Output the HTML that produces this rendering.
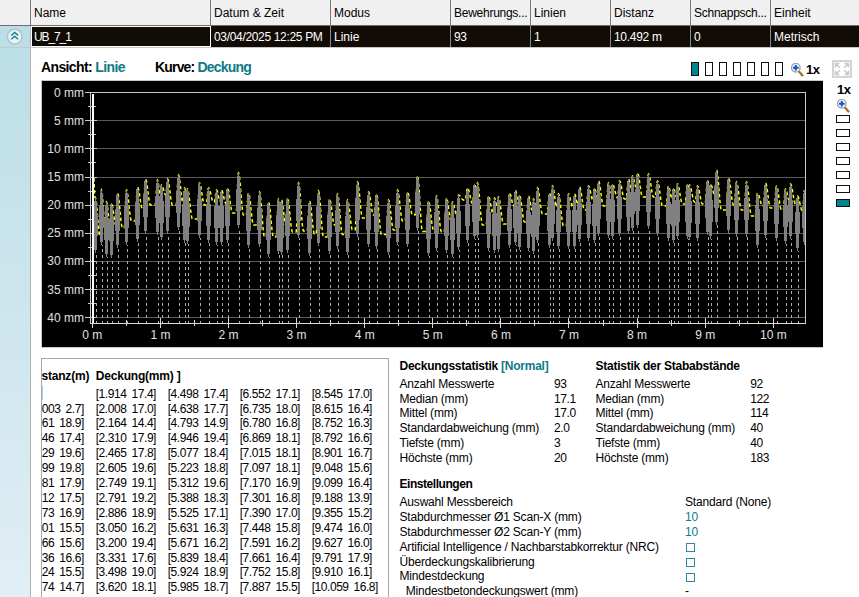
<!DOCTYPE html><html><head><meta charset="utf-8"><style>
*{margin:0;padding:0;box-sizing:border-box}
html,body{width:859px;height:597px;overflow:hidden;background:#fff;font-family:"Liberation Sans",sans-serif;font-size:12px;color:#000}
.a{position:absolute;white-space:nowrap;line-height:14px}
.vs{position:absolute;top:0;width:1px;height:25px;background:#7a7a7a}
.ht{position:absolute;top:6px;font-size:12px;color:#000;white-space:nowrap;line-height:14px}
.rs{position:absolute;top:26px;width:1px;height:21px;background:#8a8a8a}
.rt{position:absolute;top:30px;font-size:12px;color:#fff;white-space:nowrap;line-height:14px}
.lbl{position:absolute;top:59px;font-size:14px;font-weight:bold;white-space:nowrap;line-height:16px;letter-spacing:-0.62px}
.teal{color:#0f7a88}
.tb{position:absolute;font-size:12px;white-space:nowrap;line-height:14px}
.b{font-weight:bold}
</style></head><body>
<div class="a" style="left:0px;top:0px;width:859px;height:25px;background:#f0f0f0;"></div>
<div class="a" style="left:0px;top:25px;width:859px;height:1px;background:#6e6e6e;"></div>
<div class="vs" style="left:30px"></div>
<div class="vs" style="left:210px"></div>
<div class="vs" style="left:330px"></div>
<div class="vs" style="left:450px"></div>
<div class="vs" style="left:530px"></div>
<div class="vs" style="left:610px"></div>
<div class="vs" style="left:690px"></div>
<div class="vs" style="left:770px"></div>
<div class="ht" style="left:34px;letter-spacing:0px">Name</div>
<div class="ht" style="left:214px;letter-spacing:0px">Datum &amp; Zeit</div>
<div class="ht" style="left:334px;letter-spacing:0px">Modus</div>
<div class="ht" style="left:454px;letter-spacing:-0.26px">Bewehrungs...</div>
<div class="ht" style="left:534px;letter-spacing:0px">Linien</div>
<div class="ht" style="left:614px;letter-spacing:0px">Distanz</div>
<div class="ht" style="left:694px;letter-spacing:-0.26px">Schnappsch...</div>
<div class="ht" style="left:774px;letter-spacing:0px">Einheit</div>
<div class="a" style="left:0px;top:26px;width:30px;height:571px;background:linear-gradient(#bbdee6,#cee6ee 52%,#e1eef5);"></div>
<div class="a" style="left:30px;top:26px;width:1px;height:571px;background:#b4b4b4;"></div>
<div class="a" style="left:31px;top:26px;width:180px;height:21px;background:#ffffff;"></div>
<div class="a" style="left:32px;top:27px;width:178px;height:19px;background:#120c06;"></div>
<div class="a" style="left:211px;top:26px;width:648px;height:21px;background:#120c06;"></div>
<div class="rs" style="left:330px"></div>
<div class="rs" style="left:450px"></div>
<div class="rs" style="left:530px"></div>
<div class="rs" style="left:610px"></div>
<div class="rs" style="left:690px"></div>
<div class="rs" style="left:770px"></div>
<div class="rt" style="left:34px;letter-spacing:-1.1px">UB_7_1</div>
<div class="rt" style="left:214px;letter-spacing:-0.33px">03/04/2025 12:25 PM</div>
<div class="rt" style="left:334px;letter-spacing:0px">Linie</div>
<div class="rt" style="left:454px;letter-spacing:-0.3px">93</div>
<div class="rt" style="left:534px;letter-spacing:0px">1</div>
<div class="rt" style="left:614px;letter-spacing:-0.3px">10.492 m</div>
<div class="rt" style="left:694px;letter-spacing:0px">0</div>
<div class="rt" style="left:774px;letter-spacing:0px">Metrisch</div>
<div class="a" style="left:0px;top:47px;width:859px;height:1px;background:#c8c8c8;"></div>
<svg class="a" style="left:6px;top:28px" width="18" height="18" viewBox="0 0 18 18">
<circle cx="8.7" cy="8.6" r="7.4" fill="#eef0f0" stroke="#a6c9d2" stroke-width="1.6"/>
<path d="M5.3 7.4 L8.7 4.4 L12.1 7.4 M5.3 11.2 L8.7 8.2 L12.1 11.2" fill="none" stroke="#12899a" stroke-width="1.45"/>
</svg>
<div class="lbl" style="left:41px">Ansicht: <span class="teal">Linie</span></div>
<div class="lbl" style="left:155px;letter-spacing:-0.82px">Kurve: <span class="teal">Deckung</span></div>
<div class="a" style="left:691px;top:62px;width:8px;height:14px;background:#00858f;border:1px solid #111"></div>
<div class="a" style="left:705px;top:62px;width:8px;height:14px;background:#fff;border:1px solid #111"></div>
<div class="a" style="left:719px;top:62px;width:8px;height:14px;background:#fff;border:1px solid #111"></div>
<div class="a" style="left:733px;top:62px;width:8px;height:14px;background:#fff;border:1px solid #111"></div>
<div class="a" style="left:747px;top:62px;width:8px;height:14px;background:#fff;border:1px solid #111"></div>
<div class="a" style="left:761px;top:62px;width:8px;height:14px;background:#fff;border:1px solid #111"></div>
<div class="a" style="left:775px;top:62px;width:8px;height:14px;background:#fff;border:1px solid #111"></div>
<svg class="a" style="left:790px;top:63px" width="14" height="14" viewBox="0 0 14 14">
<line x1="9" y1="8.6" x2="12.4" y2="12.4" stroke="#b06a28" stroke-width="2.3" stroke-linecap="round"/>
<circle cx="5.8" cy="4.7" r="4.3" fill="#f6f9ff" stroke="#9ca3ab" stroke-width="1.3"/>
<path d="M5.8 1.9 V7.5 M3 4.7 H8.6" stroke="#0a56cc" stroke-width="2"/>
</svg>
<div class="a b" style="left:806px;top:62px;font-size:13px;line-height:15px;letter-spacing:-0.6px">1x</div>
<div class="a" style="left:832px;top:60px;width:20px;height:18px;background:#fff;border:2px solid #d4d4d4"></div>
<svg class="a" style="left:830px;top:58px" width="24" height="22" viewBox="0 0 24 22">
<g fill="#cacaca" stroke="#cacaca" stroke-width="1.6">
<path d="M5 5 H9.5 L5 9.5 Z M19 5 H14.5 L19 9.5 Z M5 17 H9.5 L5 12.5 Z M19 17 H14.5 L19 12.5 Z" stroke-width="0.6"/>
<path d="M5.5 5.5 L9.8 9.8 M18.5 5.5 L14.2 9.8 M5.5 16.5 L9.8 12.2 M18.5 16.5 L14.2 12.2" fill="none"/>
</g></svg>
<div class="a b" style="left:837px;top:82px;font-size:13px;line-height:15px;letter-spacing:-0.6px">1x</div>
<svg class="a" style="left:836px;top:99px" width="14" height="14" viewBox="0 0 14 14">
<line x1="9" y1="8.6" x2="12.4" y2="12.4" stroke="#b06a28" stroke-width="2.3" stroke-linecap="round"/>
<circle cx="5.8" cy="4.7" r="4.3" fill="#f6f9ff" stroke="#9ca3ab" stroke-width="1.3"/>
<path d="M5.8 1.9 V7.5 M3 4.7 H8.6" stroke="#0a56cc" stroke-width="2"/>
</svg>
<div class="a" style="left:836px;top:115px;width:14px;height:8px;background:#fff;border:1px solid #111"></div>
<div class="a" style="left:836px;top:129px;width:14px;height:8px;background:#fff;border:1px solid #111"></div>
<div class="a" style="left:836px;top:143px;width:14px;height:8px;background:#fff;border:1px solid #111"></div>
<div class="a" style="left:836px;top:157px;width:14px;height:8px;background:#fff;border:1px solid #111"></div>
<div class="a" style="left:836px;top:171px;width:14px;height:8px;background:#fff;border:1px solid #111"></div>
<div class="a" style="left:836px;top:185px;width:14px;height:8px;background:#fff;border:1px solid #111"></div>
<div class="a" style="left:836px;top:199px;width:14px;height:8px;background:#00858f;border:1px solid #111"></div>
<div class="a" style="left:41px;top:80px;width:782px;height:268px;background:#000;border-top:1px solid #c8c8c8;border-left:1px solid #c8c8c8;border-bottom:1px solid #c8c8c8"></div>
<svg class="a" style="left:0;top:0" width="859" height="597" shape-rendering="crispEdges">
<rect x="97" y="120" width="708" height="1" fill="#5a5a5a"/>
<rect x="97" y="148" width="708" height="1" fill="#5a5a5a"/>
<rect x="97" y="177" width="708" height="1" fill="#5a5a5a"/>
<rect x="97" y="205" width="708" height="1" fill="#5a5a5a"/>
<rect x="97" y="233" width="708" height="1" fill="#5a5a5a"/>
<rect x="97" y="261" width="708" height="1" fill="#5a5a5a"/>
<rect x="97" y="289" width="708" height="1" fill="#5a5a5a"/>
<rect x="97" y="317" width="708" height="1" fill="#5a5a5a"/>
<rect x="85" y="92" width="721" height="1" fill="#c8c8c8"/>
<rect x="85" y="92" width="12" height="1" fill="#c8c8c8"/>
<rect x="85" y="120" width="12" height="1" fill="#c8c8c8"/>
<rect x="85" y="148" width="12" height="1" fill="#c8c8c8"/>
<rect x="85" y="177" width="12" height="1" fill="#c8c8c8"/>
<rect x="85" y="205" width="12" height="1" fill="#c8c8c8"/>
<rect x="85" y="233" width="12" height="1" fill="#c8c8c8"/>
<rect x="85" y="261" width="12" height="1" fill="#c8c8c8"/>
<rect x="85" y="289" width="12" height="1" fill="#c8c8c8"/>
<rect x="85" y="317" width="12" height="1" fill="#c8c8c8"/>
<rect x="88" y="106" width="8" height="1" fill="#c8c8c8"/>
<rect x="88" y="134" width="8" height="1" fill="#c8c8c8"/>
<rect x="88" y="162" width="8" height="1" fill="#c8c8c8"/>
<rect x="88" y="191" width="8" height="1" fill="#c8c8c8"/>
<rect x="88" y="219" width="8" height="1" fill="#c8c8c8"/>
<rect x="88" y="247" width="8" height="1" fill="#c8c8c8"/>
<rect x="88" y="275" width="8" height="1" fill="#c8c8c8"/>
<rect x="88" y="303" width="8" height="1" fill="#c8c8c8"/>
<rect x="805" y="92" width="1" height="232" fill="#c8c8c8"/>
<rect x="96" y="255" width="1" height="3" fill="#acacac"/>
<rect x="96" y="261" width="1" height="3" fill="#acacac"/>
<rect x="96" y="267" width="1" height="3" fill="#acacac"/>
<rect x="96" y="273" width="1" height="3" fill="#acacac"/>
<rect x="96" y="279" width="1" height="3" fill="#acacac"/>
<rect x="96" y="285" width="1" height="3" fill="#acacac"/>
<rect x="96" y="291" width="1" height="3" fill="#acacac"/>
<rect x="96" y="297" width="1" height="3" fill="#acacac"/>
<rect x="96" y="303" width="1" height="3" fill="#acacac"/>
<rect x="96" y="309" width="1" height="3" fill="#acacac"/>
<rect x="96" y="315" width="1" height="3" fill="#acacac"/>
<rect x="96" y="321" width="1" height="3" fill="#acacac"/>
<rect x="102" y="245" width="1" height="1" fill="#acacac"/>
<rect x="102" y="249" width="1" height="3" fill="#acacac"/>
<rect x="102" y="255" width="1" height="3" fill="#acacac"/>
<rect x="102" y="261" width="1" height="3" fill="#acacac"/>
<rect x="102" y="267" width="1" height="3" fill="#acacac"/>
<rect x="102" y="273" width="1" height="3" fill="#acacac"/>
<rect x="102" y="279" width="1" height="3" fill="#acacac"/>
<rect x="102" y="285" width="1" height="3" fill="#acacac"/>
<rect x="102" y="291" width="1" height="3" fill="#acacac"/>
<rect x="102" y="297" width="1" height="3" fill="#acacac"/>
<rect x="102" y="303" width="1" height="3" fill="#acacac"/>
<rect x="102" y="309" width="1" height="3" fill="#acacac"/>
<rect x="102" y="315" width="1" height="3" fill="#acacac"/>
<rect x="102" y="321" width="1" height="3" fill="#acacac"/>
<rect x="107" y="257" width="1" height="1" fill="#acacac"/>
<rect x="107" y="261" width="1" height="3" fill="#acacac"/>
<rect x="107" y="267" width="1" height="3" fill="#acacac"/>
<rect x="107" y="273" width="1" height="3" fill="#acacac"/>
<rect x="107" y="279" width="1" height="3" fill="#acacac"/>
<rect x="107" y="285" width="1" height="3" fill="#acacac"/>
<rect x="107" y="291" width="1" height="3" fill="#acacac"/>
<rect x="107" y="297" width="1" height="3" fill="#acacac"/>
<rect x="107" y="303" width="1" height="3" fill="#acacac"/>
<rect x="107" y="309" width="1" height="3" fill="#acacac"/>
<rect x="107" y="315" width="1" height="3" fill="#acacac"/>
<rect x="107" y="321" width="1" height="3" fill="#acacac"/>
<rect x="112" y="261" width="1" height="3" fill="#acacac"/>
<rect x="112" y="267" width="1" height="3" fill="#acacac"/>
<rect x="112" y="273" width="1" height="3" fill="#acacac"/>
<rect x="112" y="279" width="1" height="3" fill="#acacac"/>
<rect x="112" y="285" width="1" height="3" fill="#acacac"/>
<rect x="112" y="291" width="1" height="3" fill="#acacac"/>
<rect x="112" y="297" width="1" height="3" fill="#acacac"/>
<rect x="112" y="303" width="1" height="3" fill="#acacac"/>
<rect x="112" y="309" width="1" height="3" fill="#acacac"/>
<rect x="112" y="315" width="1" height="3" fill="#acacac"/>
<rect x="112" y="321" width="1" height="3" fill="#acacac"/>
<rect x="118" y="249" width="1" height="3" fill="#acacac"/>
<rect x="118" y="255" width="1" height="3" fill="#acacac"/>
<rect x="118" y="261" width="1" height="3" fill="#acacac"/>
<rect x="118" y="267" width="1" height="3" fill="#acacac"/>
<rect x="118" y="273" width="1" height="3" fill="#acacac"/>
<rect x="118" y="279" width="1" height="3" fill="#acacac"/>
<rect x="118" y="285" width="1" height="3" fill="#acacac"/>
<rect x="118" y="291" width="1" height="3" fill="#acacac"/>
<rect x="118" y="297" width="1" height="3" fill="#acacac"/>
<rect x="118" y="303" width="1" height="3" fill="#acacac"/>
<rect x="118" y="309" width="1" height="3" fill="#acacac"/>
<rect x="118" y="315" width="1" height="3" fill="#acacac"/>
<rect x="118" y="321" width="1" height="3" fill="#acacac"/>
<rect x="127" y="245" width="1" height="1" fill="#acacac"/>
<rect x="127" y="249" width="1" height="3" fill="#acacac"/>
<rect x="127" y="255" width="1" height="3" fill="#acacac"/>
<rect x="127" y="261" width="1" height="3" fill="#acacac"/>
<rect x="127" y="267" width="1" height="3" fill="#acacac"/>
<rect x="127" y="273" width="1" height="3" fill="#acacac"/>
<rect x="127" y="279" width="1" height="3" fill="#acacac"/>
<rect x="127" y="285" width="1" height="3" fill="#acacac"/>
<rect x="127" y="291" width="1" height="3" fill="#acacac"/>
<rect x="127" y="297" width="1" height="3" fill="#acacac"/>
<rect x="127" y="303" width="1" height="3" fill="#acacac"/>
<rect x="127" y="309" width="1" height="3" fill="#acacac"/>
<rect x="127" y="315" width="1" height="3" fill="#acacac"/>
<rect x="127" y="321" width="1" height="3" fill="#acacac"/>
<rect x="138" y="243" width="1" height="3" fill="#acacac"/>
<rect x="138" y="249" width="1" height="3" fill="#acacac"/>
<rect x="138" y="255" width="1" height="3" fill="#acacac"/>
<rect x="138" y="261" width="1" height="3" fill="#acacac"/>
<rect x="138" y="267" width="1" height="3" fill="#acacac"/>
<rect x="138" y="273" width="1" height="3" fill="#acacac"/>
<rect x="138" y="279" width="1" height="3" fill="#acacac"/>
<rect x="138" y="285" width="1" height="3" fill="#acacac"/>
<rect x="138" y="291" width="1" height="3" fill="#acacac"/>
<rect x="138" y="297" width="1" height="3" fill="#acacac"/>
<rect x="138" y="303" width="1" height="3" fill="#acacac"/>
<rect x="138" y="309" width="1" height="3" fill="#acacac"/>
<rect x="138" y="315" width="1" height="3" fill="#acacac"/>
<rect x="138" y="321" width="1" height="3" fill="#acacac"/>
<rect x="146" y="237" width="1" height="3" fill="#acacac"/>
<rect x="146" y="243" width="1" height="3" fill="#acacac"/>
<rect x="146" y="249" width="1" height="3" fill="#acacac"/>
<rect x="146" y="255" width="1" height="3" fill="#acacac"/>
<rect x="146" y="261" width="1" height="3" fill="#acacac"/>
<rect x="146" y="267" width="1" height="3" fill="#acacac"/>
<rect x="146" y="273" width="1" height="3" fill="#acacac"/>
<rect x="146" y="279" width="1" height="3" fill="#acacac"/>
<rect x="146" y="285" width="1" height="3" fill="#acacac"/>
<rect x="146" y="291" width="1" height="3" fill="#acacac"/>
<rect x="146" y="297" width="1" height="3" fill="#acacac"/>
<rect x="146" y="303" width="1" height="3" fill="#acacac"/>
<rect x="146" y="309" width="1" height="3" fill="#acacac"/>
<rect x="146" y="315" width="1" height="3" fill="#acacac"/>
<rect x="146" y="321" width="1" height="3" fill="#acacac"/>
<rect x="158" y="237" width="1" height="3" fill="#acacac"/>
<rect x="158" y="243" width="1" height="3" fill="#acacac"/>
<rect x="158" y="249" width="1" height="3" fill="#acacac"/>
<rect x="158" y="255" width="1" height="3" fill="#acacac"/>
<rect x="158" y="261" width="1" height="3" fill="#acacac"/>
<rect x="158" y="267" width="1" height="3" fill="#acacac"/>
<rect x="158" y="273" width="1" height="3" fill="#acacac"/>
<rect x="158" y="279" width="1" height="3" fill="#acacac"/>
<rect x="158" y="285" width="1" height="3" fill="#acacac"/>
<rect x="158" y="291" width="1" height="3" fill="#acacac"/>
<rect x="158" y="297" width="1" height="3" fill="#acacac"/>
<rect x="158" y="303" width="1" height="3" fill="#acacac"/>
<rect x="158" y="309" width="1" height="3" fill="#acacac"/>
<rect x="158" y="315" width="1" height="3" fill="#acacac"/>
<rect x="158" y="321" width="1" height="3" fill="#acacac"/>
<rect x="162" y="243" width="1" height="3" fill="#acacac"/>
<rect x="162" y="249" width="1" height="3" fill="#acacac"/>
<rect x="162" y="255" width="1" height="3" fill="#acacac"/>
<rect x="162" y="261" width="1" height="3" fill="#acacac"/>
<rect x="162" y="267" width="1" height="3" fill="#acacac"/>
<rect x="162" y="273" width="1" height="3" fill="#acacac"/>
<rect x="162" y="279" width="1" height="3" fill="#acacac"/>
<rect x="162" y="285" width="1" height="3" fill="#acacac"/>
<rect x="162" y="291" width="1" height="3" fill="#acacac"/>
<rect x="162" y="297" width="1" height="3" fill="#acacac"/>
<rect x="162" y="303" width="1" height="3" fill="#acacac"/>
<rect x="162" y="309" width="1" height="3" fill="#acacac"/>
<rect x="162" y="315" width="1" height="3" fill="#acacac"/>
<rect x="162" y="321" width="1" height="3" fill="#acacac"/>
<rect x="168" y="237" width="1" height="3" fill="#acacac"/>
<rect x="168" y="243" width="1" height="3" fill="#acacac"/>
<rect x="168" y="249" width="1" height="3" fill="#acacac"/>
<rect x="168" y="255" width="1" height="3" fill="#acacac"/>
<rect x="168" y="261" width="1" height="3" fill="#acacac"/>
<rect x="168" y="267" width="1" height="3" fill="#acacac"/>
<rect x="168" y="273" width="1" height="3" fill="#acacac"/>
<rect x="168" y="279" width="1" height="3" fill="#acacac"/>
<rect x="168" y="285" width="1" height="3" fill="#acacac"/>
<rect x="168" y="291" width="1" height="3" fill="#acacac"/>
<rect x="168" y="297" width="1" height="3" fill="#acacac"/>
<rect x="168" y="303" width="1" height="3" fill="#acacac"/>
<rect x="168" y="309" width="1" height="3" fill="#acacac"/>
<rect x="168" y="315" width="1" height="3" fill="#acacac"/>
<rect x="168" y="321" width="1" height="3" fill="#acacac"/>
<rect x="179" y="231" width="1" height="3" fill="#acacac"/>
<rect x="179" y="237" width="1" height="3" fill="#acacac"/>
<rect x="179" y="243" width="1" height="3" fill="#acacac"/>
<rect x="179" y="249" width="1" height="3" fill="#acacac"/>
<rect x="179" y="255" width="1" height="3" fill="#acacac"/>
<rect x="179" y="261" width="1" height="3" fill="#acacac"/>
<rect x="179" y="267" width="1" height="3" fill="#acacac"/>
<rect x="179" y="273" width="1" height="3" fill="#acacac"/>
<rect x="179" y="279" width="1" height="3" fill="#acacac"/>
<rect x="179" y="285" width="1" height="3" fill="#acacac"/>
<rect x="179" y="291" width="1" height="3" fill="#acacac"/>
<rect x="179" y="297" width="1" height="3" fill="#acacac"/>
<rect x="179" y="303" width="1" height="3" fill="#acacac"/>
<rect x="179" y="309" width="1" height="3" fill="#acacac"/>
<rect x="179" y="315" width="1" height="3" fill="#acacac"/>
<rect x="179" y="321" width="1" height="3" fill="#acacac"/>
<rect x="185" y="243" width="1" height="3" fill="#acacac"/>
<rect x="185" y="249" width="1" height="3" fill="#acacac"/>
<rect x="185" y="255" width="1" height="3" fill="#acacac"/>
<rect x="185" y="261" width="1" height="3" fill="#acacac"/>
<rect x="185" y="267" width="1" height="3" fill="#acacac"/>
<rect x="185" y="273" width="1" height="3" fill="#acacac"/>
<rect x="185" y="279" width="1" height="3" fill="#acacac"/>
<rect x="185" y="285" width="1" height="3" fill="#acacac"/>
<rect x="185" y="291" width="1" height="3" fill="#acacac"/>
<rect x="185" y="297" width="1" height="3" fill="#acacac"/>
<rect x="185" y="303" width="1" height="3" fill="#acacac"/>
<rect x="185" y="309" width="1" height="3" fill="#acacac"/>
<rect x="185" y="315" width="1" height="3" fill="#acacac"/>
<rect x="185" y="321" width="1" height="3" fill="#acacac"/>
<rect x="188" y="244" width="1" height="2" fill="#acacac"/>
<rect x="188" y="249" width="1" height="3" fill="#acacac"/>
<rect x="188" y="255" width="1" height="3" fill="#acacac"/>
<rect x="188" y="261" width="1" height="3" fill="#acacac"/>
<rect x="188" y="267" width="1" height="3" fill="#acacac"/>
<rect x="188" y="273" width="1" height="3" fill="#acacac"/>
<rect x="188" y="279" width="1" height="3" fill="#acacac"/>
<rect x="188" y="285" width="1" height="3" fill="#acacac"/>
<rect x="188" y="291" width="1" height="3" fill="#acacac"/>
<rect x="188" y="297" width="1" height="3" fill="#acacac"/>
<rect x="188" y="303" width="1" height="3" fill="#acacac"/>
<rect x="188" y="309" width="1" height="3" fill="#acacac"/>
<rect x="188" y="315" width="1" height="3" fill="#acacac"/>
<rect x="188" y="321" width="1" height="3" fill="#acacac"/>
<rect x="200" y="238" width="1" height="2" fill="#acacac"/>
<rect x="200" y="243" width="1" height="3" fill="#acacac"/>
<rect x="200" y="249" width="1" height="3" fill="#acacac"/>
<rect x="200" y="255" width="1" height="3" fill="#acacac"/>
<rect x="200" y="261" width="1" height="3" fill="#acacac"/>
<rect x="200" y="267" width="1" height="3" fill="#acacac"/>
<rect x="200" y="273" width="1" height="3" fill="#acacac"/>
<rect x="200" y="279" width="1" height="3" fill="#acacac"/>
<rect x="200" y="285" width="1" height="3" fill="#acacac"/>
<rect x="200" y="291" width="1" height="3" fill="#acacac"/>
<rect x="200" y="297" width="1" height="3" fill="#acacac"/>
<rect x="200" y="303" width="1" height="3" fill="#acacac"/>
<rect x="200" y="309" width="1" height="3" fill="#acacac"/>
<rect x="200" y="315" width="1" height="3" fill="#acacac"/>
<rect x="200" y="321" width="1" height="3" fill="#acacac"/>
<rect x="209" y="243" width="1" height="3" fill="#acacac"/>
<rect x="209" y="249" width="1" height="3" fill="#acacac"/>
<rect x="209" y="255" width="1" height="3" fill="#acacac"/>
<rect x="209" y="261" width="1" height="3" fill="#acacac"/>
<rect x="209" y="267" width="1" height="3" fill="#acacac"/>
<rect x="209" y="273" width="1" height="3" fill="#acacac"/>
<rect x="209" y="279" width="1" height="3" fill="#acacac"/>
<rect x="209" y="285" width="1" height="3" fill="#acacac"/>
<rect x="209" y="291" width="1" height="3" fill="#acacac"/>
<rect x="209" y="297" width="1" height="3" fill="#acacac"/>
<rect x="209" y="303" width="1" height="3" fill="#acacac"/>
<rect x="209" y="309" width="1" height="3" fill="#acacac"/>
<rect x="209" y="315" width="1" height="3" fill="#acacac"/>
<rect x="209" y="321" width="1" height="3" fill="#acacac"/>
<rect x="217" y="245" width="1" height="1" fill="#acacac"/>
<rect x="217" y="249" width="1" height="3" fill="#acacac"/>
<rect x="217" y="255" width="1" height="3" fill="#acacac"/>
<rect x="217" y="261" width="1" height="3" fill="#acacac"/>
<rect x="217" y="267" width="1" height="3" fill="#acacac"/>
<rect x="217" y="273" width="1" height="3" fill="#acacac"/>
<rect x="217" y="279" width="1" height="3" fill="#acacac"/>
<rect x="217" y="285" width="1" height="3" fill="#acacac"/>
<rect x="217" y="291" width="1" height="3" fill="#acacac"/>
<rect x="217" y="297" width="1" height="3" fill="#acacac"/>
<rect x="217" y="303" width="1" height="3" fill="#acacac"/>
<rect x="217" y="309" width="1" height="3" fill="#acacac"/>
<rect x="217" y="315" width="1" height="3" fill="#acacac"/>
<rect x="217" y="321" width="1" height="3" fill="#acacac"/>
<rect x="222" y="245" width="1" height="1" fill="#acacac"/>
<rect x="222" y="249" width="1" height="3" fill="#acacac"/>
<rect x="222" y="255" width="1" height="3" fill="#acacac"/>
<rect x="222" y="261" width="1" height="3" fill="#acacac"/>
<rect x="222" y="267" width="1" height="3" fill="#acacac"/>
<rect x="222" y="273" width="1" height="3" fill="#acacac"/>
<rect x="222" y="279" width="1" height="3" fill="#acacac"/>
<rect x="222" y="285" width="1" height="3" fill="#acacac"/>
<rect x="222" y="291" width="1" height="3" fill="#acacac"/>
<rect x="222" y="297" width="1" height="3" fill="#acacac"/>
<rect x="222" y="303" width="1" height="3" fill="#acacac"/>
<rect x="222" y="309" width="1" height="3" fill="#acacac"/>
<rect x="222" y="315" width="1" height="3" fill="#acacac"/>
<rect x="222" y="321" width="1" height="3" fill="#acacac"/>
<rect x="228" y="243" width="1" height="3" fill="#acacac"/>
<rect x="228" y="249" width="1" height="3" fill="#acacac"/>
<rect x="228" y="255" width="1" height="3" fill="#acacac"/>
<rect x="228" y="261" width="1" height="3" fill="#acacac"/>
<rect x="228" y="267" width="1" height="3" fill="#acacac"/>
<rect x="228" y="273" width="1" height="3" fill="#acacac"/>
<rect x="228" y="279" width="1" height="3" fill="#acacac"/>
<rect x="228" y="285" width="1" height="3" fill="#acacac"/>
<rect x="228" y="291" width="1" height="3" fill="#acacac"/>
<rect x="228" y="297" width="1" height="3" fill="#acacac"/>
<rect x="228" y="303" width="1" height="3" fill="#acacac"/>
<rect x="228" y="309" width="1" height="3" fill="#acacac"/>
<rect x="228" y="315" width="1" height="3" fill="#acacac"/>
<rect x="228" y="321" width="1" height="3" fill="#acacac"/>
<rect x="239" y="231" width="1" height="3" fill="#acacac"/>
<rect x="239" y="237" width="1" height="3" fill="#acacac"/>
<rect x="239" y="243" width="1" height="3" fill="#acacac"/>
<rect x="239" y="249" width="1" height="3" fill="#acacac"/>
<rect x="239" y="255" width="1" height="3" fill="#acacac"/>
<rect x="239" y="261" width="1" height="3" fill="#acacac"/>
<rect x="239" y="267" width="1" height="3" fill="#acacac"/>
<rect x="239" y="273" width="1" height="3" fill="#acacac"/>
<rect x="239" y="279" width="1" height="3" fill="#acacac"/>
<rect x="239" y="285" width="1" height="3" fill="#acacac"/>
<rect x="239" y="291" width="1" height="3" fill="#acacac"/>
<rect x="239" y="297" width="1" height="3" fill="#acacac"/>
<rect x="239" y="303" width="1" height="3" fill="#acacac"/>
<rect x="239" y="309" width="1" height="3" fill="#acacac"/>
<rect x="239" y="315" width="1" height="3" fill="#acacac"/>
<rect x="239" y="321" width="1" height="3" fill="#acacac"/>
<rect x="249" y="249" width="1" height="3" fill="#acacac"/>
<rect x="249" y="255" width="1" height="3" fill="#acacac"/>
<rect x="249" y="261" width="1" height="3" fill="#acacac"/>
<rect x="249" y="267" width="1" height="3" fill="#acacac"/>
<rect x="249" y="273" width="1" height="3" fill="#acacac"/>
<rect x="249" y="279" width="1" height="3" fill="#acacac"/>
<rect x="249" y="285" width="1" height="3" fill="#acacac"/>
<rect x="249" y="291" width="1" height="3" fill="#acacac"/>
<rect x="249" y="297" width="1" height="3" fill="#acacac"/>
<rect x="249" y="303" width="1" height="3" fill="#acacac"/>
<rect x="249" y="309" width="1" height="3" fill="#acacac"/>
<rect x="249" y="315" width="1" height="3" fill="#acacac"/>
<rect x="249" y="321" width="1" height="3" fill="#acacac"/>
<rect x="260" y="249" width="1" height="3" fill="#acacac"/>
<rect x="260" y="255" width="1" height="3" fill="#acacac"/>
<rect x="260" y="261" width="1" height="3" fill="#acacac"/>
<rect x="260" y="267" width="1" height="3" fill="#acacac"/>
<rect x="260" y="273" width="1" height="3" fill="#acacac"/>
<rect x="260" y="279" width="1" height="3" fill="#acacac"/>
<rect x="260" y="285" width="1" height="3" fill="#acacac"/>
<rect x="260" y="291" width="1" height="3" fill="#acacac"/>
<rect x="260" y="297" width="1" height="3" fill="#acacac"/>
<rect x="260" y="303" width="1" height="3" fill="#acacac"/>
<rect x="260" y="309" width="1" height="3" fill="#acacac"/>
<rect x="260" y="315" width="1" height="3" fill="#acacac"/>
<rect x="260" y="321" width="1" height="3" fill="#acacac"/>
<rect x="269" y="257" width="1" height="1" fill="#acacac"/>
<rect x="269" y="261" width="1" height="3" fill="#acacac"/>
<rect x="269" y="267" width="1" height="3" fill="#acacac"/>
<rect x="269" y="273" width="1" height="3" fill="#acacac"/>
<rect x="269" y="279" width="1" height="3" fill="#acacac"/>
<rect x="269" y="285" width="1" height="3" fill="#acacac"/>
<rect x="269" y="291" width="1" height="3" fill="#acacac"/>
<rect x="269" y="297" width="1" height="3" fill="#acacac"/>
<rect x="269" y="303" width="1" height="3" fill="#acacac"/>
<rect x="269" y="309" width="1" height="3" fill="#acacac"/>
<rect x="269" y="315" width="1" height="3" fill="#acacac"/>
<rect x="269" y="321" width="1" height="3" fill="#acacac"/>
<rect x="279" y="255" width="1" height="3" fill="#acacac"/>
<rect x="279" y="261" width="1" height="3" fill="#acacac"/>
<rect x="279" y="267" width="1" height="3" fill="#acacac"/>
<rect x="279" y="273" width="1" height="3" fill="#acacac"/>
<rect x="279" y="279" width="1" height="3" fill="#acacac"/>
<rect x="279" y="285" width="1" height="3" fill="#acacac"/>
<rect x="279" y="291" width="1" height="3" fill="#acacac"/>
<rect x="279" y="297" width="1" height="3" fill="#acacac"/>
<rect x="279" y="303" width="1" height="3" fill="#acacac"/>
<rect x="279" y="309" width="1" height="3" fill="#acacac"/>
<rect x="279" y="315" width="1" height="3" fill="#acacac"/>
<rect x="279" y="321" width="1" height="3" fill="#acacac"/>
<rect x="282" y="255" width="1" height="3" fill="#acacac"/>
<rect x="282" y="261" width="1" height="3" fill="#acacac"/>
<rect x="282" y="267" width="1" height="3" fill="#acacac"/>
<rect x="282" y="273" width="1" height="3" fill="#acacac"/>
<rect x="282" y="279" width="1" height="3" fill="#acacac"/>
<rect x="282" y="285" width="1" height="3" fill="#acacac"/>
<rect x="282" y="291" width="1" height="3" fill="#acacac"/>
<rect x="282" y="297" width="1" height="3" fill="#acacac"/>
<rect x="282" y="303" width="1" height="3" fill="#acacac"/>
<rect x="282" y="309" width="1" height="3" fill="#acacac"/>
<rect x="282" y="315" width="1" height="3" fill="#acacac"/>
<rect x="282" y="321" width="1" height="3" fill="#acacac"/>
<rect x="288" y="255" width="1" height="3" fill="#acacac"/>
<rect x="288" y="261" width="1" height="3" fill="#acacac"/>
<rect x="288" y="267" width="1" height="3" fill="#acacac"/>
<rect x="288" y="273" width="1" height="3" fill="#acacac"/>
<rect x="288" y="279" width="1" height="3" fill="#acacac"/>
<rect x="288" y="285" width="1" height="3" fill="#acacac"/>
<rect x="288" y="291" width="1" height="3" fill="#acacac"/>
<rect x="288" y="297" width="1" height="3" fill="#acacac"/>
<rect x="288" y="303" width="1" height="3" fill="#acacac"/>
<rect x="288" y="309" width="1" height="3" fill="#acacac"/>
<rect x="288" y="315" width="1" height="3" fill="#acacac"/>
<rect x="288" y="321" width="1" height="3" fill="#acacac"/>
<rect x="299" y="238" width="1" height="2" fill="#acacac"/>
<rect x="299" y="243" width="1" height="3" fill="#acacac"/>
<rect x="299" y="249" width="1" height="3" fill="#acacac"/>
<rect x="299" y="255" width="1" height="3" fill="#acacac"/>
<rect x="299" y="261" width="1" height="3" fill="#acacac"/>
<rect x="299" y="267" width="1" height="3" fill="#acacac"/>
<rect x="299" y="273" width="1" height="3" fill="#acacac"/>
<rect x="299" y="279" width="1" height="3" fill="#acacac"/>
<rect x="299" y="285" width="1" height="3" fill="#acacac"/>
<rect x="299" y="291" width="1" height="3" fill="#acacac"/>
<rect x="299" y="297" width="1" height="3" fill="#acacac"/>
<rect x="299" y="303" width="1" height="3" fill="#acacac"/>
<rect x="299" y="309" width="1" height="3" fill="#acacac"/>
<rect x="299" y="315" width="1" height="3" fill="#acacac"/>
<rect x="299" y="321" width="1" height="3" fill="#acacac"/>
<rect x="310" y="256" width="1" height="2" fill="#acacac"/>
<rect x="310" y="261" width="1" height="3" fill="#acacac"/>
<rect x="310" y="267" width="1" height="3" fill="#acacac"/>
<rect x="310" y="273" width="1" height="3" fill="#acacac"/>
<rect x="310" y="279" width="1" height="3" fill="#acacac"/>
<rect x="310" y="285" width="1" height="3" fill="#acacac"/>
<rect x="310" y="291" width="1" height="3" fill="#acacac"/>
<rect x="310" y="297" width="1" height="3" fill="#acacac"/>
<rect x="310" y="303" width="1" height="3" fill="#acacac"/>
<rect x="310" y="309" width="1" height="3" fill="#acacac"/>
<rect x="310" y="315" width="1" height="3" fill="#acacac"/>
<rect x="310" y="321" width="1" height="3" fill="#acacac"/>
<rect x="319" y="249" width="1" height="3" fill="#acacac"/>
<rect x="319" y="255" width="1" height="3" fill="#acacac"/>
<rect x="319" y="261" width="1" height="3" fill="#acacac"/>
<rect x="319" y="267" width="1" height="3" fill="#acacac"/>
<rect x="319" y="273" width="1" height="3" fill="#acacac"/>
<rect x="319" y="279" width="1" height="3" fill="#acacac"/>
<rect x="319" y="285" width="1" height="3" fill="#acacac"/>
<rect x="319" y="291" width="1" height="3" fill="#acacac"/>
<rect x="319" y="297" width="1" height="3" fill="#acacac"/>
<rect x="319" y="303" width="1" height="3" fill="#acacac"/>
<rect x="319" y="309" width="1" height="3" fill="#acacac"/>
<rect x="319" y="315" width="1" height="3" fill="#acacac"/>
<rect x="319" y="321" width="1" height="3" fill="#acacac"/>
<rect x="330" y="255" width="1" height="3" fill="#acacac"/>
<rect x="330" y="261" width="1" height="3" fill="#acacac"/>
<rect x="330" y="267" width="1" height="3" fill="#acacac"/>
<rect x="330" y="273" width="1" height="3" fill="#acacac"/>
<rect x="330" y="279" width="1" height="3" fill="#acacac"/>
<rect x="330" y="285" width="1" height="3" fill="#acacac"/>
<rect x="330" y="291" width="1" height="3" fill="#acacac"/>
<rect x="330" y="297" width="1" height="3" fill="#acacac"/>
<rect x="330" y="303" width="1" height="3" fill="#acacac"/>
<rect x="330" y="309" width="1" height="3" fill="#acacac"/>
<rect x="330" y="315" width="1" height="3" fill="#acacac"/>
<rect x="330" y="321" width="1" height="3" fill="#acacac"/>
<rect x="338" y="249" width="1" height="3" fill="#acacac"/>
<rect x="338" y="255" width="1" height="3" fill="#acacac"/>
<rect x="338" y="261" width="1" height="3" fill="#acacac"/>
<rect x="338" y="267" width="1" height="3" fill="#acacac"/>
<rect x="338" y="273" width="1" height="3" fill="#acacac"/>
<rect x="338" y="279" width="1" height="3" fill="#acacac"/>
<rect x="338" y="285" width="1" height="3" fill="#acacac"/>
<rect x="338" y="291" width="1" height="3" fill="#acacac"/>
<rect x="338" y="297" width="1" height="3" fill="#acacac"/>
<rect x="338" y="303" width="1" height="3" fill="#acacac"/>
<rect x="338" y="309" width="1" height="3" fill="#acacac"/>
<rect x="338" y="315" width="1" height="3" fill="#acacac"/>
<rect x="338" y="321" width="1" height="3" fill="#acacac"/>
<rect x="348" y="255" width="1" height="3" fill="#acacac"/>
<rect x="348" y="261" width="1" height="3" fill="#acacac"/>
<rect x="348" y="267" width="1" height="3" fill="#acacac"/>
<rect x="348" y="273" width="1" height="3" fill="#acacac"/>
<rect x="348" y="279" width="1" height="3" fill="#acacac"/>
<rect x="348" y="285" width="1" height="3" fill="#acacac"/>
<rect x="348" y="291" width="1" height="3" fill="#acacac"/>
<rect x="348" y="297" width="1" height="3" fill="#acacac"/>
<rect x="348" y="303" width="1" height="3" fill="#acacac"/>
<rect x="348" y="309" width="1" height="3" fill="#acacac"/>
<rect x="348" y="315" width="1" height="3" fill="#acacac"/>
<rect x="348" y="321" width="1" height="3" fill="#acacac"/>
<rect x="358" y="237" width="1" height="3" fill="#acacac"/>
<rect x="358" y="243" width="1" height="3" fill="#acacac"/>
<rect x="358" y="249" width="1" height="3" fill="#acacac"/>
<rect x="358" y="255" width="1" height="3" fill="#acacac"/>
<rect x="358" y="261" width="1" height="3" fill="#acacac"/>
<rect x="358" y="267" width="1" height="3" fill="#acacac"/>
<rect x="358" y="273" width="1" height="3" fill="#acacac"/>
<rect x="358" y="279" width="1" height="3" fill="#acacac"/>
<rect x="358" y="285" width="1" height="3" fill="#acacac"/>
<rect x="358" y="291" width="1" height="3" fill="#acacac"/>
<rect x="358" y="297" width="1" height="3" fill="#acacac"/>
<rect x="358" y="303" width="1" height="3" fill="#acacac"/>
<rect x="358" y="309" width="1" height="3" fill="#acacac"/>
<rect x="358" y="315" width="1" height="3" fill="#acacac"/>
<rect x="358" y="321" width="1" height="3" fill="#acacac"/>
<rect x="369" y="249" width="1" height="3" fill="#acacac"/>
<rect x="369" y="255" width="1" height="3" fill="#acacac"/>
<rect x="369" y="261" width="1" height="3" fill="#acacac"/>
<rect x="369" y="267" width="1" height="3" fill="#acacac"/>
<rect x="369" y="273" width="1" height="3" fill="#acacac"/>
<rect x="369" y="279" width="1" height="3" fill="#acacac"/>
<rect x="369" y="285" width="1" height="3" fill="#acacac"/>
<rect x="369" y="291" width="1" height="3" fill="#acacac"/>
<rect x="369" y="297" width="1" height="3" fill="#acacac"/>
<rect x="369" y="303" width="1" height="3" fill="#acacac"/>
<rect x="369" y="309" width="1" height="3" fill="#acacac"/>
<rect x="369" y="315" width="1" height="3" fill="#acacac"/>
<rect x="369" y="321" width="1" height="3" fill="#acacac"/>
<rect x="377" y="249" width="1" height="3" fill="#acacac"/>
<rect x="377" y="255" width="1" height="3" fill="#acacac"/>
<rect x="377" y="261" width="1" height="3" fill="#acacac"/>
<rect x="377" y="267" width="1" height="3" fill="#acacac"/>
<rect x="377" y="273" width="1" height="3" fill="#acacac"/>
<rect x="377" y="279" width="1" height="3" fill="#acacac"/>
<rect x="377" y="285" width="1" height="3" fill="#acacac"/>
<rect x="377" y="291" width="1" height="3" fill="#acacac"/>
<rect x="377" y="297" width="1" height="3" fill="#acacac"/>
<rect x="377" y="303" width="1" height="3" fill="#acacac"/>
<rect x="377" y="309" width="1" height="3" fill="#acacac"/>
<rect x="377" y="315" width="1" height="3" fill="#acacac"/>
<rect x="377" y="321" width="1" height="3" fill="#acacac"/>
<rect x="389" y="255" width="1" height="3" fill="#acacac"/>
<rect x="389" y="261" width="1" height="3" fill="#acacac"/>
<rect x="389" y="267" width="1" height="3" fill="#acacac"/>
<rect x="389" y="273" width="1" height="3" fill="#acacac"/>
<rect x="389" y="279" width="1" height="3" fill="#acacac"/>
<rect x="389" y="285" width="1" height="3" fill="#acacac"/>
<rect x="389" y="291" width="1" height="3" fill="#acacac"/>
<rect x="389" y="297" width="1" height="3" fill="#acacac"/>
<rect x="389" y="303" width="1" height="3" fill="#acacac"/>
<rect x="389" y="309" width="1" height="3" fill="#acacac"/>
<rect x="389" y="315" width="1" height="3" fill="#acacac"/>
<rect x="389" y="321" width="1" height="3" fill="#acacac"/>
<rect x="398" y="245" width="1" height="1" fill="#acacac"/>
<rect x="398" y="249" width="1" height="3" fill="#acacac"/>
<rect x="398" y="255" width="1" height="3" fill="#acacac"/>
<rect x="398" y="261" width="1" height="3" fill="#acacac"/>
<rect x="398" y="267" width="1" height="3" fill="#acacac"/>
<rect x="398" y="273" width="1" height="3" fill="#acacac"/>
<rect x="398" y="279" width="1" height="3" fill="#acacac"/>
<rect x="398" y="285" width="1" height="3" fill="#acacac"/>
<rect x="398" y="291" width="1" height="3" fill="#acacac"/>
<rect x="398" y="297" width="1" height="3" fill="#acacac"/>
<rect x="398" y="303" width="1" height="3" fill="#acacac"/>
<rect x="398" y="309" width="1" height="3" fill="#acacac"/>
<rect x="398" y="315" width="1" height="3" fill="#acacac"/>
<rect x="398" y="321" width="1" height="3" fill="#acacac"/>
<rect x="408" y="249" width="1" height="3" fill="#acacac"/>
<rect x="408" y="255" width="1" height="3" fill="#acacac"/>
<rect x="408" y="261" width="1" height="3" fill="#acacac"/>
<rect x="408" y="267" width="1" height="3" fill="#acacac"/>
<rect x="408" y="273" width="1" height="3" fill="#acacac"/>
<rect x="408" y="279" width="1" height="3" fill="#acacac"/>
<rect x="408" y="285" width="1" height="3" fill="#acacac"/>
<rect x="408" y="291" width="1" height="3" fill="#acacac"/>
<rect x="408" y="297" width="1" height="3" fill="#acacac"/>
<rect x="408" y="303" width="1" height="3" fill="#acacac"/>
<rect x="408" y="309" width="1" height="3" fill="#acacac"/>
<rect x="408" y="315" width="1" height="3" fill="#acacac"/>
<rect x="408" y="321" width="1" height="3" fill="#acacac"/>
<rect x="418" y="231" width="1" height="3" fill="#acacac"/>
<rect x="418" y="237" width="1" height="3" fill="#acacac"/>
<rect x="418" y="243" width="1" height="3" fill="#acacac"/>
<rect x="418" y="249" width="1" height="3" fill="#acacac"/>
<rect x="418" y="255" width="1" height="3" fill="#acacac"/>
<rect x="418" y="261" width="1" height="3" fill="#acacac"/>
<rect x="418" y="267" width="1" height="3" fill="#acacac"/>
<rect x="418" y="273" width="1" height="3" fill="#acacac"/>
<rect x="418" y="279" width="1" height="3" fill="#acacac"/>
<rect x="418" y="285" width="1" height="3" fill="#acacac"/>
<rect x="418" y="291" width="1" height="3" fill="#acacac"/>
<rect x="418" y="297" width="1" height="3" fill="#acacac"/>
<rect x="418" y="303" width="1" height="3" fill="#acacac"/>
<rect x="418" y="309" width="1" height="3" fill="#acacac"/>
<rect x="418" y="315" width="1" height="3" fill="#acacac"/>
<rect x="418" y="321" width="1" height="3" fill="#acacac"/>
<rect x="429" y="256" width="1" height="2" fill="#acacac"/>
<rect x="429" y="261" width="1" height="3" fill="#acacac"/>
<rect x="429" y="267" width="1" height="3" fill="#acacac"/>
<rect x="429" y="273" width="1" height="3" fill="#acacac"/>
<rect x="429" y="279" width="1" height="3" fill="#acacac"/>
<rect x="429" y="285" width="1" height="3" fill="#acacac"/>
<rect x="429" y="291" width="1" height="3" fill="#acacac"/>
<rect x="429" y="297" width="1" height="3" fill="#acacac"/>
<rect x="429" y="303" width="1" height="3" fill="#acacac"/>
<rect x="429" y="309" width="1" height="3" fill="#acacac"/>
<rect x="429" y="315" width="1" height="3" fill="#acacac"/>
<rect x="429" y="321" width="1" height="3" fill="#acacac"/>
<rect x="437" y="251" width="1" height="1" fill="#acacac"/>
<rect x="437" y="255" width="1" height="3" fill="#acacac"/>
<rect x="437" y="261" width="1" height="3" fill="#acacac"/>
<rect x="437" y="267" width="1" height="3" fill="#acacac"/>
<rect x="437" y="273" width="1" height="3" fill="#acacac"/>
<rect x="437" y="279" width="1" height="3" fill="#acacac"/>
<rect x="437" y="285" width="1" height="3" fill="#acacac"/>
<rect x="437" y="291" width="1" height="3" fill="#acacac"/>
<rect x="437" y="297" width="1" height="3" fill="#acacac"/>
<rect x="437" y="303" width="1" height="3" fill="#acacac"/>
<rect x="437" y="309" width="1" height="3" fill="#acacac"/>
<rect x="437" y="315" width="1" height="3" fill="#acacac"/>
<rect x="437" y="321" width="1" height="3" fill="#acacac"/>
<rect x="447" y="255" width="1" height="3" fill="#acacac"/>
<rect x="447" y="261" width="1" height="3" fill="#acacac"/>
<rect x="447" y="267" width="1" height="3" fill="#acacac"/>
<rect x="447" y="273" width="1" height="3" fill="#acacac"/>
<rect x="447" y="279" width="1" height="3" fill="#acacac"/>
<rect x="447" y="285" width="1" height="3" fill="#acacac"/>
<rect x="447" y="291" width="1" height="3" fill="#acacac"/>
<rect x="447" y="297" width="1" height="3" fill="#acacac"/>
<rect x="447" y="303" width="1" height="3" fill="#acacac"/>
<rect x="447" y="309" width="1" height="3" fill="#acacac"/>
<rect x="447" y="315" width="1" height="3" fill="#acacac"/>
<rect x="447" y="321" width="1" height="3" fill="#acacac"/>
<rect x="453" y="257" width="1" height="1" fill="#acacac"/>
<rect x="453" y="261" width="1" height="3" fill="#acacac"/>
<rect x="453" y="267" width="1" height="3" fill="#acacac"/>
<rect x="453" y="273" width="1" height="3" fill="#acacac"/>
<rect x="453" y="279" width="1" height="3" fill="#acacac"/>
<rect x="453" y="285" width="1" height="3" fill="#acacac"/>
<rect x="453" y="291" width="1" height="3" fill="#acacac"/>
<rect x="453" y="297" width="1" height="3" fill="#acacac"/>
<rect x="453" y="303" width="1" height="3" fill="#acacac"/>
<rect x="453" y="309" width="1" height="3" fill="#acacac"/>
<rect x="453" y="315" width="1" height="3" fill="#acacac"/>
<rect x="453" y="321" width="1" height="3" fill="#acacac"/>
<rect x="459" y="250" width="1" height="2" fill="#acacac"/>
<rect x="459" y="255" width="1" height="3" fill="#acacac"/>
<rect x="459" y="261" width="1" height="3" fill="#acacac"/>
<rect x="459" y="267" width="1" height="3" fill="#acacac"/>
<rect x="459" y="273" width="1" height="3" fill="#acacac"/>
<rect x="459" y="279" width="1" height="3" fill="#acacac"/>
<rect x="459" y="285" width="1" height="3" fill="#acacac"/>
<rect x="459" y="291" width="1" height="3" fill="#acacac"/>
<rect x="459" y="297" width="1" height="3" fill="#acacac"/>
<rect x="459" y="303" width="1" height="3" fill="#acacac"/>
<rect x="459" y="309" width="1" height="3" fill="#acacac"/>
<rect x="459" y="315" width="1" height="3" fill="#acacac"/>
<rect x="459" y="321" width="1" height="3" fill="#acacac"/>
<rect x="468" y="243" width="1" height="3" fill="#acacac"/>
<rect x="468" y="249" width="1" height="3" fill="#acacac"/>
<rect x="468" y="255" width="1" height="3" fill="#acacac"/>
<rect x="468" y="261" width="1" height="3" fill="#acacac"/>
<rect x="468" y="267" width="1" height="3" fill="#acacac"/>
<rect x="468" y="273" width="1" height="3" fill="#acacac"/>
<rect x="468" y="279" width="1" height="3" fill="#acacac"/>
<rect x="468" y="285" width="1" height="3" fill="#acacac"/>
<rect x="468" y="291" width="1" height="3" fill="#acacac"/>
<rect x="468" y="297" width="1" height="3" fill="#acacac"/>
<rect x="468" y="303" width="1" height="3" fill="#acacac"/>
<rect x="468" y="309" width="1" height="3" fill="#acacac"/>
<rect x="468" y="315" width="1" height="3" fill="#acacac"/>
<rect x="468" y="321" width="1" height="3" fill="#acacac"/>
<rect x="475" y="239" width="1" height="1" fill="#acacac"/>
<rect x="475" y="243" width="1" height="3" fill="#acacac"/>
<rect x="475" y="249" width="1" height="3" fill="#acacac"/>
<rect x="475" y="255" width="1" height="3" fill="#acacac"/>
<rect x="475" y="261" width="1" height="3" fill="#acacac"/>
<rect x="475" y="267" width="1" height="3" fill="#acacac"/>
<rect x="475" y="273" width="1" height="3" fill="#acacac"/>
<rect x="475" y="279" width="1" height="3" fill="#acacac"/>
<rect x="475" y="285" width="1" height="3" fill="#acacac"/>
<rect x="475" y="291" width="1" height="3" fill="#acacac"/>
<rect x="475" y="297" width="1" height="3" fill="#acacac"/>
<rect x="475" y="303" width="1" height="3" fill="#acacac"/>
<rect x="475" y="309" width="1" height="3" fill="#acacac"/>
<rect x="475" y="315" width="1" height="3" fill="#acacac"/>
<rect x="475" y="321" width="1" height="3" fill="#acacac"/>
<rect x="478" y="238" width="1" height="2" fill="#acacac"/>
<rect x="478" y="243" width="1" height="3" fill="#acacac"/>
<rect x="478" y="249" width="1" height="3" fill="#acacac"/>
<rect x="478" y="255" width="1" height="3" fill="#acacac"/>
<rect x="478" y="261" width="1" height="3" fill="#acacac"/>
<rect x="478" y="267" width="1" height="3" fill="#acacac"/>
<rect x="478" y="273" width="1" height="3" fill="#acacac"/>
<rect x="478" y="279" width="1" height="3" fill="#acacac"/>
<rect x="478" y="285" width="1" height="3" fill="#acacac"/>
<rect x="478" y="291" width="1" height="3" fill="#acacac"/>
<rect x="478" y="297" width="1" height="3" fill="#acacac"/>
<rect x="478" y="303" width="1" height="3" fill="#acacac"/>
<rect x="478" y="309" width="1" height="3" fill="#acacac"/>
<rect x="478" y="315" width="1" height="3" fill="#acacac"/>
<rect x="478" y="321" width="1" height="3" fill="#acacac"/>
<rect x="489" y="251" width="1" height="1" fill="#acacac"/>
<rect x="489" y="255" width="1" height="3" fill="#acacac"/>
<rect x="489" y="261" width="1" height="3" fill="#acacac"/>
<rect x="489" y="267" width="1" height="3" fill="#acacac"/>
<rect x="489" y="273" width="1" height="3" fill="#acacac"/>
<rect x="489" y="279" width="1" height="3" fill="#acacac"/>
<rect x="489" y="285" width="1" height="3" fill="#acacac"/>
<rect x="489" y="291" width="1" height="3" fill="#acacac"/>
<rect x="489" y="297" width="1" height="3" fill="#acacac"/>
<rect x="489" y="303" width="1" height="3" fill="#acacac"/>
<rect x="489" y="309" width="1" height="3" fill="#acacac"/>
<rect x="489" y="315" width="1" height="3" fill="#acacac"/>
<rect x="489" y="321" width="1" height="3" fill="#acacac"/>
<rect x="495" y="255" width="1" height="3" fill="#acacac"/>
<rect x="495" y="261" width="1" height="3" fill="#acacac"/>
<rect x="495" y="267" width="1" height="3" fill="#acacac"/>
<rect x="495" y="273" width="1" height="3" fill="#acacac"/>
<rect x="495" y="279" width="1" height="3" fill="#acacac"/>
<rect x="495" y="285" width="1" height="3" fill="#acacac"/>
<rect x="495" y="291" width="1" height="3" fill="#acacac"/>
<rect x="495" y="297" width="1" height="3" fill="#acacac"/>
<rect x="495" y="303" width="1" height="3" fill="#acacac"/>
<rect x="495" y="309" width="1" height="3" fill="#acacac"/>
<rect x="495" y="315" width="1" height="3" fill="#acacac"/>
<rect x="495" y="321" width="1" height="3" fill="#acacac"/>
<rect x="499" y="255" width="1" height="3" fill="#acacac"/>
<rect x="499" y="261" width="1" height="3" fill="#acacac"/>
<rect x="499" y="267" width="1" height="3" fill="#acacac"/>
<rect x="499" y="273" width="1" height="3" fill="#acacac"/>
<rect x="499" y="279" width="1" height="3" fill="#acacac"/>
<rect x="499" y="285" width="1" height="3" fill="#acacac"/>
<rect x="499" y="291" width="1" height="3" fill="#acacac"/>
<rect x="499" y="297" width="1" height="3" fill="#acacac"/>
<rect x="499" y="303" width="1" height="3" fill="#acacac"/>
<rect x="499" y="309" width="1" height="3" fill="#acacac"/>
<rect x="499" y="315" width="1" height="3" fill="#acacac"/>
<rect x="499" y="321" width="1" height="3" fill="#acacac"/>
<rect x="510" y="249" width="1" height="3" fill="#acacac"/>
<rect x="510" y="255" width="1" height="3" fill="#acacac"/>
<rect x="510" y="261" width="1" height="3" fill="#acacac"/>
<rect x="510" y="267" width="1" height="3" fill="#acacac"/>
<rect x="510" y="273" width="1" height="3" fill="#acacac"/>
<rect x="510" y="279" width="1" height="3" fill="#acacac"/>
<rect x="510" y="285" width="1" height="3" fill="#acacac"/>
<rect x="510" y="291" width="1" height="3" fill="#acacac"/>
<rect x="510" y="297" width="1" height="3" fill="#acacac"/>
<rect x="510" y="303" width="1" height="3" fill="#acacac"/>
<rect x="510" y="309" width="1" height="3" fill="#acacac"/>
<rect x="510" y="315" width="1" height="3" fill="#acacac"/>
<rect x="510" y="321" width="1" height="3" fill="#acacac"/>
<rect x="516" y="245" width="1" height="1" fill="#acacac"/>
<rect x="516" y="249" width="1" height="3" fill="#acacac"/>
<rect x="516" y="255" width="1" height="3" fill="#acacac"/>
<rect x="516" y="261" width="1" height="3" fill="#acacac"/>
<rect x="516" y="267" width="1" height="3" fill="#acacac"/>
<rect x="516" y="273" width="1" height="3" fill="#acacac"/>
<rect x="516" y="279" width="1" height="3" fill="#acacac"/>
<rect x="516" y="285" width="1" height="3" fill="#acacac"/>
<rect x="516" y="291" width="1" height="3" fill="#acacac"/>
<rect x="516" y="297" width="1" height="3" fill="#acacac"/>
<rect x="516" y="303" width="1" height="3" fill="#acacac"/>
<rect x="516" y="309" width="1" height="3" fill="#acacac"/>
<rect x="516" y="315" width="1" height="3" fill="#acacac"/>
<rect x="516" y="321" width="1" height="3" fill="#acacac"/>
<rect x="520" y="250" width="1" height="2" fill="#acacac"/>
<rect x="520" y="255" width="1" height="3" fill="#acacac"/>
<rect x="520" y="261" width="1" height="3" fill="#acacac"/>
<rect x="520" y="267" width="1" height="3" fill="#acacac"/>
<rect x="520" y="273" width="1" height="3" fill="#acacac"/>
<rect x="520" y="279" width="1" height="3" fill="#acacac"/>
<rect x="520" y="285" width="1" height="3" fill="#acacac"/>
<rect x="520" y="291" width="1" height="3" fill="#acacac"/>
<rect x="520" y="297" width="1" height="3" fill="#acacac"/>
<rect x="520" y="303" width="1" height="3" fill="#acacac"/>
<rect x="520" y="309" width="1" height="3" fill="#acacac"/>
<rect x="520" y="315" width="1" height="3" fill="#acacac"/>
<rect x="520" y="321" width="1" height="3" fill="#acacac"/>
<rect x="529" y="251" width="1" height="1" fill="#acacac"/>
<rect x="529" y="255" width="1" height="3" fill="#acacac"/>
<rect x="529" y="261" width="1" height="3" fill="#acacac"/>
<rect x="529" y="267" width="1" height="3" fill="#acacac"/>
<rect x="529" y="273" width="1" height="3" fill="#acacac"/>
<rect x="529" y="279" width="1" height="3" fill="#acacac"/>
<rect x="529" y="285" width="1" height="3" fill="#acacac"/>
<rect x="529" y="291" width="1" height="3" fill="#acacac"/>
<rect x="529" y="297" width="1" height="3" fill="#acacac"/>
<rect x="529" y="303" width="1" height="3" fill="#acacac"/>
<rect x="529" y="309" width="1" height="3" fill="#acacac"/>
<rect x="529" y="315" width="1" height="3" fill="#acacac"/>
<rect x="529" y="321" width="1" height="3" fill="#acacac"/>
<rect x="534" y="255" width="1" height="3" fill="#acacac"/>
<rect x="534" y="261" width="1" height="3" fill="#acacac"/>
<rect x="534" y="267" width="1" height="3" fill="#acacac"/>
<rect x="534" y="273" width="1" height="3" fill="#acacac"/>
<rect x="534" y="279" width="1" height="3" fill="#acacac"/>
<rect x="534" y="285" width="1" height="3" fill="#acacac"/>
<rect x="534" y="291" width="1" height="3" fill="#acacac"/>
<rect x="534" y="297" width="1" height="3" fill="#acacac"/>
<rect x="534" y="303" width="1" height="3" fill="#acacac"/>
<rect x="534" y="309" width="1" height="3" fill="#acacac"/>
<rect x="534" y="315" width="1" height="3" fill="#acacac"/>
<rect x="534" y="321" width="1" height="3" fill="#acacac"/>
<rect x="538" y="243" width="1" height="3" fill="#acacac"/>
<rect x="538" y="249" width="1" height="3" fill="#acacac"/>
<rect x="538" y="255" width="1" height="3" fill="#acacac"/>
<rect x="538" y="261" width="1" height="3" fill="#acacac"/>
<rect x="538" y="267" width="1" height="3" fill="#acacac"/>
<rect x="538" y="273" width="1" height="3" fill="#acacac"/>
<rect x="538" y="279" width="1" height="3" fill="#acacac"/>
<rect x="538" y="285" width="1" height="3" fill="#acacac"/>
<rect x="538" y="291" width="1" height="3" fill="#acacac"/>
<rect x="538" y="297" width="1" height="3" fill="#acacac"/>
<rect x="538" y="303" width="1" height="3" fill="#acacac"/>
<rect x="538" y="309" width="1" height="3" fill="#acacac"/>
<rect x="538" y="315" width="1" height="3" fill="#acacac"/>
<rect x="538" y="321" width="1" height="3" fill="#acacac"/>
<rect x="550" y="249" width="1" height="3" fill="#acacac"/>
<rect x="550" y="255" width="1" height="3" fill="#acacac"/>
<rect x="550" y="261" width="1" height="3" fill="#acacac"/>
<rect x="550" y="267" width="1" height="3" fill="#acacac"/>
<rect x="550" y="273" width="1" height="3" fill="#acacac"/>
<rect x="550" y="279" width="1" height="3" fill="#acacac"/>
<rect x="550" y="285" width="1" height="3" fill="#acacac"/>
<rect x="550" y="291" width="1" height="3" fill="#acacac"/>
<rect x="550" y="297" width="1" height="3" fill="#acacac"/>
<rect x="550" y="303" width="1" height="3" fill="#acacac"/>
<rect x="550" y="309" width="1" height="3" fill="#acacac"/>
<rect x="550" y="315" width="1" height="3" fill="#acacac"/>
<rect x="550" y="321" width="1" height="3" fill="#acacac"/>
<rect x="553" y="243" width="1" height="3" fill="#acacac"/>
<rect x="553" y="249" width="1" height="3" fill="#acacac"/>
<rect x="553" y="255" width="1" height="3" fill="#acacac"/>
<rect x="553" y="261" width="1" height="3" fill="#acacac"/>
<rect x="553" y="267" width="1" height="3" fill="#acacac"/>
<rect x="553" y="273" width="1" height="3" fill="#acacac"/>
<rect x="553" y="279" width="1" height="3" fill="#acacac"/>
<rect x="553" y="285" width="1" height="3" fill="#acacac"/>
<rect x="553" y="291" width="1" height="3" fill="#acacac"/>
<rect x="553" y="297" width="1" height="3" fill="#acacac"/>
<rect x="553" y="303" width="1" height="3" fill="#acacac"/>
<rect x="553" y="309" width="1" height="3" fill="#acacac"/>
<rect x="553" y="315" width="1" height="3" fill="#acacac"/>
<rect x="553" y="321" width="1" height="3" fill="#acacac"/>
<rect x="559" y="249" width="1" height="3" fill="#acacac"/>
<rect x="559" y="255" width="1" height="3" fill="#acacac"/>
<rect x="559" y="261" width="1" height="3" fill="#acacac"/>
<rect x="559" y="267" width="1" height="3" fill="#acacac"/>
<rect x="559" y="273" width="1" height="3" fill="#acacac"/>
<rect x="559" y="279" width="1" height="3" fill="#acacac"/>
<rect x="559" y="285" width="1" height="3" fill="#acacac"/>
<rect x="559" y="291" width="1" height="3" fill="#acacac"/>
<rect x="559" y="297" width="1" height="3" fill="#acacac"/>
<rect x="559" y="303" width="1" height="3" fill="#acacac"/>
<rect x="559" y="309" width="1" height="3" fill="#acacac"/>
<rect x="559" y="315" width="1" height="3" fill="#acacac"/>
<rect x="559" y="321" width="1" height="3" fill="#acacac"/>
<rect x="569" y="249" width="1" height="3" fill="#acacac"/>
<rect x="569" y="255" width="1" height="3" fill="#acacac"/>
<rect x="569" y="261" width="1" height="3" fill="#acacac"/>
<rect x="569" y="267" width="1" height="3" fill="#acacac"/>
<rect x="569" y="273" width="1" height="3" fill="#acacac"/>
<rect x="569" y="279" width="1" height="3" fill="#acacac"/>
<rect x="569" y="285" width="1" height="3" fill="#acacac"/>
<rect x="569" y="291" width="1" height="3" fill="#acacac"/>
<rect x="569" y="297" width="1" height="3" fill="#acacac"/>
<rect x="569" y="303" width="1" height="3" fill="#acacac"/>
<rect x="569" y="309" width="1" height="3" fill="#acacac"/>
<rect x="569" y="315" width="1" height="3" fill="#acacac"/>
<rect x="569" y="321" width="1" height="3" fill="#acacac"/>
<rect x="575" y="249" width="1" height="3" fill="#acacac"/>
<rect x="575" y="255" width="1" height="3" fill="#acacac"/>
<rect x="575" y="261" width="1" height="3" fill="#acacac"/>
<rect x="575" y="267" width="1" height="3" fill="#acacac"/>
<rect x="575" y="273" width="1" height="3" fill="#acacac"/>
<rect x="575" y="279" width="1" height="3" fill="#acacac"/>
<rect x="575" y="285" width="1" height="3" fill="#acacac"/>
<rect x="575" y="291" width="1" height="3" fill="#acacac"/>
<rect x="575" y="297" width="1" height="3" fill="#acacac"/>
<rect x="575" y="303" width="1" height="3" fill="#acacac"/>
<rect x="575" y="309" width="1" height="3" fill="#acacac"/>
<rect x="575" y="315" width="1" height="3" fill="#acacac"/>
<rect x="575" y="321" width="1" height="3" fill="#acacac"/>
<rect x="580" y="243" width="1" height="3" fill="#acacac"/>
<rect x="580" y="249" width="1" height="3" fill="#acacac"/>
<rect x="580" y="255" width="1" height="3" fill="#acacac"/>
<rect x="580" y="261" width="1" height="3" fill="#acacac"/>
<rect x="580" y="267" width="1" height="3" fill="#acacac"/>
<rect x="580" y="273" width="1" height="3" fill="#acacac"/>
<rect x="580" y="279" width="1" height="3" fill="#acacac"/>
<rect x="580" y="285" width="1" height="3" fill="#acacac"/>
<rect x="580" y="291" width="1" height="3" fill="#acacac"/>
<rect x="580" y="297" width="1" height="3" fill="#acacac"/>
<rect x="580" y="303" width="1" height="3" fill="#acacac"/>
<rect x="580" y="309" width="1" height="3" fill="#acacac"/>
<rect x="580" y="315" width="1" height="3" fill="#acacac"/>
<rect x="580" y="321" width="1" height="3" fill="#acacac"/>
<rect x="589" y="243" width="1" height="3" fill="#acacac"/>
<rect x="589" y="249" width="1" height="3" fill="#acacac"/>
<rect x="589" y="255" width="1" height="3" fill="#acacac"/>
<rect x="589" y="261" width="1" height="3" fill="#acacac"/>
<rect x="589" y="267" width="1" height="3" fill="#acacac"/>
<rect x="589" y="273" width="1" height="3" fill="#acacac"/>
<rect x="589" y="279" width="1" height="3" fill="#acacac"/>
<rect x="589" y="285" width="1" height="3" fill="#acacac"/>
<rect x="589" y="291" width="1" height="3" fill="#acacac"/>
<rect x="589" y="297" width="1" height="3" fill="#acacac"/>
<rect x="589" y="303" width="1" height="3" fill="#acacac"/>
<rect x="589" y="309" width="1" height="3" fill="#acacac"/>
<rect x="589" y="315" width="1" height="3" fill="#acacac"/>
<rect x="589" y="321" width="1" height="3" fill="#acacac"/>
<rect x="595" y="243" width="1" height="3" fill="#acacac"/>
<rect x="595" y="249" width="1" height="3" fill="#acacac"/>
<rect x="595" y="255" width="1" height="3" fill="#acacac"/>
<rect x="595" y="261" width="1" height="3" fill="#acacac"/>
<rect x="595" y="267" width="1" height="3" fill="#acacac"/>
<rect x="595" y="273" width="1" height="3" fill="#acacac"/>
<rect x="595" y="279" width="1" height="3" fill="#acacac"/>
<rect x="595" y="285" width="1" height="3" fill="#acacac"/>
<rect x="595" y="291" width="1" height="3" fill="#acacac"/>
<rect x="595" y="297" width="1" height="3" fill="#acacac"/>
<rect x="595" y="303" width="1" height="3" fill="#acacac"/>
<rect x="595" y="309" width="1" height="3" fill="#acacac"/>
<rect x="595" y="315" width="1" height="3" fill="#acacac"/>
<rect x="595" y="321" width="1" height="3" fill="#acacac"/>
<rect x="599" y="237" width="1" height="3" fill="#acacac"/>
<rect x="599" y="243" width="1" height="3" fill="#acacac"/>
<rect x="599" y="249" width="1" height="3" fill="#acacac"/>
<rect x="599" y="255" width="1" height="3" fill="#acacac"/>
<rect x="599" y="261" width="1" height="3" fill="#acacac"/>
<rect x="599" y="267" width="1" height="3" fill="#acacac"/>
<rect x="599" y="273" width="1" height="3" fill="#acacac"/>
<rect x="599" y="279" width="1" height="3" fill="#acacac"/>
<rect x="599" y="285" width="1" height="3" fill="#acacac"/>
<rect x="599" y="291" width="1" height="3" fill="#acacac"/>
<rect x="599" y="297" width="1" height="3" fill="#acacac"/>
<rect x="599" y="303" width="1" height="3" fill="#acacac"/>
<rect x="599" y="309" width="1" height="3" fill="#acacac"/>
<rect x="599" y="315" width="1" height="3" fill="#acacac"/>
<rect x="599" y="321" width="1" height="3" fill="#acacac"/>
<rect x="609" y="238" width="1" height="2" fill="#acacac"/>
<rect x="609" y="243" width="1" height="3" fill="#acacac"/>
<rect x="609" y="249" width="1" height="3" fill="#acacac"/>
<rect x="609" y="255" width="1" height="3" fill="#acacac"/>
<rect x="609" y="261" width="1" height="3" fill="#acacac"/>
<rect x="609" y="267" width="1" height="3" fill="#acacac"/>
<rect x="609" y="273" width="1" height="3" fill="#acacac"/>
<rect x="609" y="279" width="1" height="3" fill="#acacac"/>
<rect x="609" y="285" width="1" height="3" fill="#acacac"/>
<rect x="609" y="291" width="1" height="3" fill="#acacac"/>
<rect x="609" y="297" width="1" height="3" fill="#acacac"/>
<rect x="609" y="303" width="1" height="3" fill="#acacac"/>
<rect x="609" y="309" width="1" height="3" fill="#acacac"/>
<rect x="609" y="315" width="1" height="3" fill="#acacac"/>
<rect x="609" y="321" width="1" height="3" fill="#acacac"/>
<rect x="613" y="239" width="1" height="1" fill="#acacac"/>
<rect x="613" y="243" width="1" height="3" fill="#acacac"/>
<rect x="613" y="249" width="1" height="3" fill="#acacac"/>
<rect x="613" y="255" width="1" height="3" fill="#acacac"/>
<rect x="613" y="261" width="1" height="3" fill="#acacac"/>
<rect x="613" y="267" width="1" height="3" fill="#acacac"/>
<rect x="613" y="273" width="1" height="3" fill="#acacac"/>
<rect x="613" y="279" width="1" height="3" fill="#acacac"/>
<rect x="613" y="285" width="1" height="3" fill="#acacac"/>
<rect x="613" y="291" width="1" height="3" fill="#acacac"/>
<rect x="613" y="297" width="1" height="3" fill="#acacac"/>
<rect x="613" y="303" width="1" height="3" fill="#acacac"/>
<rect x="613" y="309" width="1" height="3" fill="#acacac"/>
<rect x="613" y="315" width="1" height="3" fill="#acacac"/>
<rect x="613" y="321" width="1" height="3" fill="#acacac"/>
<rect x="620" y="237" width="1" height="3" fill="#acacac"/>
<rect x="620" y="243" width="1" height="3" fill="#acacac"/>
<rect x="620" y="249" width="1" height="3" fill="#acacac"/>
<rect x="620" y="255" width="1" height="3" fill="#acacac"/>
<rect x="620" y="261" width="1" height="3" fill="#acacac"/>
<rect x="620" y="267" width="1" height="3" fill="#acacac"/>
<rect x="620" y="273" width="1" height="3" fill="#acacac"/>
<rect x="620" y="279" width="1" height="3" fill="#acacac"/>
<rect x="620" y="285" width="1" height="3" fill="#acacac"/>
<rect x="620" y="291" width="1" height="3" fill="#acacac"/>
<rect x="620" y="297" width="1" height="3" fill="#acacac"/>
<rect x="620" y="303" width="1" height="3" fill="#acacac"/>
<rect x="620" y="309" width="1" height="3" fill="#acacac"/>
<rect x="620" y="315" width="1" height="3" fill="#acacac"/>
<rect x="620" y="321" width="1" height="3" fill="#acacac"/>
<rect x="629" y="237" width="1" height="3" fill="#acacac"/>
<rect x="629" y="243" width="1" height="3" fill="#acacac"/>
<rect x="629" y="249" width="1" height="3" fill="#acacac"/>
<rect x="629" y="255" width="1" height="3" fill="#acacac"/>
<rect x="629" y="261" width="1" height="3" fill="#acacac"/>
<rect x="629" y="267" width="1" height="3" fill="#acacac"/>
<rect x="629" y="273" width="1" height="3" fill="#acacac"/>
<rect x="629" y="279" width="1" height="3" fill="#acacac"/>
<rect x="629" y="285" width="1" height="3" fill="#acacac"/>
<rect x="629" y="291" width="1" height="3" fill="#acacac"/>
<rect x="629" y="297" width="1" height="3" fill="#acacac"/>
<rect x="629" y="303" width="1" height="3" fill="#acacac"/>
<rect x="629" y="309" width="1" height="3" fill="#acacac"/>
<rect x="629" y="315" width="1" height="3" fill="#acacac"/>
<rect x="629" y="321" width="1" height="3" fill="#acacac"/>
<rect x="633" y="231" width="1" height="3" fill="#acacac"/>
<rect x="633" y="237" width="1" height="3" fill="#acacac"/>
<rect x="633" y="243" width="1" height="3" fill="#acacac"/>
<rect x="633" y="249" width="1" height="3" fill="#acacac"/>
<rect x="633" y="255" width="1" height="3" fill="#acacac"/>
<rect x="633" y="261" width="1" height="3" fill="#acacac"/>
<rect x="633" y="267" width="1" height="3" fill="#acacac"/>
<rect x="633" y="273" width="1" height="3" fill="#acacac"/>
<rect x="633" y="279" width="1" height="3" fill="#acacac"/>
<rect x="633" y="285" width="1" height="3" fill="#acacac"/>
<rect x="633" y="291" width="1" height="3" fill="#acacac"/>
<rect x="633" y="297" width="1" height="3" fill="#acacac"/>
<rect x="633" y="303" width="1" height="3" fill="#acacac"/>
<rect x="633" y="309" width="1" height="3" fill="#acacac"/>
<rect x="633" y="315" width="1" height="3" fill="#acacac"/>
<rect x="633" y="321" width="1" height="3" fill="#acacac"/>
<rect x="638" y="231" width="1" height="3" fill="#acacac"/>
<rect x="638" y="237" width="1" height="3" fill="#acacac"/>
<rect x="638" y="243" width="1" height="3" fill="#acacac"/>
<rect x="638" y="249" width="1" height="3" fill="#acacac"/>
<rect x="638" y="255" width="1" height="3" fill="#acacac"/>
<rect x="638" y="261" width="1" height="3" fill="#acacac"/>
<rect x="638" y="267" width="1" height="3" fill="#acacac"/>
<rect x="638" y="273" width="1" height="3" fill="#acacac"/>
<rect x="638" y="279" width="1" height="3" fill="#acacac"/>
<rect x="638" y="285" width="1" height="3" fill="#acacac"/>
<rect x="638" y="291" width="1" height="3" fill="#acacac"/>
<rect x="638" y="297" width="1" height="3" fill="#acacac"/>
<rect x="638" y="303" width="1" height="3" fill="#acacac"/>
<rect x="638" y="309" width="1" height="3" fill="#acacac"/>
<rect x="638" y="315" width="1" height="3" fill="#acacac"/>
<rect x="638" y="321" width="1" height="3" fill="#acacac"/>
<rect x="649" y="231" width="1" height="3" fill="#acacac"/>
<rect x="649" y="237" width="1" height="3" fill="#acacac"/>
<rect x="649" y="243" width="1" height="3" fill="#acacac"/>
<rect x="649" y="249" width="1" height="3" fill="#acacac"/>
<rect x="649" y="255" width="1" height="3" fill="#acacac"/>
<rect x="649" y="261" width="1" height="3" fill="#acacac"/>
<rect x="649" y="267" width="1" height="3" fill="#acacac"/>
<rect x="649" y="273" width="1" height="3" fill="#acacac"/>
<rect x="649" y="279" width="1" height="3" fill="#acacac"/>
<rect x="649" y="285" width="1" height="3" fill="#acacac"/>
<rect x="649" y="291" width="1" height="3" fill="#acacac"/>
<rect x="649" y="297" width="1" height="3" fill="#acacac"/>
<rect x="649" y="303" width="1" height="3" fill="#acacac"/>
<rect x="649" y="309" width="1" height="3" fill="#acacac"/>
<rect x="649" y="315" width="1" height="3" fill="#acacac"/>
<rect x="649" y="321" width="1" height="3" fill="#acacac"/>
<rect x="658" y="237" width="1" height="3" fill="#acacac"/>
<rect x="658" y="243" width="1" height="3" fill="#acacac"/>
<rect x="658" y="249" width="1" height="3" fill="#acacac"/>
<rect x="658" y="255" width="1" height="3" fill="#acacac"/>
<rect x="658" y="261" width="1" height="3" fill="#acacac"/>
<rect x="658" y="267" width="1" height="3" fill="#acacac"/>
<rect x="658" y="273" width="1" height="3" fill="#acacac"/>
<rect x="658" y="279" width="1" height="3" fill="#acacac"/>
<rect x="658" y="285" width="1" height="3" fill="#acacac"/>
<rect x="658" y="291" width="1" height="3" fill="#acacac"/>
<rect x="658" y="297" width="1" height="3" fill="#acacac"/>
<rect x="658" y="303" width="1" height="3" fill="#acacac"/>
<rect x="658" y="309" width="1" height="3" fill="#acacac"/>
<rect x="658" y="315" width="1" height="3" fill="#acacac"/>
<rect x="658" y="321" width="1" height="3" fill="#acacac"/>
<rect x="669" y="243" width="1" height="3" fill="#acacac"/>
<rect x="669" y="249" width="1" height="3" fill="#acacac"/>
<rect x="669" y="255" width="1" height="3" fill="#acacac"/>
<rect x="669" y="261" width="1" height="3" fill="#acacac"/>
<rect x="669" y="267" width="1" height="3" fill="#acacac"/>
<rect x="669" y="273" width="1" height="3" fill="#acacac"/>
<rect x="669" y="279" width="1" height="3" fill="#acacac"/>
<rect x="669" y="285" width="1" height="3" fill="#acacac"/>
<rect x="669" y="291" width="1" height="3" fill="#acacac"/>
<rect x="669" y="297" width="1" height="3" fill="#acacac"/>
<rect x="669" y="303" width="1" height="3" fill="#acacac"/>
<rect x="669" y="309" width="1" height="3" fill="#acacac"/>
<rect x="669" y="315" width="1" height="3" fill="#acacac"/>
<rect x="669" y="321" width="1" height="3" fill="#acacac"/>
<rect x="674" y="243" width="1" height="3" fill="#acacac"/>
<rect x="674" y="249" width="1" height="3" fill="#acacac"/>
<rect x="674" y="255" width="1" height="3" fill="#acacac"/>
<rect x="674" y="261" width="1" height="3" fill="#acacac"/>
<rect x="674" y="267" width="1" height="3" fill="#acacac"/>
<rect x="674" y="273" width="1" height="3" fill="#acacac"/>
<rect x="674" y="279" width="1" height="3" fill="#acacac"/>
<rect x="674" y="285" width="1" height="3" fill="#acacac"/>
<rect x="674" y="291" width="1" height="3" fill="#acacac"/>
<rect x="674" y="297" width="1" height="3" fill="#acacac"/>
<rect x="674" y="303" width="1" height="3" fill="#acacac"/>
<rect x="674" y="309" width="1" height="3" fill="#acacac"/>
<rect x="674" y="315" width="1" height="3" fill="#acacac"/>
<rect x="674" y="321" width="1" height="3" fill="#acacac"/>
<rect x="678" y="239" width="1" height="1" fill="#acacac"/>
<rect x="678" y="243" width="1" height="3" fill="#acacac"/>
<rect x="678" y="249" width="1" height="3" fill="#acacac"/>
<rect x="678" y="255" width="1" height="3" fill="#acacac"/>
<rect x="678" y="261" width="1" height="3" fill="#acacac"/>
<rect x="678" y="267" width="1" height="3" fill="#acacac"/>
<rect x="678" y="273" width="1" height="3" fill="#acacac"/>
<rect x="678" y="279" width="1" height="3" fill="#acacac"/>
<rect x="678" y="285" width="1" height="3" fill="#acacac"/>
<rect x="678" y="291" width="1" height="3" fill="#acacac"/>
<rect x="678" y="297" width="1" height="3" fill="#acacac"/>
<rect x="678" y="303" width="1" height="3" fill="#acacac"/>
<rect x="678" y="309" width="1" height="3" fill="#acacac"/>
<rect x="678" y="315" width="1" height="3" fill="#acacac"/>
<rect x="678" y="321" width="1" height="3" fill="#acacac"/>
<rect x="688" y="239" width="1" height="1" fill="#acacac"/>
<rect x="688" y="243" width="1" height="3" fill="#acacac"/>
<rect x="688" y="249" width="1" height="3" fill="#acacac"/>
<rect x="688" y="255" width="1" height="3" fill="#acacac"/>
<rect x="688" y="261" width="1" height="3" fill="#acacac"/>
<rect x="688" y="267" width="1" height="3" fill="#acacac"/>
<rect x="688" y="273" width="1" height="3" fill="#acacac"/>
<rect x="688" y="279" width="1" height="3" fill="#acacac"/>
<rect x="688" y="285" width="1" height="3" fill="#acacac"/>
<rect x="688" y="291" width="1" height="3" fill="#acacac"/>
<rect x="688" y="297" width="1" height="3" fill="#acacac"/>
<rect x="688" y="303" width="1" height="3" fill="#acacac"/>
<rect x="688" y="309" width="1" height="3" fill="#acacac"/>
<rect x="688" y="315" width="1" height="3" fill="#acacac"/>
<rect x="688" y="321" width="1" height="3" fill="#acacac"/>
<rect x="690" y="243" width="1" height="3" fill="#acacac"/>
<rect x="690" y="249" width="1" height="3" fill="#acacac"/>
<rect x="690" y="255" width="1" height="3" fill="#acacac"/>
<rect x="690" y="261" width="1" height="3" fill="#acacac"/>
<rect x="690" y="267" width="1" height="3" fill="#acacac"/>
<rect x="690" y="273" width="1" height="3" fill="#acacac"/>
<rect x="690" y="279" width="1" height="3" fill="#acacac"/>
<rect x="690" y="285" width="1" height="3" fill="#acacac"/>
<rect x="690" y="291" width="1" height="3" fill="#acacac"/>
<rect x="690" y="297" width="1" height="3" fill="#acacac"/>
<rect x="690" y="303" width="1" height="3" fill="#acacac"/>
<rect x="690" y="309" width="1" height="3" fill="#acacac"/>
<rect x="690" y="315" width="1" height="3" fill="#acacac"/>
<rect x="690" y="321" width="1" height="3" fill="#acacac"/>
<rect x="698" y="243" width="1" height="3" fill="#acacac"/>
<rect x="698" y="249" width="1" height="3" fill="#acacac"/>
<rect x="698" y="255" width="1" height="3" fill="#acacac"/>
<rect x="698" y="261" width="1" height="3" fill="#acacac"/>
<rect x="698" y="267" width="1" height="3" fill="#acacac"/>
<rect x="698" y="273" width="1" height="3" fill="#acacac"/>
<rect x="698" y="279" width="1" height="3" fill="#acacac"/>
<rect x="698" y="285" width="1" height="3" fill="#acacac"/>
<rect x="698" y="291" width="1" height="3" fill="#acacac"/>
<rect x="698" y="297" width="1" height="3" fill="#acacac"/>
<rect x="698" y="303" width="1" height="3" fill="#acacac"/>
<rect x="698" y="309" width="1" height="3" fill="#acacac"/>
<rect x="698" y="315" width="1" height="3" fill="#acacac"/>
<rect x="698" y="321" width="1" height="3" fill="#acacac"/>
<rect x="708" y="237" width="1" height="3" fill="#acacac"/>
<rect x="708" y="243" width="1" height="3" fill="#acacac"/>
<rect x="708" y="249" width="1" height="3" fill="#acacac"/>
<rect x="708" y="255" width="1" height="3" fill="#acacac"/>
<rect x="708" y="261" width="1" height="3" fill="#acacac"/>
<rect x="708" y="267" width="1" height="3" fill="#acacac"/>
<rect x="708" y="273" width="1" height="3" fill="#acacac"/>
<rect x="708" y="279" width="1" height="3" fill="#acacac"/>
<rect x="708" y="285" width="1" height="3" fill="#acacac"/>
<rect x="708" y="291" width="1" height="3" fill="#acacac"/>
<rect x="708" y="297" width="1" height="3" fill="#acacac"/>
<rect x="708" y="303" width="1" height="3" fill="#acacac"/>
<rect x="708" y="309" width="1" height="3" fill="#acacac"/>
<rect x="708" y="315" width="1" height="3" fill="#acacac"/>
<rect x="708" y="321" width="1" height="3" fill="#acacac"/>
<rect x="711" y="239" width="1" height="1" fill="#acacac"/>
<rect x="711" y="243" width="1" height="3" fill="#acacac"/>
<rect x="711" y="249" width="1" height="3" fill="#acacac"/>
<rect x="711" y="255" width="1" height="3" fill="#acacac"/>
<rect x="711" y="261" width="1" height="3" fill="#acacac"/>
<rect x="711" y="267" width="1" height="3" fill="#acacac"/>
<rect x="711" y="273" width="1" height="3" fill="#acacac"/>
<rect x="711" y="279" width="1" height="3" fill="#acacac"/>
<rect x="711" y="285" width="1" height="3" fill="#acacac"/>
<rect x="711" y="291" width="1" height="3" fill="#acacac"/>
<rect x="711" y="297" width="1" height="3" fill="#acacac"/>
<rect x="711" y="303" width="1" height="3" fill="#acacac"/>
<rect x="711" y="309" width="1" height="3" fill="#acacac"/>
<rect x="711" y="315" width="1" height="3" fill="#acacac"/>
<rect x="711" y="321" width="1" height="3" fill="#acacac"/>
<rect x="717" y="225" width="1" height="3" fill="#acacac"/>
<rect x="717" y="231" width="1" height="3" fill="#acacac"/>
<rect x="717" y="237" width="1" height="3" fill="#acacac"/>
<rect x="717" y="243" width="1" height="3" fill="#acacac"/>
<rect x="717" y="249" width="1" height="3" fill="#acacac"/>
<rect x="717" y="255" width="1" height="3" fill="#acacac"/>
<rect x="717" y="261" width="1" height="3" fill="#acacac"/>
<rect x="717" y="267" width="1" height="3" fill="#acacac"/>
<rect x="717" y="273" width="1" height="3" fill="#acacac"/>
<rect x="717" y="279" width="1" height="3" fill="#acacac"/>
<rect x="717" y="285" width="1" height="3" fill="#acacac"/>
<rect x="717" y="291" width="1" height="3" fill="#acacac"/>
<rect x="717" y="297" width="1" height="3" fill="#acacac"/>
<rect x="717" y="303" width="1" height="3" fill="#acacac"/>
<rect x="717" y="309" width="1" height="3" fill="#acacac"/>
<rect x="717" y="315" width="1" height="3" fill="#acacac"/>
<rect x="717" y="321" width="1" height="3" fill="#acacac"/>
<rect x="729" y="233" width="1" height="1" fill="#acacac"/>
<rect x="729" y="237" width="1" height="3" fill="#acacac"/>
<rect x="729" y="243" width="1" height="3" fill="#acacac"/>
<rect x="729" y="249" width="1" height="3" fill="#acacac"/>
<rect x="729" y="255" width="1" height="3" fill="#acacac"/>
<rect x="729" y="261" width="1" height="3" fill="#acacac"/>
<rect x="729" y="267" width="1" height="3" fill="#acacac"/>
<rect x="729" y="273" width="1" height="3" fill="#acacac"/>
<rect x="729" y="279" width="1" height="3" fill="#acacac"/>
<rect x="729" y="285" width="1" height="3" fill="#acacac"/>
<rect x="729" y="291" width="1" height="3" fill="#acacac"/>
<rect x="729" y="297" width="1" height="3" fill="#acacac"/>
<rect x="729" y="303" width="1" height="3" fill="#acacac"/>
<rect x="729" y="309" width="1" height="3" fill="#acacac"/>
<rect x="729" y="315" width="1" height="3" fill="#acacac"/>
<rect x="729" y="321" width="1" height="3" fill="#acacac"/>
<rect x="737" y="237" width="1" height="3" fill="#acacac"/>
<rect x="737" y="243" width="1" height="3" fill="#acacac"/>
<rect x="737" y="249" width="1" height="3" fill="#acacac"/>
<rect x="737" y="255" width="1" height="3" fill="#acacac"/>
<rect x="737" y="261" width="1" height="3" fill="#acacac"/>
<rect x="737" y="267" width="1" height="3" fill="#acacac"/>
<rect x="737" y="273" width="1" height="3" fill="#acacac"/>
<rect x="737" y="279" width="1" height="3" fill="#acacac"/>
<rect x="737" y="285" width="1" height="3" fill="#acacac"/>
<rect x="737" y="291" width="1" height="3" fill="#acacac"/>
<rect x="737" y="297" width="1" height="3" fill="#acacac"/>
<rect x="737" y="303" width="1" height="3" fill="#acacac"/>
<rect x="737" y="309" width="1" height="3" fill="#acacac"/>
<rect x="737" y="315" width="1" height="3" fill="#acacac"/>
<rect x="737" y="321" width="1" height="3" fill="#acacac"/>
<rect x="747" y="237" width="1" height="3" fill="#acacac"/>
<rect x="747" y="243" width="1" height="3" fill="#acacac"/>
<rect x="747" y="249" width="1" height="3" fill="#acacac"/>
<rect x="747" y="255" width="1" height="3" fill="#acacac"/>
<rect x="747" y="261" width="1" height="3" fill="#acacac"/>
<rect x="747" y="267" width="1" height="3" fill="#acacac"/>
<rect x="747" y="273" width="1" height="3" fill="#acacac"/>
<rect x="747" y="279" width="1" height="3" fill="#acacac"/>
<rect x="747" y="285" width="1" height="3" fill="#acacac"/>
<rect x="747" y="291" width="1" height="3" fill="#acacac"/>
<rect x="747" y="297" width="1" height="3" fill="#acacac"/>
<rect x="747" y="303" width="1" height="3" fill="#acacac"/>
<rect x="747" y="309" width="1" height="3" fill="#acacac"/>
<rect x="747" y="315" width="1" height="3" fill="#acacac"/>
<rect x="747" y="321" width="1" height="3" fill="#acacac"/>
<rect x="758" y="249" width="1" height="3" fill="#acacac"/>
<rect x="758" y="255" width="1" height="3" fill="#acacac"/>
<rect x="758" y="261" width="1" height="3" fill="#acacac"/>
<rect x="758" y="267" width="1" height="3" fill="#acacac"/>
<rect x="758" y="273" width="1" height="3" fill="#acacac"/>
<rect x="758" y="279" width="1" height="3" fill="#acacac"/>
<rect x="758" y="285" width="1" height="3" fill="#acacac"/>
<rect x="758" y="291" width="1" height="3" fill="#acacac"/>
<rect x="758" y="297" width="1" height="3" fill="#acacac"/>
<rect x="758" y="303" width="1" height="3" fill="#acacac"/>
<rect x="758" y="309" width="1" height="3" fill="#acacac"/>
<rect x="758" y="315" width="1" height="3" fill="#acacac"/>
<rect x="758" y="321" width="1" height="3" fill="#acacac"/>
<rect x="766" y="238" width="1" height="2" fill="#acacac"/>
<rect x="766" y="243" width="1" height="3" fill="#acacac"/>
<rect x="766" y="249" width="1" height="3" fill="#acacac"/>
<rect x="766" y="255" width="1" height="3" fill="#acacac"/>
<rect x="766" y="261" width="1" height="3" fill="#acacac"/>
<rect x="766" y="267" width="1" height="3" fill="#acacac"/>
<rect x="766" y="273" width="1" height="3" fill="#acacac"/>
<rect x="766" y="279" width="1" height="3" fill="#acacac"/>
<rect x="766" y="285" width="1" height="3" fill="#acacac"/>
<rect x="766" y="291" width="1" height="3" fill="#acacac"/>
<rect x="766" y="297" width="1" height="3" fill="#acacac"/>
<rect x="766" y="303" width="1" height="3" fill="#acacac"/>
<rect x="766" y="309" width="1" height="3" fill="#acacac"/>
<rect x="766" y="315" width="1" height="3" fill="#acacac"/>
<rect x="766" y="321" width="1" height="3" fill="#acacac"/>
<rect x="777" y="243" width="1" height="3" fill="#acacac"/>
<rect x="777" y="249" width="1" height="3" fill="#acacac"/>
<rect x="777" y="255" width="1" height="3" fill="#acacac"/>
<rect x="777" y="261" width="1" height="3" fill="#acacac"/>
<rect x="777" y="267" width="1" height="3" fill="#acacac"/>
<rect x="777" y="273" width="1" height="3" fill="#acacac"/>
<rect x="777" y="279" width="1" height="3" fill="#acacac"/>
<rect x="777" y="285" width="1" height="3" fill="#acacac"/>
<rect x="777" y="291" width="1" height="3" fill="#acacac"/>
<rect x="777" y="297" width="1" height="3" fill="#acacac"/>
<rect x="777" y="303" width="1" height="3" fill="#acacac"/>
<rect x="777" y="309" width="1" height="3" fill="#acacac"/>
<rect x="777" y="315" width="1" height="3" fill="#acacac"/>
<rect x="777" y="321" width="1" height="3" fill="#acacac"/>
<rect x="786" y="244" width="1" height="2" fill="#acacac"/>
<rect x="786" y="249" width="1" height="3" fill="#acacac"/>
<rect x="786" y="255" width="1" height="3" fill="#acacac"/>
<rect x="786" y="261" width="1" height="3" fill="#acacac"/>
<rect x="786" y="267" width="1" height="3" fill="#acacac"/>
<rect x="786" y="273" width="1" height="3" fill="#acacac"/>
<rect x="786" y="279" width="1" height="3" fill="#acacac"/>
<rect x="786" y="285" width="1" height="3" fill="#acacac"/>
<rect x="786" y="291" width="1" height="3" fill="#acacac"/>
<rect x="786" y="297" width="1" height="3" fill="#acacac"/>
<rect x="786" y="303" width="1" height="3" fill="#acacac"/>
<rect x="786" y="309" width="1" height="3" fill="#acacac"/>
<rect x="786" y="315" width="1" height="3" fill="#acacac"/>
<rect x="786" y="321" width="1" height="3" fill="#acacac"/>
<rect x="791" y="239" width="1" height="1" fill="#acacac"/>
<rect x="791" y="243" width="1" height="3" fill="#acacac"/>
<rect x="791" y="249" width="1" height="3" fill="#acacac"/>
<rect x="791" y="255" width="1" height="3" fill="#acacac"/>
<rect x="791" y="261" width="1" height="3" fill="#acacac"/>
<rect x="791" y="267" width="1" height="3" fill="#acacac"/>
<rect x="791" y="273" width="1" height="3" fill="#acacac"/>
<rect x="791" y="279" width="1" height="3" fill="#acacac"/>
<rect x="791" y="285" width="1" height="3" fill="#acacac"/>
<rect x="791" y="291" width="1" height="3" fill="#acacac"/>
<rect x="791" y="297" width="1" height="3" fill="#acacac"/>
<rect x="791" y="303" width="1" height="3" fill="#acacac"/>
<rect x="791" y="309" width="1" height="3" fill="#acacac"/>
<rect x="791" y="315" width="1" height="3" fill="#acacac"/>
<rect x="791" y="321" width="1" height="3" fill="#acacac"/>
<rect x="798" y="251" width="1" height="1" fill="#acacac"/>
<rect x="798" y="255" width="1" height="3" fill="#acacac"/>
<rect x="798" y="261" width="1" height="3" fill="#acacac"/>
<rect x="798" y="267" width="1" height="3" fill="#acacac"/>
<rect x="798" y="273" width="1" height="3" fill="#acacac"/>
<rect x="798" y="279" width="1" height="3" fill="#acacac"/>
<rect x="798" y="285" width="1" height="3" fill="#acacac"/>
<rect x="798" y="291" width="1" height="3" fill="#acacac"/>
<rect x="798" y="297" width="1" height="3" fill="#acacac"/>
<rect x="798" y="303" width="1" height="3" fill="#acacac"/>
<rect x="798" y="309" width="1" height="3" fill="#acacac"/>
<rect x="798" y="315" width="1" height="3" fill="#acacac"/>
<rect x="798" y="321" width="1" height="3" fill="#acacac"/>
<rect x="805" y="245" width="1" height="1" fill="#acacac"/>
<rect x="805" y="249" width="1" height="3" fill="#acacac"/>
<rect x="805" y="255" width="1" height="3" fill="#acacac"/>
<rect x="805" y="261" width="1" height="3" fill="#acacac"/>
<rect x="805" y="267" width="1" height="3" fill="#acacac"/>
<rect x="805" y="273" width="1" height="3" fill="#acacac"/>
<rect x="805" y="279" width="1" height="3" fill="#acacac"/>
<rect x="805" y="285" width="1" height="3" fill="#acacac"/>
<rect x="805" y="291" width="1" height="3" fill="#acacac"/>
<rect x="805" y="297" width="1" height="3" fill="#acacac"/>
<rect x="805" y="303" width="1" height="3" fill="#acacac"/>
<rect x="805" y="309" width="1" height="3" fill="#acacac"/>
<rect x="805" y="315" width="1" height="3" fill="#acacac"/>
<rect x="805" y="321" width="1" height="3" fill="#acacac"/>
<path d="M94.00 178.0 L94.60 196.0 L95.40 198.0 L95.50 198.0 L95.75 198.3 L96.00 199.2 L96.25 200.8 L96.50 202.8 L96.75 205.3 L97.00 208.2 L97.25 211.4 L97.50 214.8 L97.75 218.2 L98.00 221.7 L98.25 224.9 L98.50 227.9 L98.75 230.5 L99.00 232.7 L99.25 234.4 L99.50 235.5 L99.75 236.0 L100.00 234.7 L100.25 229.0 L100.50 219.8 L100.75 209.1 L101.00 199.3 L101.25 192.5 L101.50 190.0 L101.75 190.4 L102.00 191.6 L102.25 193.6 L102.50 196.3 L102.75 199.4 L103.00 203.0 L103.25 206.7 L103.50 210.5 L103.75 214.2 L104.00 217.5 L104.25 220.4 L104.50 222.7 L104.75 224.2 L105.00 224.9 L105.25 224.4 L105.50 220.7 L105.75 214.8 L106.00 208.5 L106.25 203.8 L106.50 202.0 L106.75 202.3 L107.00 203.1 L107.25 204.4 L107.50 206.1 L107.75 208.2 L108.00 210.5 L108.25 213.0 L108.50 215.5 L108.75 217.9 L109.00 220.1 L109.25 222.0 L109.50 223.5 L109.75 224.5 L110.00 225.0 L110.25 224.4 L110.50 220.9 L110.75 215.2 L111.00 209.2 L111.25 204.7 L111.50 203.0 L111.75 203.2 L112.00 203.7 L112.25 204.6 L112.50 205.8 L112.75 207.2 L113.00 208.9 L113.25 210.8 L113.50 212.7 L113.75 214.7 L114.00 216.7 L114.25 218.6 L114.50 220.3 L114.75 221.8 L115.00 223.1 L115.25 224.1 L115.50 224.7 L115.75 225.0 L116.00 224.1 L116.25 220.1 L116.50 213.7 L116.75 206.3 L117.00 199.5 L117.25 194.7 L117.50 193.0 L117.75 193.2 L118.00 193.9 L118.25 194.9 L118.50 196.3 L118.75 198.1 L119.00 200.2 L119.25 202.6 L119.50 205.1 L119.75 207.8 L120.00 210.5 L120.25 213.2 L120.50 215.9 L120.75 218.4 L121.00 220.8 L121.25 222.9 L121.50 224.7 L121.75 226.1 L122.00 227.1 L122.25 227.8 L122.50 228.0 L122.75 228.0 L123.00 228.0 L123.25 228.0 L123.50 228.0 L123.75 228.0 L124.00 228.0 L124.25 227.6 L124.50 225.5 L124.75 221.5 L125.00 216.3 L125.25 210.2 L125.50 204.1 L125.75 198.4 L126.00 193.9 L126.25 191.0 L126.50 190.0 L126.75 190.2 L127.00 190.8 L127.25 191.7 L127.50 193.0 L127.75 194.5 L128.00 196.4 L128.25 198.5 L128.50 200.7 L128.75 203.1 L129.00 205.5 L129.25 207.9 L129.50 210.3 L129.75 212.5 L130.00 214.6 L130.25 216.5 L130.50 218.0 L130.75 219.3 L131.00 220.2 L131.25 220.8 L131.50 221.0 L131.75 221.0 L132.00 221.0 L132.25 221.0 L132.50 221.0 L132.75 221.0 L133.00 221.0 L133.25 221.0 L133.50 221.0 L133.75 221.0 L134.00 221.0 L134.25 221.0 L134.50 221.0 L134.75 221.0 L135.00 221.0 L135.25 220.7 L135.50 218.7 L135.75 215.2 L136.00 210.5 L136.25 205.1 L136.50 199.6 L136.75 194.6 L137.00 190.5 L137.25 187.9 L137.50 187.0 L137.75 187.1 L138.00 187.5 L138.25 188.2 L138.50 189.1 L138.75 190.2 L139.00 191.5 L139.25 193.0 L139.50 194.6 L139.75 196.3 L140.00 198.0 L140.25 199.7 L140.50 201.4 L140.75 203.0 L141.00 204.5 L141.25 205.8 L141.50 206.9 L141.75 207.8 L142.00 208.5 L142.25 208.9 L142.50 209.0 L142.75 209.0 L143.00 209.0 L143.25 209.0 L143.50 208.2 L143.75 205.6 L144.00 201.6 L144.25 196.7 L144.50 191.5 L144.75 186.6 L145.00 182.5 L145.25 179.9 L145.50 179.0 L145.75 179.2 L146.00 179.6 L146.25 180.4 L146.50 181.5 L146.75 182.8 L147.00 184.4 L147.25 186.1 L147.50 188.0 L147.75 190.0 L148.00 192.0 L148.25 194.0 L148.50 196.0 L148.75 197.9 L149.00 199.6 L149.25 201.2 L149.50 202.5 L149.75 203.6 L150.00 204.4 L150.25 204.8 L150.50 205.0 L150.75 205.0 L151.00 205.0 L151.25 205.0 L151.50 205.0 L151.75 205.0 L152.00 205.0 L152.25 205.0 L152.50 205.0 L152.75 205.0 L153.00 205.0 L153.25 205.0 L153.50 205.0 L153.75 205.0 L154.00 205.0 L154.25 205.0 L154.50 205.0 L154.75 205.0 L155.00 205.0 L155.25 204.8 L155.50 203.3 L155.75 200.7 L156.00 197.3 L156.25 193.3 L156.50 189.3 L156.75 185.6 L157.00 182.6 L157.25 180.7 L157.50 180.0 L157.75 180.3 L158.00 181.1 L158.25 182.4 L158.50 184.0 L158.75 186.0 L159.00 188.0 L159.25 190.0 L159.50 191.8 L159.75 193.3 L160.00 194.4 L160.25 194.9 L160.50 194.7 L160.75 192.5 L161.00 189.2 L161.25 186.2 L161.50 185.0 L161.75 185.1 L162.00 185.3 L162.25 185.7 L162.50 186.3 L162.75 186.9 L163.00 187.7 L163.25 188.5 L163.50 189.4 L163.75 190.3 L164.00 191.2 L164.25 192.1 L164.50 192.9 L164.75 193.6 L165.00 194.1 L165.25 194.6 L165.50 194.9 L165.75 195.0 L166.00 194.6 L166.25 192.6 L166.50 189.4 L166.75 185.7 L167.00 182.2 L167.25 179.9 L167.50 179.0 L167.75 179.2 L168.00 179.6 L168.25 180.4 L168.50 181.5 L168.75 182.8 L169.00 184.4 L169.25 186.1 L169.50 188.0 L169.75 190.0 L170.00 192.0 L170.25 194.0 L170.50 196.0 L170.75 197.9 L171.00 199.6 L171.25 201.2 L171.50 202.5 L171.75 203.6 L172.00 204.4 L172.25 204.8 L172.50 205.0 L172.75 205.0 L173.00 205.0 L173.25 205.0 L173.50 205.0 L173.75 205.0 L174.00 205.0 L174.25 205.0 L174.50 205.0 L174.75 205.0 L175.00 205.0 L175.25 205.0 L175.50 205.0 L175.75 205.0 L176.00 205.0 L176.25 204.7 L176.50 203.0 L176.75 199.9 L177.00 195.7 L177.25 191.0 L177.50 186.1 L177.75 181.7 L178.00 178.1 L178.25 175.8 L178.50 175.0 L178.75 175.2 L179.00 175.9 L179.25 177.0 L179.50 178.4 L179.75 180.2 L180.00 182.3 L180.25 184.5 L180.50 186.9 L180.75 189.4 L181.00 191.8 L181.25 194.1 L181.50 196.2 L181.75 198.1 L182.00 199.7 L182.25 200.9 L182.50 201.6 L182.75 202.0 L183.00 201.6 L183.25 199.9 L183.50 197.1 L183.75 193.8 L184.00 190.8 L184.25 188.8 L184.50 188.0 L184.75 188.2 L185.00 189.0 L185.25 190.0 L185.50 191.4 L185.75 192.7 L186.00 194.0 L186.25 194.9 L186.50 195.5 L186.75 195.4 L187.00 193.3 L187.25 190.3 L187.50 189.0 L187.75 189.2 L188.00 189.7 L188.25 190.6 L188.50 191.9 L188.75 193.4 L189.00 195.2 L189.25 197.2 L189.50 199.4 L189.75 201.7 L190.00 204.0 L190.25 206.3 L190.50 208.6 L190.75 210.8 L191.00 212.8 L191.25 214.6 L191.50 216.1 L191.75 217.4 L192.00 218.3 L192.25 218.8 L192.50 219.0 L192.75 219.0 L193.00 219.0 L193.25 219.0 L193.50 219.0 L193.75 219.0 L194.00 219.0 L194.25 219.0 L194.50 219.0 L194.75 219.0 L195.00 219.0 L195.25 219.0 L195.50 219.0 L195.75 219.0 L196.00 219.0 L196.25 219.0 L196.50 219.0 L196.75 219.0 L197.00 219.0 L197.25 218.7 L197.50 216.6 L197.75 212.9 L198.00 207.9 L198.25 202.2 L198.50 196.3 L198.75 191.0 L199.00 186.7 L199.25 184.0 L199.50 183.0 L199.75 183.1 L200.00 183.5 L200.25 184.2 L200.50 185.1 L200.75 186.2 L201.00 187.5 L201.25 189.0 L201.50 190.6 L201.75 192.3 L202.00 194.0 L202.25 195.7 L202.50 197.4 L202.75 199.0 L203.00 200.5 L203.25 201.8 L203.50 202.9 L203.75 203.8 L204.00 204.5 L204.25 204.9 L204.50 205.0 L204.75 205.0 L205.00 205.0 L205.25 205.0 L205.50 205.0 L205.75 205.0 L206.00 205.0 L206.25 204.8 L206.50 203.9 L206.75 202.1 L207.00 199.8 L207.25 197.1 L207.50 194.3 L207.75 191.8 L208.00 189.8 L208.25 188.5 L208.50 188.0 L208.75 188.1 L209.00 188.3 L209.25 188.8 L209.50 189.3 L209.75 190.1 L210.00 190.9 L210.25 191.8 L210.50 192.8 L210.75 193.9 L211.00 195.0 L211.25 196.1 L211.50 197.2 L211.75 198.2 L212.00 199.1 L212.25 199.9 L212.50 200.7 L212.75 201.2 L213.00 201.7 L213.25 201.9 L213.50 202.0 L213.75 202.0 L214.00 202.0 L214.25 202.0 L214.50 201.7 L214.75 200.6 L215.00 199.0 L215.25 197.1 L215.50 195.0 L215.75 193.0 L216.00 191.4 L216.25 190.4 L216.50 190.0 L216.75 190.1 L217.00 190.5 L217.25 191.1 L217.50 192.0 L217.75 193.0 L218.00 194.1 L218.25 195.3 L218.50 196.5 L218.75 197.6 L219.00 198.7 L219.25 199.6 L219.50 200.3 L219.75 200.7 L220.00 201.0 L220.25 200.7 L220.50 198.9 L220.75 196.1 L221.00 193.1 L221.25 190.8 L221.50 190.0 L221.75 190.1 L222.00 190.4 L222.25 191.0 L222.50 191.7 L222.75 192.5 L223.00 193.6 L223.25 194.7 L223.50 195.8 L223.75 197.0 L224.00 198.2 L224.25 199.3 L224.50 200.4 L224.75 201.3 L225.00 202.1 L225.25 202.6 L225.50 203.0 L225.75 203.2 L226.00 202.8 L226.25 200.9 L226.50 197.8 L226.75 194.3 L227.00 191.1 L227.25 188.8 L227.50 188.0 L227.75 188.2 L228.00 188.6 L228.25 189.4 L228.50 190.4 L228.75 191.7 L229.00 193.2 L229.25 194.8 L229.50 196.6 L229.75 198.5 L230.00 200.5 L230.25 202.5 L230.50 204.4 L230.75 206.2 L231.00 207.8 L231.25 209.3 L231.50 210.6 L231.75 211.6 L232.00 212.4 L232.25 212.8 L232.50 213.0 L232.75 213.0 L233.00 213.0 L233.25 213.0 L233.50 213.0 L233.75 213.0 L234.00 213.0 L234.25 213.0 L234.50 213.0 L234.75 213.0 L235.00 213.0 L235.25 213.0 L235.50 213.0 L235.75 213.0 L236.00 213.0 L236.25 212.6 L236.50 210.3 L236.75 206.2 L237.00 200.7 L237.25 194.3 L237.50 187.8 L237.75 181.9 L238.00 177.1 L238.25 174.1 L238.50 173.0 L238.75 173.3 L239.00 174.0 L239.25 175.3 L239.50 177.0 L239.75 179.2 L240.00 181.7 L240.25 184.5 L240.50 187.5 L240.75 190.7 L241.00 194.0 L241.25 197.3 L241.50 200.5 L241.75 203.5 L242.00 206.3 L242.25 208.8 L242.50 211.0 L242.75 212.7 L243.00 214.0 L243.25 214.7 L243.50 215.0 L243.75 215.0 L244.00 215.0 L244.25 215.0 L244.50 215.0 L244.75 215.0 L245.00 215.0 L245.25 215.0 L245.50 215.0 L245.75 215.0 L246.00 215.0 L246.25 214.8 L246.50 213.5 L246.75 211.3 L247.00 208.2 L247.25 204.7 L247.50 201.2 L247.75 197.9 L248.00 195.3 L248.25 193.6 L248.50 193.0 L248.75 193.2 L249.00 193.8 L249.25 194.7 L249.50 196.1 L249.75 197.7 L250.00 199.6 L250.25 201.7 L250.50 204.1 L250.75 206.5 L251.00 209.0 L251.25 211.5 L251.50 213.9 L251.75 216.3 L252.00 218.4 L252.25 220.3 L252.50 221.9 L252.75 223.3 L253.00 224.2 L253.25 224.8 L253.50 225.0 L253.75 225.0 L254.00 225.0 L254.25 225.0 L254.50 225.0 L254.75 225.0 L255.00 225.0 L255.25 225.0 L255.50 225.0 L255.75 225.0 L256.00 225.0 L256.25 225.0 L256.50 225.0 L256.75 225.0 L257.00 225.0 L257.25 224.7 L257.50 222.8 L257.75 219.4 L258.00 214.8 L258.25 209.6 L258.50 204.2 L258.75 199.3 L259.00 195.4 L259.25 192.9 L259.50 192.0 L259.75 192.3 L260.00 193.1 L260.25 194.5 L260.50 196.3 L260.75 198.6 L261.00 201.3 L261.25 204.3 L261.50 207.5 L261.75 211.0 L262.00 214.5 L262.25 218.0 L262.50 221.5 L262.75 224.7 L263.00 227.7 L263.25 230.4 L263.50 232.7 L263.75 234.5 L264.00 235.9 L264.25 236.7 L264.50 237.0 L264.75 237.0 L265.00 237.0 L265.25 237.0 L265.50 237.0 L265.75 237.0 L266.00 237.0 L266.25 236.7 L266.50 234.7 L266.75 231.0 L267.00 226.2 L267.25 220.6 L267.50 215.0 L267.75 209.8 L268.00 205.6 L268.25 202.9 L268.50 202.0 L268.75 202.2 L269.00 202.9 L269.25 203.9 L269.50 205.3 L269.75 207.1 L270.00 209.2 L270.25 211.6 L270.50 214.1 L270.75 216.8 L271.00 219.5 L271.25 222.2 L271.50 224.9 L271.75 227.4 L272.00 229.8 L272.25 231.9 L272.50 233.7 L272.75 235.1 L273.00 236.1 L273.25 236.8 L273.50 237.0 L273.75 237.0 L274.00 237.0 L274.25 237.0 L274.50 237.0 L274.75 237.0 L275.00 237.0 L275.25 237.0 L275.50 237.0 L275.75 237.0 L276.00 237.0 L276.25 236.6 L276.50 234.5 L276.75 230.5 L277.00 225.3 L277.25 219.2 L277.50 213.1 L277.75 207.4 L278.00 202.9 L278.25 200.0 L278.50 199.0 L278.75 199.2 L279.00 200.0 L279.25 201.0 L279.50 202.4 L279.75 203.7 L280.00 205.0 L280.25 205.9 L280.50 206.5 L280.75 206.4 L281.00 204.3 L281.25 201.3 L281.50 200.0 L281.75 200.2 L282.00 200.8 L282.25 201.8 L282.50 203.2 L282.75 204.8 L283.00 206.7 L283.25 208.8 L283.50 211.0 L283.75 213.3 L284.00 215.6 L284.25 217.7 L284.50 219.7 L284.75 221.4 L285.00 222.8 L285.25 223.9 L285.50 224.7 L285.75 225.0 L286.00 224.2 L286.25 220.9 L286.50 215.5 L286.75 209.2 L287.00 203.5 L287.25 199.4 L287.50 198.0 L287.75 198.2 L288.00 198.8 L288.25 199.9 L288.50 201.2 L288.75 203.0 L289.00 205.0 L289.25 207.3 L289.50 209.7 L289.75 212.3 L290.00 215.0 L290.25 217.7 L290.50 220.3 L290.75 222.7 L291.00 225.0 L291.25 227.0 L291.50 228.8 L291.75 230.1 L292.00 231.2 L292.25 231.8 L292.50 232.0 L292.75 232.0 L293.00 232.0 L293.25 232.0 L293.50 232.0 L293.75 232.0 L294.00 232.0 L294.25 232.0 L294.50 232.0 L294.75 232.0 L295.00 232.0 L295.25 232.0 L295.50 232.0 L295.75 232.0 L296.00 232.0 L296.25 231.5 L296.50 228.7 L296.75 223.7 L297.00 216.9 L297.25 209.1 L297.50 201.2 L297.75 193.9 L298.00 188.1 L298.25 184.3 L298.50 183.0 L298.75 183.3 L299.00 184.2 L299.25 185.6 L299.50 187.6 L299.75 190.0 L300.00 192.9 L300.25 196.1 L300.50 199.6 L300.75 203.2 L301.00 207.0 L301.25 210.8 L301.50 214.4 L301.75 217.9 L302.00 221.1 L302.25 224.0 L302.50 226.4 L302.75 228.4 L303.00 229.8 L303.25 230.7 L303.50 231.0 L303.75 231.0 L304.00 231.0 L304.25 231.0 L304.50 231.0 L304.75 231.0 L305.00 231.0 L305.25 231.0 L305.50 231.0 L305.75 231.0 L306.00 231.0 L306.25 231.0 L306.50 231.0 L306.75 231.0 L307.00 231.0 L307.25 230.7 L307.50 229.0 L307.75 225.9 L308.00 221.7 L308.25 217.0 L308.50 212.1 L308.75 207.7 L309.00 204.1 L309.25 201.8 L309.50 201.0 L309.75 201.2 L310.00 201.8 L310.25 202.8 L310.50 204.2 L310.75 205.8 L311.00 207.8 L311.25 210.0 L311.50 212.4 L311.75 214.9 L312.00 217.5 L312.25 220.1 L312.50 222.6 L312.75 225.0 L313.00 227.2 L313.25 229.2 L313.50 230.8 L313.75 232.2 L314.00 233.2 L314.25 233.8 L314.50 234.0 L314.75 234.0 L315.00 234.0 L315.25 234.0 L315.50 234.0 L315.75 234.0 L316.00 234.0 L316.25 233.6 L316.50 231.1 L316.75 226.7 L317.00 220.7 L317.25 213.9 L317.50 206.9 L317.75 200.6 L318.00 195.4 L318.25 192.1 L318.50 191.0 L318.75 191.3 L319.00 192.1 L319.25 193.5 L319.50 195.4 L319.75 197.7 L320.00 200.5 L320.25 203.6 L320.50 206.9 L320.75 210.4 L321.00 214.0 L321.25 217.6 L321.50 221.1 L321.75 224.4 L322.00 227.5 L322.25 230.3 L322.50 232.6 L322.75 234.5 L323.00 235.9 L323.25 236.7 L323.50 237.0 L323.75 237.0 L324.00 237.0 L324.25 237.0 L324.50 237.0 L324.75 237.0 L325.00 237.0 L325.25 237.0 L325.50 237.0 L325.75 237.0 L326.00 237.0 L326.25 237.0 L326.50 237.0 L326.75 237.0 L327.00 237.0 L327.25 236.6 L327.50 234.5 L327.75 230.5 L328.00 225.3 L328.25 219.2 L328.50 213.1 L328.75 207.4 L329.00 202.9 L329.25 200.0 L329.50 199.0 L329.75 199.2 L330.00 199.6 L330.25 200.4 L330.50 201.5 L330.75 202.8 L331.00 204.4 L331.25 206.1 L331.50 208.0 L331.75 210.0 L332.00 212.0 L332.25 214.0 L332.50 216.0 L332.75 217.9 L333.00 219.6 L333.25 221.2 L333.50 222.5 L333.75 223.6 L334.00 224.4 L334.25 224.8 L334.50 225.0 L334.75 225.0 L335.00 225.0 L335.25 225.0 L335.50 224.1 L335.75 221.5 L336.00 217.4 L336.25 212.3 L336.50 206.9 L336.75 201.8 L337.00 197.7 L337.25 194.9 L337.50 194.0 L337.75 194.2 L338.00 195.0 L338.25 196.2 L338.50 197.9 L338.75 199.9 L339.00 202.3 L339.25 205.1 L339.50 208.0 L339.75 211.1 L340.00 214.2 L340.25 217.4 L340.50 220.5 L340.75 223.4 L341.00 226.2 L341.25 228.6 L341.50 230.6 L341.75 232.3 L342.00 233.5 L342.25 234.3 L342.50 234.5 L342.75 234.5 L343.00 234.5 L343.25 234.5 L343.50 234.5 L343.75 234.5 L344.00 234.5 L344.25 234.5 L344.50 234.5 L344.75 234.5 L345.00 234.5 L345.25 234.2 L345.50 232.2 L345.75 228.6 L346.00 223.9 L346.25 218.4 L346.50 212.8 L346.75 207.7 L347.00 203.6 L347.25 200.9 L347.50 200.0 L347.75 200.2 L348.00 200.7 L348.25 201.6 L348.50 202.9 L348.75 204.4 L349.00 206.2 L349.25 208.2 L349.50 210.4 L349.75 212.7 L350.00 215.0 L350.25 217.3 L350.50 219.6 L350.75 221.8 L351.00 223.8 L351.25 225.6 L351.50 227.1 L351.75 228.4 L352.00 229.3 L352.25 229.8 L352.50 230.0 L352.75 230.0 L353.00 230.0 L353.25 230.0 L353.50 230.0 L353.75 230.0 L354.00 230.0 L354.25 230.0 L354.50 230.0 L354.75 230.0 L355.00 230.0 L355.25 229.5 L355.50 226.8 L355.75 221.8 L356.00 215.2 L356.25 207.6 L356.50 199.8 L356.75 192.7 L357.00 187.0 L357.25 183.3 L357.50 182.0 L357.75 182.2 L358.00 182.9 L358.25 184.0 L358.50 185.4 L358.75 187.3 L359.00 189.4 L359.25 191.8 L359.50 194.4 L359.75 197.2 L360.00 200.0 L360.25 202.8 L360.50 205.6 L360.75 208.2 L361.00 210.6 L361.25 212.7 L361.50 214.6 L361.75 216.0 L362.00 217.1 L362.25 217.8 L362.50 218.0 L362.75 218.0 L363.00 218.0 L363.25 218.0 L363.50 218.0 L363.75 218.0 L364.00 218.0 L364.25 218.0 L364.50 218.0 L364.75 218.0 L365.00 218.0 L365.25 218.0 L365.50 218.0 L365.75 218.0 L366.00 218.0 L366.25 217.8 L366.50 216.3 L366.75 213.6 L367.00 210.0 L367.25 205.9 L367.50 201.6 L367.75 197.8 L368.00 194.7 L368.25 192.7 L368.50 192.0 L368.75 192.1 L369.00 192.6 L369.25 193.3 L369.50 194.2 L369.75 195.4 L370.00 196.7 L370.25 198.3 L370.50 199.9 L370.75 201.7 L371.00 203.5 L371.25 205.3 L371.50 207.1 L371.75 208.7 L372.00 210.3 L372.25 211.6 L372.50 212.8 L372.75 213.7 L373.00 214.4 L373.25 214.9 L373.50 215.0 L373.75 215.0 L374.00 215.0 L374.25 215.0 L374.50 214.4 L374.75 212.6 L375.00 209.8 L375.25 206.4 L375.50 202.7 L375.75 199.3 L376.00 196.5 L376.25 194.6 L376.50 194.0 L376.75 194.2 L377.00 195.0 L377.25 196.2 L377.50 197.9 L377.75 199.9 L378.00 202.4 L378.25 205.1 L378.50 208.0 L378.75 211.1 L379.00 214.3 L379.25 217.5 L379.50 220.6 L379.75 223.5 L380.00 226.2 L380.25 228.7 L380.50 230.7 L380.75 232.4 L381.00 233.6 L381.25 234.4 L381.50 234.6 L381.75 234.6 L382.00 234.6 L382.25 234.6 L382.50 234.6 L382.75 234.6 L383.00 234.6 L383.25 234.6 L383.50 234.6 L383.75 234.6 L384.00 234.6 L384.25 234.6 L384.50 234.6 L384.75 234.6 L385.00 234.6 L385.25 234.6 L385.50 234.6 L385.75 234.6 L386.00 234.6 L386.25 234.3 L386.50 232.3 L386.75 228.7 L387.00 223.9 L387.25 218.4 L387.50 212.8 L387.75 207.7 L388.00 203.6 L388.25 200.9 L388.50 200.0 L388.75 200.2 L389.00 200.7 L389.25 201.6 L389.50 202.9 L389.75 204.4 L390.00 206.2 L390.25 208.2 L390.50 210.4 L390.75 212.7 L391.00 215.0 L391.25 217.3 L391.50 219.6 L391.75 221.8 L392.00 223.8 L392.25 225.6 L392.50 227.1 L392.75 228.4 L393.00 229.3 L393.25 229.8 L393.50 230.0 L393.75 230.0 L394.00 230.0 L394.25 230.0 L394.50 230.0 L394.75 230.0 L395.00 230.0 L395.25 229.6 L395.50 227.3 L395.75 223.2 L396.00 217.7 L396.25 211.3 L396.50 204.8 L396.75 198.9 L397.00 194.1 L397.25 191.1 L397.50 190.0 L397.75 190.2 L398.00 190.8 L398.25 191.7 L398.50 193.0 L398.75 194.5 L399.00 196.4 L399.25 198.5 L399.50 200.7 L399.75 203.1 L400.00 205.5 L400.25 207.9 L400.50 210.3 L400.75 212.5 L401.00 214.6 L401.25 216.5 L401.50 218.0 L401.75 219.3 L402.00 220.2 L402.25 220.8 L402.50 221.0 L402.75 221.0 L403.00 221.0 L403.25 221.0 L403.50 221.0 L403.75 221.0 L404.00 221.0 L404.25 221.0 L404.50 221.0 L404.75 221.0 L405.00 221.0 L405.25 220.7 L405.50 219.1 L405.75 216.1 L406.00 212.0 L406.25 207.4 L406.50 202.7 L406.75 198.4 L407.00 195.0 L407.25 192.8 L407.50 192.0 L407.75 192.1 L408.00 192.6 L408.25 193.3 L408.50 194.2 L408.75 195.4 L409.00 196.7 L409.25 198.3 L409.50 199.9 L409.75 201.7 L410.00 203.5 L410.25 205.3 L410.50 207.1 L410.75 208.7 L411.00 210.3 L411.25 211.6 L411.50 212.8 L411.75 213.7 L412.00 214.4 L412.25 214.9 L412.50 215.0 L412.75 215.0 L413.00 215.0 L413.25 215.0 L413.50 215.0 L413.75 215.0 L414.00 215.0 L414.25 215.0 L414.50 215.0 L414.75 215.0 L415.00 215.0 L415.25 214.6 L415.50 212.4 L415.75 208.4 L416.00 203.0 L416.25 196.8 L416.50 190.5 L416.75 184.7 L417.00 180.0 L417.25 177.0 L417.50 176.0 L417.75 176.3 L418.00 177.4 L418.25 179.0 L418.50 181.3 L418.75 184.1 L419.00 187.4 L419.25 191.2 L419.50 195.2 L419.75 199.4 L420.00 203.8 L420.25 208.1 L420.50 212.3 L420.75 216.3 L421.00 220.1 L421.25 223.4 L421.50 226.2 L421.75 228.5 L422.00 230.1 L422.25 231.2 L422.50 231.5 L422.75 231.5 L423.00 231.5 L423.25 231.5 L423.50 231.5 L423.75 231.5 L424.00 231.5 L424.25 231.5 L424.50 231.5 L424.75 231.5 L425.00 231.5 L425.25 231.5 L425.50 231.5 L425.75 231.5 L426.00 231.5 L426.25 231.2 L426.50 229.5 L426.75 226.3 L427.00 222.1 L427.25 217.2 L427.50 212.3 L427.75 207.8 L428.00 204.2 L428.25 201.8 L428.50 201.0 L428.75 201.2 L429.00 201.7 L429.25 202.6 L429.50 203.8 L429.75 205.2 L430.00 207.0 L430.25 208.9 L430.50 211.0 L430.75 213.2 L431.00 215.5 L431.25 217.8 L431.50 220.0 L431.75 222.1 L432.00 224.0 L432.25 225.8 L432.50 227.2 L432.75 228.4 L433.00 229.3 L433.25 229.8 L433.50 230.0 L433.75 230.0 L434.00 230.0 L434.25 230.0 L434.50 229.0 L434.75 226.1 L435.00 221.6 L435.25 216.1 L435.50 210.2 L435.75 204.6 L436.00 200.0 L436.25 197.0 L436.50 196.0 L436.75 196.2 L437.00 196.9 L437.25 198.0 L437.50 199.4 L437.75 201.3 L438.00 203.4 L438.25 205.8 L438.50 208.4 L438.75 211.2 L439.00 214.0 L439.25 216.8 L439.50 219.6 L439.75 222.2 L440.00 224.6 L440.25 226.7 L440.50 228.6 L440.75 230.0 L441.00 231.1 L441.25 231.8 L441.50 232.0 L441.75 232.0 L442.00 232.0 L442.25 232.0 L442.50 232.0 L442.75 232.0 L443.00 232.0 L443.25 232.0 L443.50 232.0 L443.75 232.0 L444.00 232.0 L444.25 231.7 L444.50 229.7 L444.75 226.2 L445.00 221.5 L445.25 216.1 L445.50 210.6 L445.75 205.6 L446.00 201.5 L446.25 198.9 L446.50 198.0 L446.75 198.2 L447.00 198.7 L447.25 199.6 L447.50 200.8 L447.75 202.2 L448.00 203.9 L448.25 205.8 L448.50 207.7 L448.75 209.7 L449.00 211.7 L449.25 213.6 L449.50 215.3 L449.75 216.8 L450.00 218.1 L450.25 219.1 L450.50 219.7 L450.75 220.0 L451.00 219.5 L451.25 217.2 L451.50 213.7 L451.75 209.5 L452.00 205.7 L452.25 203.0 L452.50 202.0 L452.75 202.1 L453.00 202.4 L453.25 203.0 L453.50 203.7 L453.75 204.5 L454.00 205.6 L454.25 206.7 L454.50 207.8 L454.75 209.0 L455.00 210.2 L455.25 211.3 L455.50 212.4 L455.75 213.3 L456.00 214.1 L456.25 214.6 L456.50 215.0 L456.75 215.2 L457.00 214.6 L457.25 212.1 L457.50 208.1 L457.75 203.4 L458.00 199.1 L458.25 196.1 L458.50 195.0 L458.75 195.0 L459.00 195.1 L459.25 195.3 L459.50 195.5 L459.75 195.7 L460.00 196.0 L460.25 196.4 L460.50 196.7 L460.75 197.1 L461.00 197.5 L461.25 197.9 L461.50 198.3 L461.75 198.6 L462.00 199.0 L462.25 199.3 L462.50 199.5 L462.75 199.7 L463.00 199.9 L463.25 200.0 L463.50 200.0 L463.75 200.0 L464.00 200.0 L464.25 200.0 L464.50 200.0 L464.75 200.0 L465.00 200.0 L465.25 199.9 L465.50 199.2 L465.75 198.0 L466.00 196.3 L466.25 194.4 L466.50 192.4 L466.75 190.7 L467.00 189.2 L467.25 188.3 L467.50 188.0 L467.75 188.1 L468.00 188.4 L468.25 188.8 L468.50 189.5 L468.75 190.3 L469.00 191.2 L469.25 192.2 L469.50 193.3 L469.75 194.5 L470.00 195.7 L470.25 196.9 L470.50 198.1 L470.75 199.2 L471.00 200.2 L471.25 201.1 L471.50 201.9 L471.75 202.6 L472.00 203.0 L472.25 203.3 L472.50 203.4 L472.75 202.9 L473.00 200.9 L473.25 197.8 L473.50 194.0 L473.75 190.2 L474.00 187.0 L474.25 184.8 L474.50 184.0 L474.75 184.2 L475.00 184.8 L475.25 185.8 L475.50 186.9 L475.75 188.1 L476.00 189.2 L476.25 190.0 L476.50 190.5 L476.75 190.4 L477.00 187.9 L477.25 184.5 L477.50 183.0 L477.75 183.3 L478.00 184.0 L478.25 185.3 L478.50 187.0 L478.75 189.2 L479.00 191.7 L479.25 194.5 L479.50 197.5 L479.75 200.7 L480.00 204.0 L480.25 207.3 L480.50 210.5 L480.75 213.5 L481.00 216.3 L481.25 218.8 L481.50 221.0 L481.75 222.7 L482.00 224.0 L482.25 224.7 L482.50 225.0 L482.75 225.0 L483.00 225.0 L483.25 225.0 L483.50 225.0 L483.75 225.0 L484.00 225.0 L484.25 225.0 L484.50 225.0 L484.75 225.0 L485.00 225.0 L485.25 225.0 L485.50 225.0 L485.75 225.0 L486.00 225.0 L486.25 224.7 L486.50 223.1 L486.75 220.1 L487.00 216.0 L487.25 211.4 L487.50 206.7 L487.75 202.4 L488.00 199.0 L488.25 196.8 L488.50 196.0 L488.75 196.1 L489.00 196.6 L489.25 197.2 L489.50 198.2 L489.75 199.3 L490.00 200.6 L490.25 202.0 L490.50 203.5 L490.75 205.1 L491.00 206.6 L491.25 208.0 L491.50 209.4 L491.75 210.6 L492.00 211.5 L492.25 212.3 L492.50 212.8 L492.75 213.0 L493.00 212.6 L493.25 210.7 L493.50 207.7 L493.75 204.2 L494.00 201.0 L494.25 198.8 L494.50 198.0 L494.75 198.2 L495.00 198.6 L495.25 199.4 L495.50 200.4 L495.75 201.5 L496.00 202.7 L496.25 203.9 L496.50 204.9 L496.75 205.8 L497.00 206.4 L497.25 206.8 L497.50 206.5 L497.75 204.4 L498.00 201.1 L498.25 198.2 L498.50 197.0 L498.75 197.2 L499.00 197.7 L499.25 198.5 L499.50 199.6 L499.75 201.0 L500.00 202.6 L500.25 204.4 L500.50 206.3 L500.75 208.4 L501.00 210.5 L501.25 212.6 L501.50 214.7 L501.75 216.6 L502.00 218.4 L502.25 220.0 L502.50 221.4 L502.75 222.5 L503.00 223.3 L503.25 223.8 L503.50 224.0 L503.75 224.0 L504.00 224.0 L504.25 224.0 L504.50 224.0 L504.75 224.0 L505.00 224.0 L505.25 224.0 L505.50 224.0 L505.75 224.0 L506.00 224.0 L506.25 224.0 L506.50 224.0 L506.75 224.0 L507.00 224.0 L507.25 223.7 L507.50 221.9 L507.75 218.7 L508.00 214.4 L508.25 209.5 L508.50 204.5 L508.75 199.9 L509.00 196.2 L509.25 193.8 L509.50 193.0 L509.75 193.1 L510.00 193.4 L510.25 194.0 L510.50 194.7 L510.75 195.5 L511.00 196.6 L511.25 197.7 L511.50 198.8 L511.75 200.0 L512.00 201.2 L512.25 202.3 L512.50 203.4 L512.75 204.3 L513.00 205.1 L513.25 205.6 L513.50 206.0 L513.75 206.2 L514.00 205.7 L514.25 203.7 L514.50 200.5 L514.75 196.7 L515.00 193.3 L515.25 190.9 L515.50 190.0 L515.75 190.3 L516.00 191.0 L516.25 192.2 L516.50 193.7 L516.75 195.5 L517.00 197.4 L517.25 199.2 L517.50 200.9 L517.75 202.2 L518.00 203.2 L518.25 203.7 L518.50 203.6 L518.75 201.6 L519.00 198.7 L519.25 196.0 L519.50 195.0 L519.75 195.2 L520.00 195.7 L520.25 196.5 L520.50 197.6 L520.75 199.0 L521.00 200.6 L521.25 202.4 L521.50 204.3 L521.75 206.4 L522.00 208.5 L522.25 210.6 L522.50 212.7 L522.75 214.6 L523.00 216.4 L523.25 218.0 L523.50 219.4 L523.75 220.5 L524.00 221.3 L524.25 221.8 L524.50 222.0 L524.75 222.0 L525.00 222.0 L525.25 222.0 L525.50 222.0 L525.75 222.0 L526.00 222.0 L526.25 221.8 L526.50 220.3 L526.75 217.6 L527.00 214.0 L527.25 209.9 L527.50 205.6 L527.75 201.8 L528.00 198.7 L528.25 196.7 L528.50 196.0 L528.75 196.2 L529.00 196.7 L529.25 197.4 L529.50 198.5 L529.75 199.8 L530.00 201.2 L530.25 202.7 L530.50 204.2 L530.75 205.7 L531.00 207.0 L531.25 208.2 L531.50 209.1 L531.75 209.7 L532.00 210.0 L532.25 209.7 L532.50 207.9 L532.75 205.1 L533.00 202.1 L533.25 199.8 L533.50 199.0 L533.75 199.2 L534.00 199.6 L534.25 200.4 L534.50 201.4 L534.75 202.5 L535.00 203.7 L535.25 204.9 L535.50 205.9 L535.75 206.8 L536.00 207.4 L536.25 207.8 L536.50 207.2 L536.75 202.9 L537.00 196.2 L537.25 190.3 L537.50 188.0 L537.75 188.2 L538.00 188.6 L538.25 189.4 L538.50 190.5 L538.75 191.8 L539.00 193.4 L539.25 195.1 L539.50 197.0 L539.75 199.0 L540.00 201.0 L540.25 203.0 L540.50 205.0 L540.75 206.9 L541.00 208.6 L541.25 210.2 L541.50 211.5 L541.75 212.6 L542.00 213.4 L542.25 213.8 L542.50 214.0 L542.75 214.0 L543.00 214.0 L543.25 214.0 L543.50 214.0 L543.75 214.0 L544.00 214.0 L544.25 214.0 L544.50 214.0 L544.75 214.0 L545.00 214.0 L545.25 214.0 L545.50 214.0 L545.75 214.0 L546.00 214.0 L546.25 214.0 L546.50 214.0 L546.75 214.0 L547.00 214.0 L547.25 213.8 L547.50 212.6 L547.75 210.4 L548.00 207.5 L548.25 204.2 L548.50 200.8 L548.75 197.7 L549.00 195.2 L549.25 193.6 L549.50 193.0 L549.75 193.2 L550.00 193.8 L550.25 194.8 L550.50 195.9 L550.75 197.1 L551.00 198.2 L551.25 199.0 L551.50 199.5 L551.75 199.2 L552.00 194.8 L552.25 188.8 L552.50 186.0 L552.75 186.2 L553.00 186.7 L553.25 187.5 L553.50 188.7 L553.75 190.1 L554.00 191.7 L554.25 193.5 L554.50 195.4 L554.75 197.3 L555.00 199.2 L555.25 201.0 L555.50 202.7 L555.75 204.1 L556.00 205.4 L556.25 206.3 L556.50 206.9 L556.75 207.2 L557.00 206.8 L557.25 205.2 L557.50 202.5 L557.75 199.5 L558.00 196.7 L558.25 194.7 L558.50 194.0 L558.75 194.2 L559.00 194.8 L559.25 195.7 L559.50 197.1 L559.75 198.7 L560.00 200.6 L560.25 202.7 L560.50 205.1 L560.75 207.5 L561.00 210.0 L561.25 212.5 L561.50 214.9 L561.75 217.3 L562.00 219.4 L562.25 221.3 L562.50 222.9 L562.75 224.3 L563.00 225.2 L563.25 225.8 L563.50 226.0 L563.75 226.0 L564.00 226.0 L564.25 226.0 L564.50 226.0 L564.75 226.0 L565.00 226.0 L565.25 226.0 L565.50 226.0 L565.75 226.0 L566.00 226.0 L566.25 225.7 L566.50 223.9 L566.75 220.5 L567.00 216.1 L567.25 211.0 L567.50 205.9 L567.75 201.1 L568.00 197.3 L568.25 194.8 L568.50 194.0 L568.75 194.1 L569.00 194.4 L569.25 195.0 L569.50 195.7 L569.75 196.5 L570.00 197.6 L570.25 198.7 L570.50 199.8 L570.75 201.0 L571.00 202.2 L571.25 203.3 L571.50 204.4 L571.75 205.3 L572.00 206.1 L572.25 206.6 L572.50 207.0 L572.75 207.2 L573.00 206.8 L573.25 205.2 L573.50 202.5 L573.75 199.5 L574.00 196.7 L574.25 194.7 L574.50 194.0 L574.75 194.1 L575.00 194.5 L575.25 195.1 L575.50 196.0 L575.75 197.0 L576.00 198.1 L576.25 199.3 L576.50 200.5 L576.75 201.6 L577.00 202.7 L577.25 203.6 L577.50 204.3 L577.75 204.7 L578.00 205.0 L578.25 204.5 L578.50 201.6 L578.75 197.0 L579.00 192.1 L579.25 188.4 L579.50 187.0 L579.75 187.1 L580.00 187.6 L580.25 188.3 L580.50 189.2 L580.75 190.4 L581.00 191.7 L581.25 193.3 L581.50 194.9 L581.75 196.7 L582.00 198.5 L582.25 200.3 L582.50 202.1 L582.75 203.7 L583.00 205.3 L583.25 206.6 L583.50 207.8 L583.75 208.7 L584.00 209.4 L584.25 209.9 L584.50 210.0 L584.75 210.0 L585.00 210.0 L585.25 210.0 L585.50 210.0 L585.75 210.0 L586.00 210.0 L586.25 209.8 L586.50 208.4 L586.75 205.9 L587.00 202.6 L587.25 198.8 L587.50 194.9 L587.75 191.3 L588.00 188.5 L588.25 186.6 L588.50 186.0 L588.75 186.1 L589.00 186.5 L589.25 187.0 L589.50 187.8 L589.75 188.7 L590.00 189.8 L590.25 190.9 L590.50 192.2 L590.75 193.5 L591.00 194.7 L591.25 195.9 L591.50 197.0 L591.75 198.0 L592.00 198.8 L592.25 199.4 L592.50 199.8 L592.75 200.0 L593.00 199.7 L593.25 198.2 L593.50 195.8 L593.75 193.0 L594.00 190.4 L594.25 188.6 L594.50 188.0 L594.75 188.2 L595.00 188.6 L595.25 189.4 L595.50 190.4 L595.75 191.5 L596.00 192.7 L596.25 193.9 L596.50 194.9 L596.75 195.8 L597.00 196.4 L597.25 196.8 L597.50 196.4 L597.75 192.9 L598.00 187.6 L598.25 182.9 L598.50 181.0 L598.75 181.2 L599.00 181.6 L599.25 182.4 L599.50 183.4 L599.75 184.7 L600.00 186.2 L600.25 187.8 L600.50 189.6 L600.75 191.5 L601.00 193.5 L601.25 195.5 L601.50 197.4 L601.75 199.2 L602.00 200.8 L602.25 202.3 L602.50 203.6 L602.75 204.6 L603.00 205.4 L603.25 205.8 L603.50 206.0 L603.75 206.0 L604.00 206.0 L604.25 206.0 L604.50 206.0 L604.75 206.0 L605.00 206.0 L605.25 206.0 L605.50 206.0 L605.75 206.0 L606.00 206.0 L606.25 205.8 L606.50 204.5 L606.75 202.1 L607.00 198.9 L607.25 195.3 L607.50 191.5 L607.75 188.1 L608.00 185.4 L608.25 183.6 L608.50 183.0 L608.75 183.2 L609.00 183.7 L609.25 184.6 L609.50 185.6 L609.75 186.9 L610.00 188.2 L610.25 189.5 L610.50 190.7 L610.75 191.7 L611.00 192.4 L611.25 192.8 L611.50 192.6 L611.75 190.6 L612.00 187.7 L612.25 185.0 L612.50 184.0 L612.75 184.1 L613.00 184.3 L613.25 184.8 L613.50 185.3 L613.75 186.1 L614.00 186.9 L614.25 187.8 L614.50 188.8 L614.75 189.9 L615.00 191.0 L615.25 192.1 L615.50 193.2 L615.75 194.2 L616.00 195.1 L616.25 195.9 L616.50 196.7 L616.75 197.2 L617.00 197.7 L617.25 197.9 L617.50 198.0 L617.75 197.5 L618.00 195.8 L618.25 193.1 L618.50 189.8 L618.75 186.4 L619.00 183.6 L619.25 181.7 L619.50 181.0 L619.75 181.1 L620.00 181.4 L620.25 182.0 L620.50 182.7 L620.75 183.6 L621.00 184.7 L621.25 185.9 L621.50 187.2 L621.75 188.6 L622.00 190.0 L622.25 191.4 L622.50 192.8 L622.75 194.1 L623.00 195.3 L623.25 196.4 L623.50 197.3 L623.75 198.0 L624.00 198.6 L624.25 198.9 L624.50 199.0 L624.75 199.0 L625.00 199.0 L625.25 199.0 L625.50 199.0 L625.75 199.0 L626.00 199.0 L626.25 198.8 L626.50 197.7 L626.75 195.6 L627.00 192.8 L627.25 189.7 L627.50 186.4 L627.75 183.4 L628.00 181.1 L628.25 179.5 L628.50 179.0 L628.75 179.2 L629.00 179.6 L629.25 180.4 L629.50 181.4 L629.75 182.5 L630.00 183.7 L630.25 184.9 L630.50 185.9 L630.75 186.8 L631.00 187.4 L631.25 187.8 L631.50 187.5 L631.75 184.9 L632.00 180.9 L632.25 177.4 L632.50 176.0 L632.75 176.1 L633.00 176.5 L633.25 177.1 L633.50 178.0 L633.75 179.0 L634.00 180.1 L634.25 181.3 L634.50 182.5 L634.75 183.6 L635.00 184.7 L635.25 185.6 L635.50 186.3 L635.75 186.7 L636.00 187.0 L636.25 186.6 L636.50 184.4 L636.75 180.8 L637.00 177.0 L637.25 174.1 L637.50 173.0 L637.75 173.1 L638.00 173.6 L638.25 174.3 L638.50 175.3 L638.75 176.5 L639.00 177.9 L639.25 179.6 L639.50 181.3 L639.75 183.1 L640.00 185.0 L640.25 186.9 L640.50 188.7 L640.75 190.4 L641.00 192.1 L641.25 193.5 L641.50 194.7 L641.75 195.7 L642.00 196.4 L642.25 196.9 L642.50 197.0 L642.75 197.0 L643.00 197.0 L643.25 197.0 L643.50 197.0 L643.75 197.0 L644.00 197.0 L644.25 197.0 L644.50 197.0 L644.75 197.0 L645.00 197.0 L645.25 197.0 L645.50 197.0 L645.75 197.0 L646.00 197.0 L646.25 196.8 L646.50 195.5 L646.75 193.1 L647.00 189.9 L647.25 186.3 L647.50 182.5 L647.75 179.1 L648.00 176.4 L648.25 174.6 L648.50 174.0 L648.75 174.1 L649.00 174.6 L649.25 175.3 L649.50 176.2 L649.75 177.4 L650.00 178.7 L650.25 180.3 L650.50 181.9 L650.75 183.7 L651.00 185.5 L651.25 187.3 L651.50 189.1 L651.75 190.7 L652.00 192.3 L652.25 193.6 L652.50 194.8 L652.75 195.7 L653.00 196.4 L653.25 196.9 L653.50 197.0 L653.75 197.0 L654.00 197.0 L654.25 197.0 L654.50 197.0 L654.75 197.0 L655.00 197.0 L655.25 196.8 L655.50 195.9 L655.75 194.3 L656.00 192.1 L656.25 189.5 L656.50 186.9 L656.75 184.6 L657.00 182.7 L657.25 181.4 L657.50 181.0 L657.75 181.2 L658.00 181.6 L658.25 182.4 L658.50 183.4 L658.75 184.7 L659.00 186.2 L659.25 187.8 L659.50 189.6 L659.75 191.5 L660.00 193.5 L660.25 195.5 L660.50 197.4 L660.75 199.2 L661.00 200.8 L661.25 202.3 L661.50 203.6 L661.75 204.6 L662.00 205.4 L662.25 205.8 L662.50 206.0 L662.75 206.0 L663.00 206.0 L663.25 206.0 L663.50 206.0 L663.75 206.0 L664.00 206.0 L664.25 206.0 L664.50 206.0 L664.75 206.0 L665.00 206.0 L665.25 206.0 L665.50 206.0 L665.75 206.0 L666.00 206.0 L666.25 205.8 L666.50 204.7 L666.75 202.6 L667.00 199.8 L667.25 196.7 L667.50 193.4 L667.75 190.4 L668.00 188.1 L668.25 186.5 L668.50 186.0 L668.75 186.2 L669.00 186.6 L669.25 187.3 L669.50 188.3 L669.75 189.5 L670.00 190.8 L670.25 192.2 L670.50 193.6 L670.75 195.0 L671.00 196.2 L671.25 197.3 L671.50 198.1 L671.75 198.7 L672.00 199.0 L672.25 198.7 L672.50 196.9 L672.75 194.1 L673.00 191.1 L673.25 188.8 L673.50 188.0 L673.75 188.2 L674.00 188.6 L674.25 189.4 L674.50 190.4 L674.75 191.5 L675.00 192.7 L675.25 193.9 L675.50 194.9 L675.75 195.8 L676.00 196.4 L676.25 196.8 L676.50 196.4 L676.75 193.7 L677.00 189.3 L677.25 185.5 L677.50 184.0 L677.75 184.1 L678.00 184.5 L678.25 185.1 L678.50 185.9 L678.75 186.9 L679.00 188.1 L679.25 189.5 L679.50 190.9 L679.75 192.4 L680.00 194.0 L680.25 195.6 L680.50 197.1 L680.75 198.5 L681.00 199.9 L681.25 201.1 L681.50 202.1 L681.75 202.9 L682.00 203.5 L682.25 203.9 L682.50 204.0 L682.75 204.0 L683.00 204.0 L683.25 204.0 L683.50 204.0 L683.75 204.0 L684.00 204.0 L684.25 204.0 L684.50 204.0 L684.75 204.0 L685.00 204.0 L685.25 203.8 L685.50 202.7 L685.75 200.6 L686.00 197.8 L686.25 194.7 L686.50 191.4 L686.75 188.4 L687.00 186.1 L687.25 184.5 L687.50 184.0 L687.75 184.4 L688.00 185.5 L688.25 186.9 L688.50 188.2 L688.75 189.2 L689.00 189.3 L689.25 186.8 L689.50 185.0 L689.75 185.1 L690.00 185.4 L690.25 185.9 L690.50 186.6 L690.75 187.5 L691.00 188.5 L691.25 189.6 L691.50 190.9 L691.75 192.2 L692.00 193.5 L692.25 194.8 L692.50 196.1 L692.75 197.4 L693.00 198.5 L693.25 199.5 L693.50 200.4 L693.75 201.1 L694.00 201.6 L694.25 201.9 L694.50 202.0 L694.75 202.0 L695.00 202.0 L695.25 202.0 L695.50 201.6 L695.75 200.2 L696.00 198.1 L696.25 195.5 L696.50 192.7 L696.75 190.0 L697.00 187.9 L697.25 186.5 L697.50 186.0 L697.75 186.1 L698.00 186.4 L698.25 187.0 L698.50 187.7 L698.75 188.6 L699.00 189.7 L699.25 190.9 L699.50 192.2 L699.75 193.6 L700.00 195.0 L700.25 196.4 L700.50 197.8 L700.75 199.1 L701.00 200.3 L701.25 201.4 L701.50 202.3 L701.75 203.0 L702.00 203.6 L702.25 203.9 L702.50 204.0 L702.75 204.0 L703.00 204.0 L703.25 204.0 L703.50 204.0 L703.75 204.0 L704.00 204.0 L704.25 204.0 L704.50 204.0 L704.75 204.0 L705.00 204.0 L705.25 203.8 L705.50 202.4 L705.75 199.9 L706.00 196.6 L706.25 192.8 L706.50 188.9 L706.75 185.3 L707.00 182.5 L707.25 180.6 L707.50 180.0 L707.75 180.3 L708.00 181.3 L708.25 182.9 L708.50 184.7 L708.75 186.6 L709.00 188.3 L709.25 189.7 L709.50 190.5 L709.75 190.4 L710.00 188.3 L710.25 185.3 L710.50 184.0 L710.75 184.1 L711.00 184.4 L711.25 184.8 L711.50 185.4 L711.75 186.1 L712.00 187.0 L712.25 187.9 L712.50 188.9 L712.75 189.9 L713.00 190.8 L713.25 191.8 L713.50 192.7 L713.75 193.4 L714.00 194.1 L714.25 194.5 L714.50 194.9 L714.75 195.0 L715.00 194.3 L715.25 191.2 L715.50 186.2 L715.75 180.4 L716.00 175.1 L716.25 171.3 L716.50 170.0 L716.75 170.2 L717.00 171.0 L717.25 172.2 L717.50 173.8 L717.75 175.9 L718.00 178.2 L718.25 180.9 L718.50 183.8 L718.75 186.9 L719.00 190.0 L719.25 193.1 L719.50 196.2 L719.75 199.1 L720.00 201.8 L720.25 204.1 L720.50 206.2 L720.75 207.8 L721.00 209.0 L721.25 209.8 L721.50 210.0 L721.75 210.0 L722.00 210.0 L722.25 210.0 L722.50 210.0 L722.75 210.0 L723.00 210.0 L723.25 210.0 L723.50 210.0 L723.75 210.0 L724.00 210.0 L724.25 210.0 L724.50 210.0 L724.75 210.0 L725.00 210.0 L725.25 210.0 L725.50 210.0 L725.75 210.0 L726.00 210.0 L726.25 209.7 L726.50 207.9 L726.75 204.5 L727.00 200.1 L727.25 195.0 L727.50 189.9 L727.75 185.1 L728.00 181.3 L728.25 178.8 L728.50 178.0 L728.75 178.2 L729.00 178.7 L729.25 179.5 L729.50 180.6 L729.75 182.0 L730.00 183.6 L730.25 185.4 L730.50 187.3 L730.75 189.4 L731.00 191.5 L731.25 193.6 L731.50 195.7 L731.75 197.6 L732.00 199.4 L732.25 201.0 L732.50 202.4 L732.75 203.5 L733.00 204.3 L733.25 204.8 L733.50 205.0 L733.75 205.0 L734.00 205.0 L734.25 205.0 L734.50 204.4 L734.75 202.4 L735.00 199.3 L735.25 195.6 L735.50 191.6 L735.75 187.8 L736.00 184.7 L736.25 182.7 L736.50 182.0 L736.75 182.2 L737.00 182.7 L737.25 183.5 L737.50 184.7 L737.75 186.1 L738.00 187.8 L738.25 189.6 L738.50 191.7 L738.75 193.8 L739.00 196.0 L739.25 198.2 L739.50 200.3 L739.75 202.4 L740.00 204.2 L740.25 205.9 L740.50 207.3 L740.75 208.5 L741.00 209.3 L741.25 209.8 L741.50 210.0 L741.75 210.0 L742.00 210.0 L742.25 210.0 L742.50 210.0 L742.75 210.0 L743.00 210.0 L743.25 210.0 L743.50 210.0 L743.75 210.0 L744.00 210.0 L744.25 209.7 L744.50 208.1 L744.75 205.2 L745.00 201.4 L745.25 196.9 L745.50 192.4 L745.75 188.2 L746.00 184.9 L746.25 182.7 L746.50 182.0 L746.75 182.2 L747.00 182.8 L747.25 183.9 L747.50 185.2 L747.75 187.0 L748.00 189.0 L748.25 191.3 L748.50 193.7 L748.75 196.3 L749.00 199.0 L749.25 201.7 L749.50 204.3 L749.75 206.7 L750.00 209.0 L750.25 211.0 L750.50 212.8 L750.75 214.1 L751.00 215.2 L751.25 215.8 L751.50 216.0 L751.75 216.0 L752.00 216.0 L752.25 216.0 L752.50 216.0 L752.75 216.0 L753.00 216.0 L753.25 216.0 L753.50 216.0 L753.75 216.0 L754.00 216.0 L754.25 216.0 L754.50 216.0 L754.75 216.0 L755.00 216.0 L755.25 215.8 L755.50 214.5 L755.75 212.1 L756.00 208.9 L756.25 205.3 L756.50 201.5 L756.75 198.1 L757.00 195.4 L757.25 193.6 L757.50 193.0 L757.75 193.1 L758.00 193.3 L758.25 193.7 L758.50 194.2 L758.75 194.9 L759.00 195.7 L759.25 196.5 L759.50 197.5 L759.75 198.5 L760.00 199.5 L760.25 200.5 L760.50 201.5 L760.75 202.5 L761.00 203.3 L761.25 204.1 L761.50 204.8 L761.75 205.3 L762.00 205.7 L762.25 205.9 L762.50 206.0 L762.75 206.0 L763.00 206.0 L763.25 206.0 L763.50 205.4 L763.75 203.4 L764.00 200.3 L764.25 196.6 L764.50 192.6 L764.75 188.8 L765.00 185.7 L765.25 183.7 L765.50 183.0 L765.75 183.2 L766.00 183.6 L766.25 184.4 L766.50 185.4 L766.75 186.7 L767.00 188.2 L767.25 189.8 L767.50 191.6 L767.75 193.5 L768.00 195.5 L768.25 197.5 L768.50 199.4 L768.75 201.2 L769.00 202.8 L769.25 204.3 L769.50 205.6 L769.75 206.6 L770.00 207.4 L770.25 207.8 L770.50 208.0 L770.75 208.0 L771.00 208.0 L771.25 208.0 L771.50 208.0 L771.75 208.0 L772.00 208.0 L772.25 208.0 L772.50 208.0 L772.75 208.0 L773.00 208.0 L773.25 208.0 L773.50 208.0 L773.75 208.0 L774.00 208.0 L774.25 207.8 L774.50 206.5 L774.75 204.3 L775.00 201.2 L775.25 197.7 L775.50 194.2 L775.75 190.9 L776.00 188.3 L776.25 186.6 L776.50 186.0 L776.75 186.1 L777.00 186.6 L777.25 187.3 L777.50 188.3 L777.75 189.5 L778.00 190.9 L778.25 192.6 L778.50 194.3 L778.75 196.1 L779.00 198.0 L779.25 199.9 L779.50 201.7 L779.75 203.4 L780.00 205.1 L780.25 206.5 L780.50 207.7 L780.75 208.7 L781.00 209.4 L781.25 209.9 L781.50 210.0 L781.75 210.0 L782.00 210.0 L782.25 210.0 L782.50 210.0 L782.75 210.0 L783.00 210.0 L783.25 209.8 L783.50 208.6 L783.75 206.4 L784.00 203.5 L784.25 200.2 L784.50 196.8 L784.75 193.7 L785.00 191.2 L785.25 189.6 L785.50 189.0 L785.75 189.1 L786.00 189.5 L786.25 190.1 L786.50 191.0 L786.75 192.0 L787.00 193.1 L787.25 194.3 L787.50 195.5 L787.75 196.6 L788.00 197.7 L788.25 198.6 L788.50 199.3 L788.75 199.7 L789.00 200.0 L789.25 199.6 L789.50 197.0 L789.75 192.9 L790.00 188.5 L790.25 185.2 L790.50 184.0 L790.75 184.1 L791.00 184.5 L791.25 185.1 L791.50 185.9 L791.75 186.9 L792.00 188.1 L792.25 189.5 L792.50 190.9 L792.75 192.4 L793.00 194.0 L793.25 195.6 L793.50 197.1 L793.75 198.5 L794.00 199.9 L794.25 201.1 L794.50 202.1 L794.75 202.9 L795.00 203.5 L795.25 203.9 L795.50 204.0 L795.75 203.8 L796.00 203.0 L796.25 201.7 L796.50 200.1 L796.75 198.6 L797.00 197.2 L797.25 196.3 L797.50 196.0 L797.75 196.1 L798.00 196.4 L798.25 196.8 L798.50 197.5 L798.75 198.3 L799.00 199.2 L799.25 200.2 L799.50 201.3 L799.75 202.5 L800.00 203.7 L800.25 204.9 L800.50 206.1 L800.75 207.2 L801.00 208.2 L801.25 209.1 L801.50 209.9 L801.75 210.6 L802.00 211.0 L802.25 211.3 L802.50 211.4 L802.75 210.8 L803.00 208.6 L803.25 205.2 L803.50 201.0 L803.75 196.8 L804.00 193.3 L804.25 190.8 L804.50 190.0" fill="none" stroke="#ffff00" stroke-width="1.5" stroke-dasharray="3.5 2.5" shape-rendering="geometricPrecision"/>
<g fill="#808080">
<rect x="95" y="198" width="1" height="55"/>
<rect x="94" y="201" width="3" height="49"/>
<rect x="93" y="214" width="5" height="22"/>
<rect x="101" y="190" width="1" height="55"/>
<rect x="100" y="193" width="3" height="49"/>
<rect x="99" y="206" width="5" height="22"/>
<rect x="106" y="202" width="1" height="55"/>
<rect x="105" y="205" width="3" height="49"/>
<rect x="104" y="218" width="5" height="22"/>
<rect x="111" y="203" width="1" height="55"/>
<rect x="110" y="206" width="3" height="49"/>
<rect x="109" y="219" width="5" height="22"/>
<rect x="117" y="193" width="1" height="55"/>
<rect x="116" y="196" width="3" height="49"/>
<rect x="115" y="209" width="5" height="22"/>
<rect x="126" y="190" width="1" height="55"/>
<rect x="125" y="193" width="3" height="49"/>
<rect x="124" y="206" width="5" height="22"/>
<rect x="137" y="187" width="1" height="55"/>
<rect x="136" y="190" width="3" height="49"/>
<rect x="135" y="203" width="5" height="22"/>
<rect x="145" y="179" width="1" height="55"/>
<rect x="144" y="182" width="3" height="49"/>
<rect x="143" y="195" width="5" height="22"/>
<rect x="157" y="180" width="1" height="55"/>
<rect x="156" y="183" width="3" height="49"/>
<rect x="155" y="196" width="5" height="22"/>
<rect x="161" y="185" width="1" height="55"/>
<rect x="160" y="188" width="3" height="49"/>
<rect x="159" y="201" width="5" height="22"/>
<rect x="167" y="179" width="1" height="55"/>
<rect x="166" y="182" width="3" height="49"/>
<rect x="165" y="195" width="5" height="22"/>
<rect x="178" y="175" width="1" height="55"/>
<rect x="177" y="178" width="3" height="49"/>
<rect x="176" y="191" width="5" height="22"/>
<rect x="184" y="188" width="1" height="55"/>
<rect x="183" y="191" width="3" height="49"/>
<rect x="182" y="204" width="5" height="22"/>
<rect x="187" y="189" width="1" height="55"/>
<rect x="186" y="192" width="3" height="49"/>
<rect x="185" y="205" width="5" height="22"/>
<rect x="199" y="183" width="1" height="55"/>
<rect x="198" y="186" width="3" height="49"/>
<rect x="197" y="199" width="5" height="22"/>
<rect x="208" y="188" width="1" height="55"/>
<rect x="207" y="191" width="3" height="49"/>
<rect x="206" y="204" width="5" height="22"/>
<rect x="216" y="190" width="1" height="55"/>
<rect x="215" y="193" width="3" height="49"/>
<rect x="214" y="206" width="5" height="22"/>
<rect x="221" y="190" width="1" height="55"/>
<rect x="220" y="193" width="3" height="49"/>
<rect x="219" y="206" width="5" height="22"/>
<rect x="227" y="188" width="1" height="55"/>
<rect x="226" y="191" width="3" height="49"/>
<rect x="225" y="204" width="5" height="22"/>
<rect x="238" y="173" width="1" height="55"/>
<rect x="237" y="176" width="3" height="49"/>
<rect x="236" y="189" width="5" height="22"/>
<rect x="248" y="193" width="1" height="55"/>
<rect x="247" y="196" width="3" height="49"/>
<rect x="246" y="209" width="5" height="22"/>
<rect x="259" y="192" width="1" height="55"/>
<rect x="258" y="195" width="3" height="49"/>
<rect x="257" y="208" width="5" height="22"/>
<rect x="268" y="202" width="1" height="55"/>
<rect x="267" y="205" width="3" height="49"/>
<rect x="266" y="218" width="5" height="22"/>
<rect x="278" y="199" width="1" height="55"/>
<rect x="277" y="202" width="3" height="49"/>
<rect x="276" y="215" width="5" height="22"/>
<rect x="281" y="200" width="1" height="55"/>
<rect x="280" y="203" width="3" height="49"/>
<rect x="279" y="216" width="5" height="22"/>
<rect x="287" y="198" width="1" height="55"/>
<rect x="286" y="201" width="3" height="49"/>
<rect x="285" y="214" width="5" height="22"/>
<rect x="298" y="183" width="1" height="55"/>
<rect x="297" y="186" width="3" height="49"/>
<rect x="296" y="199" width="5" height="22"/>
<rect x="309" y="201" width="1" height="55"/>
<rect x="308" y="204" width="3" height="49"/>
<rect x="307" y="217" width="5" height="22"/>
<rect x="318" y="191" width="1" height="55"/>
<rect x="317" y="194" width="3" height="49"/>
<rect x="316" y="207" width="5" height="22"/>
<rect x="329" y="199" width="1" height="55"/>
<rect x="328" y="202" width="3" height="49"/>
<rect x="327" y="215" width="5" height="22"/>
<rect x="337" y="194" width="1" height="55"/>
<rect x="336" y="197" width="3" height="49"/>
<rect x="335" y="210" width="5" height="22"/>
<rect x="347" y="200" width="1" height="55"/>
<rect x="346" y="203" width="3" height="49"/>
<rect x="345" y="216" width="5" height="22"/>
<rect x="357" y="182" width="1" height="55"/>
<rect x="356" y="185" width="3" height="49"/>
<rect x="355" y="198" width="5" height="22"/>
<rect x="368" y="192" width="1" height="55"/>
<rect x="367" y="195" width="3" height="49"/>
<rect x="366" y="208" width="5" height="22"/>
<rect x="376" y="194" width="1" height="55"/>
<rect x="375" y="197" width="3" height="49"/>
<rect x="374" y="210" width="5" height="22"/>
<rect x="388" y="200" width="1" height="55"/>
<rect x="387" y="203" width="3" height="49"/>
<rect x="386" y="216" width="5" height="22"/>
<rect x="397" y="190" width="1" height="55"/>
<rect x="396" y="193" width="3" height="49"/>
<rect x="395" y="206" width="5" height="22"/>
<rect x="407" y="192" width="1" height="55"/>
<rect x="406" y="195" width="3" height="49"/>
<rect x="405" y="208" width="5" height="22"/>
<rect x="417" y="176" width="1" height="55"/>
<rect x="416" y="179" width="3" height="49"/>
<rect x="415" y="192" width="5" height="22"/>
<rect x="428" y="201" width="1" height="55"/>
<rect x="427" y="204" width="3" height="49"/>
<rect x="426" y="217" width="5" height="22"/>
<rect x="436" y="196" width="1" height="55"/>
<rect x="435" y="199" width="3" height="49"/>
<rect x="434" y="212" width="5" height="22"/>
<rect x="446" y="198" width="1" height="55"/>
<rect x="445" y="201" width="3" height="49"/>
<rect x="444" y="214" width="5" height="22"/>
<rect x="452" y="202" width="1" height="55"/>
<rect x="451" y="205" width="3" height="49"/>
<rect x="450" y="218" width="5" height="22"/>
<rect x="458" y="195" width="1" height="55"/>
<rect x="457" y="198" width="3" height="49"/>
<rect x="456" y="211" width="5" height="22"/>
<rect x="467" y="188" width="1" height="55"/>
<rect x="466" y="191" width="3" height="49"/>
<rect x="465" y="204" width="5" height="22"/>
<rect x="474" y="184" width="1" height="55"/>
<rect x="473" y="187" width="3" height="49"/>
<rect x="472" y="200" width="5" height="22"/>
<rect x="477" y="183" width="1" height="55"/>
<rect x="476" y="186" width="3" height="49"/>
<rect x="475" y="199" width="5" height="22"/>
<rect x="488" y="196" width="1" height="55"/>
<rect x="487" y="199" width="3" height="49"/>
<rect x="486" y="212" width="5" height="22"/>
<rect x="494" y="198" width="1" height="55"/>
<rect x="493" y="201" width="3" height="49"/>
<rect x="492" y="214" width="5" height="22"/>
<rect x="498" y="197" width="1" height="55"/>
<rect x="497" y="200" width="3" height="49"/>
<rect x="496" y="213" width="5" height="22"/>
<rect x="509" y="193" width="1" height="55"/>
<rect x="508" y="196" width="3" height="49"/>
<rect x="507" y="209" width="5" height="22"/>
<rect x="515" y="190" width="1" height="55"/>
<rect x="514" y="193" width="3" height="49"/>
<rect x="513" y="206" width="5" height="22"/>
<rect x="519" y="195" width="1" height="55"/>
<rect x="518" y="198" width="3" height="49"/>
<rect x="517" y="211" width="5" height="22"/>
<rect x="528" y="196" width="1" height="55"/>
<rect x="527" y="199" width="3" height="49"/>
<rect x="526" y="212" width="5" height="22"/>
<rect x="533" y="199" width="1" height="55"/>
<rect x="532" y="202" width="3" height="49"/>
<rect x="531" y="215" width="5" height="22"/>
<rect x="537" y="188" width="1" height="55"/>
<rect x="536" y="191" width="3" height="49"/>
<rect x="535" y="204" width="5" height="22"/>
<rect x="549" y="193" width="1" height="55"/>
<rect x="548" y="196" width="3" height="49"/>
<rect x="547" y="209" width="5" height="22"/>
<rect x="552" y="186" width="1" height="55"/>
<rect x="551" y="189" width="3" height="49"/>
<rect x="550" y="202" width="5" height="22"/>
<rect x="558" y="194" width="1" height="55"/>
<rect x="557" y="197" width="3" height="49"/>
<rect x="556" y="210" width="5" height="22"/>
<rect x="568" y="194" width="1" height="55"/>
<rect x="567" y="197" width="3" height="49"/>
<rect x="566" y="210" width="5" height="22"/>
<rect x="574" y="194" width="1" height="55"/>
<rect x="573" y="197" width="3" height="49"/>
<rect x="572" y="210" width="5" height="22"/>
<rect x="579" y="187" width="1" height="55"/>
<rect x="578" y="190" width="3" height="49"/>
<rect x="577" y="203" width="5" height="22"/>
<rect x="588" y="186" width="1" height="55"/>
<rect x="587" y="189" width="3" height="49"/>
<rect x="586" y="202" width="5" height="22"/>
<rect x="594" y="188" width="1" height="55"/>
<rect x="593" y="191" width="3" height="49"/>
<rect x="592" y="204" width="5" height="22"/>
<rect x="598" y="181" width="1" height="55"/>
<rect x="597" y="184" width="3" height="49"/>
<rect x="596" y="197" width="5" height="22"/>
<rect x="608" y="183" width="1" height="55"/>
<rect x="607" y="186" width="3" height="49"/>
<rect x="606" y="199" width="5" height="22"/>
<rect x="612" y="184" width="1" height="55"/>
<rect x="611" y="187" width="3" height="49"/>
<rect x="610" y="200" width="5" height="22"/>
<rect x="619" y="181" width="1" height="55"/>
<rect x="618" y="184" width="3" height="49"/>
<rect x="617" y="197" width="5" height="22"/>
<rect x="628" y="179" width="1" height="55"/>
<rect x="627" y="182" width="3" height="49"/>
<rect x="626" y="195" width="5" height="22"/>
<rect x="632" y="176" width="1" height="55"/>
<rect x="631" y="179" width="3" height="49"/>
<rect x="630" y="192" width="5" height="22"/>
<rect x="637" y="173" width="1" height="55"/>
<rect x="636" y="176" width="3" height="49"/>
<rect x="635" y="189" width="5" height="22"/>
<rect x="648" y="174" width="1" height="55"/>
<rect x="647" y="177" width="3" height="49"/>
<rect x="646" y="190" width="5" height="22"/>
<rect x="657" y="181" width="1" height="55"/>
<rect x="656" y="184" width="3" height="49"/>
<rect x="655" y="197" width="5" height="22"/>
<rect x="668" y="186" width="1" height="55"/>
<rect x="667" y="189" width="3" height="49"/>
<rect x="666" y="202" width="5" height="22"/>
<rect x="673" y="188" width="1" height="55"/>
<rect x="672" y="191" width="3" height="49"/>
<rect x="671" y="204" width="5" height="22"/>
<rect x="677" y="184" width="1" height="55"/>
<rect x="676" y="187" width="3" height="49"/>
<rect x="675" y="200" width="5" height="22"/>
<rect x="687" y="184" width="1" height="55"/>
<rect x="686" y="187" width="3" height="49"/>
<rect x="685" y="200" width="5" height="22"/>
<rect x="689" y="185" width="1" height="55"/>
<rect x="688" y="188" width="3" height="49"/>
<rect x="687" y="201" width="5" height="22"/>
<rect x="697" y="186" width="1" height="55"/>
<rect x="696" y="189" width="3" height="49"/>
<rect x="695" y="202" width="5" height="22"/>
<rect x="707" y="180" width="1" height="55"/>
<rect x="706" y="183" width="3" height="49"/>
<rect x="705" y="196" width="5" height="22"/>
<rect x="710" y="184" width="1" height="55"/>
<rect x="709" y="187" width="3" height="49"/>
<rect x="708" y="200" width="5" height="22"/>
<rect x="716" y="170" width="1" height="55"/>
<rect x="715" y="173" width="3" height="49"/>
<rect x="714" y="186" width="5" height="22"/>
<rect x="728" y="178" width="1" height="55"/>
<rect x="727" y="181" width="3" height="49"/>
<rect x="726" y="194" width="5" height="22"/>
<rect x="736" y="182" width="1" height="55"/>
<rect x="735" y="185" width="3" height="49"/>
<rect x="734" y="198" width="5" height="22"/>
<rect x="746" y="182" width="1" height="55"/>
<rect x="745" y="185" width="3" height="49"/>
<rect x="744" y="198" width="5" height="22"/>
<rect x="757" y="193" width="1" height="55"/>
<rect x="756" y="196" width="3" height="49"/>
<rect x="755" y="209" width="5" height="22"/>
<rect x="765" y="183" width="1" height="55"/>
<rect x="764" y="186" width="3" height="49"/>
<rect x="763" y="199" width="5" height="22"/>
<rect x="776" y="186" width="1" height="55"/>
<rect x="775" y="189" width="3" height="49"/>
<rect x="774" y="202" width="5" height="22"/>
<rect x="785" y="189" width="1" height="55"/>
<rect x="784" y="192" width="3" height="49"/>
<rect x="783" y="205" width="5" height="22"/>
<rect x="790" y="184" width="1" height="55"/>
<rect x="789" y="187" width="3" height="49"/>
<rect x="788" y="200" width="5" height="22"/>
<rect x="797" y="196" width="1" height="55"/>
<rect x="796" y="199" width="3" height="49"/>
<rect x="795" y="212" width="5" height="22"/>
<rect x="804" y="190" width="1" height="55"/>
<rect x="803" y="193" width="3" height="49"/>
<rect x="802" y="206" width="5" height="22"/>
</g>
<rect x="806" y="150" width="10" height="120" fill="#000"/>
<rect x="805" y="92" width="1" height="232" fill="#c8c8c8"/>
<rect x="90" y="92" width="1" height="232" fill="#c8c8c8"/>
<rect x="92" y="94" width="2" height="229" fill="#ffffff"/>
<rect x="90" y="323" width="716" height="1" fill="#d8d8d8"/>
<rect x="92" y="318" width="1" height="10" fill="#d8d8d8"/>
<rect x="160" y="318" width="1" height="10" fill="#d8d8d8"/>
<rect x="228" y="318" width="1" height="10" fill="#d8d8d8"/>
<rect x="296" y="318" width="1" height="10" fill="#d8d8d8"/>
<rect x="364" y="318" width="1" height="10" fill="#d8d8d8"/>
<rect x="432" y="318" width="1" height="10" fill="#d8d8d8"/>
<rect x="500" y="318" width="1" height="10" fill="#d8d8d8"/>
<rect x="568" y="318" width="1" height="10" fill="#d8d8d8"/>
<rect x="637" y="318" width="1" height="10" fill="#d8d8d8"/>
<rect x="705" y="318" width="1" height="10" fill="#d8d8d8"/>
<rect x="773" y="318" width="1" height="10" fill="#d8d8d8"/>
<rect x="126" y="320" width="1" height="6" fill="#d8d8d8"/>
<rect x="194" y="320" width="1" height="6" fill="#d8d8d8"/>
<rect x="262" y="320" width="1" height="6" fill="#d8d8d8"/>
<rect x="330" y="320" width="1" height="6" fill="#d8d8d8"/>
<rect x="398" y="320" width="1" height="6" fill="#d8d8d8"/>
<rect x="466" y="320" width="1" height="6" fill="#d8d8d8"/>
<rect x="534" y="320" width="1" height="6" fill="#d8d8d8"/>
<rect x="603" y="320" width="1" height="6" fill="#d8d8d8"/>
<rect x="671" y="320" width="1" height="6" fill="#d8d8d8"/>
<rect x="739" y="320" width="1" height="6" fill="#d8d8d8"/>
</svg>
<div class="a" style="left:0;width:84px;text-align:right;top:85.7px;color:#e0e0e0;font-size:12px">0 mm</div>
<div class="a" style="left:0;width:84px;text-align:right;top:113.8px;color:#e0e0e0;font-size:12px">5 mm</div>
<div class="a" style="left:0;width:84px;text-align:right;top:141.9px;color:#e0e0e0;font-size:12px">10 mm</div>
<div class="a" style="left:0;width:84px;text-align:right;top:170.1px;color:#e0e0e0;font-size:12px">15 mm</div>
<div class="a" style="left:0;width:84px;text-align:right;top:198.2px;color:#e0e0e0;font-size:12px">20 mm</div>
<div class="a" style="left:0;width:84px;text-align:right;top:226.3px;color:#e0e0e0;font-size:12px">25 mm</div>
<div class="a" style="left:0;width:84px;text-align:right;top:254.4px;color:#e0e0e0;font-size:12px">30 mm</div>
<div class="a" style="left:0;width:84px;text-align:right;top:282.6px;color:#e0e0e0;font-size:12px">35 mm</div>
<div class="a" style="left:0;width:84px;text-align:right;top:310.7px;color:#e0e0e0;font-size:12px">40 mm</div>
<div class="a" style="left:62.3px;width:60px;text-align:center;top:328px;color:#e0e0e0;font-size:12px">0 m</div>
<div class="a" style="left:130.4px;width:60px;text-align:center;top:328px;color:#e0e0e0;font-size:12px">1 m</div>
<div class="a" style="left:198.5px;width:60px;text-align:center;top:328px;color:#e0e0e0;font-size:12px">2 m</div>
<div class="a" style="left:266.6px;width:60px;text-align:center;top:328px;color:#e0e0e0;font-size:12px">3 m</div>
<div class="a" style="left:334.7px;width:60px;text-align:center;top:328px;color:#e0e0e0;font-size:12px">4 m</div>
<div class="a" style="left:402.8px;width:60px;text-align:center;top:328px;color:#e0e0e0;font-size:12px">5 m</div>
<div class="a" style="left:470.9px;width:60px;text-align:center;top:328px;color:#e0e0e0;font-size:12px">6 m</div>
<div class="a" style="left:539.0px;width:60px;text-align:center;top:328px;color:#e0e0e0;font-size:12px">7 m</div>
<div class="a" style="left:607.1px;width:60px;text-align:center;top:328px;color:#e0e0e0;font-size:12px">8 m</div>
<div class="a" style="left:675.2px;width:60px;text-align:center;top:328px;color:#e0e0e0;font-size:12px">9 m</div>
<div class="a" style="left:743.3px;width:60px;text-align:center;top:328px;color:#e0e0e0;font-size:12px">10 m</div>
<div class="a" style="left:41px;top:358px;width:348px;height:239px;background:#fff;border:1px solid #a8a8a8;border-bottom:none"></div>
<div class="a" style="left:42px;top:359px;width:345px;height:238px;overflow:hidden">
<div class="tb" style="left:-0.5px;top:9.5px;font-weight:bold;letter-spacing:-0.2px">stanz(m)</div>
<div class="tb" style="left:53.8px;top:9.5px;font-weight:bold;letter-spacing:-0.2px">Deckung(mm) ]</div>
<div class="tb" style="left:53.7px;top:27.6px;letter-spacing:-0.45px">[1.914</div>
<div class="tb" style="left:54.0px;width:60px;text-align:right;top:27.6px;letter-spacing:-0.45px">17.4]</div>
<div class="tb" style="left:125.7px;top:27.6px;letter-spacing:-0.45px">[4.498</div>
<div class="tb" style="left:126.0px;width:60px;text-align:right;top:27.6px;letter-spacing:-0.45px">17.4]</div>
<div class="tb" style="left:197.7px;top:27.6px;letter-spacing:-0.45px">[6.552</div>
<div class="tb" style="left:198.0px;width:60px;text-align:right;top:27.6px;letter-spacing:-0.45px">17.1]</div>
<div class="tb" style="left:269.7px;top:27.6px;letter-spacing:-0.45px">[8.545</div>
<div class="tb" style="left:270.0px;width:60px;text-align:right;top:27.6px;letter-spacing:-0.45px">17.0]</div>
<div class="tb" style="left:-0.2px;top:42.5px;letter-spacing:-0.45px">003</div>
<div class="tb" style="left:0px;width:41.8px;text-align:right;top:42.5px;letter-spacing:-0.45px">2.7]</div>
<div class="tb" style="left:53.7px;top:42.5px;letter-spacing:-0.45px">[2.008</div>
<div class="tb" style="left:54.0px;width:60px;text-align:right;top:42.5px;letter-spacing:-0.45px">17.0]</div>
<div class="tb" style="left:125.7px;top:42.5px;letter-spacing:-0.45px">[4.638</div>
<div class="tb" style="left:126.0px;width:60px;text-align:right;top:42.5px;letter-spacing:-0.45px">17.7]</div>
<div class="tb" style="left:197.7px;top:42.5px;letter-spacing:-0.45px">[6.735</div>
<div class="tb" style="left:198.0px;width:60px;text-align:right;top:42.5px;letter-spacing:-0.45px">18.0]</div>
<div class="tb" style="left:269.7px;top:42.5px;letter-spacing:-0.45px">[8.615</div>
<div class="tb" style="left:270.0px;width:60px;text-align:right;top:42.5px;letter-spacing:-0.45px">16.4]</div>
<div class="tb" style="left:-0.2px;top:57.4px;letter-spacing:-0.45px">61</div>
<div class="tb" style="left:0px;width:41.8px;text-align:right;top:57.4px;letter-spacing:-0.45px">18.9]</div>
<div class="tb" style="left:53.7px;top:57.4px;letter-spacing:-0.45px">[2.164</div>
<div class="tb" style="left:54.0px;width:60px;text-align:right;top:57.4px;letter-spacing:-0.45px">14.4]</div>
<div class="tb" style="left:125.7px;top:57.4px;letter-spacing:-0.45px">[4.793</div>
<div class="tb" style="left:126.0px;width:60px;text-align:right;top:57.4px;letter-spacing:-0.45px">14.9]</div>
<div class="tb" style="left:197.7px;top:57.4px;letter-spacing:-0.45px">[6.780</div>
<div class="tb" style="left:198.0px;width:60px;text-align:right;top:57.4px;letter-spacing:-0.45px">16.8]</div>
<div class="tb" style="left:269.7px;top:57.4px;letter-spacing:-0.45px">[8.752</div>
<div class="tb" style="left:270.0px;width:60px;text-align:right;top:57.4px;letter-spacing:-0.45px">16.3]</div>
<div class="tb" style="left:-0.2px;top:72.3px;letter-spacing:-0.45px">46</div>
<div class="tb" style="left:0px;width:41.8px;text-align:right;top:72.3px;letter-spacing:-0.45px">17.4]</div>
<div class="tb" style="left:53.7px;top:72.3px;letter-spacing:-0.45px">[2.310</div>
<div class="tb" style="left:54.0px;width:60px;text-align:right;top:72.3px;letter-spacing:-0.45px">17.9]</div>
<div class="tb" style="left:125.7px;top:72.3px;letter-spacing:-0.45px">[4.946</div>
<div class="tb" style="left:126.0px;width:60px;text-align:right;top:72.3px;letter-spacing:-0.45px">19.4]</div>
<div class="tb" style="left:197.7px;top:72.3px;letter-spacing:-0.45px">[6.869</div>
<div class="tb" style="left:198.0px;width:60px;text-align:right;top:72.3px;letter-spacing:-0.45px">18.1]</div>
<div class="tb" style="left:269.7px;top:72.3px;letter-spacing:-0.45px">[8.792</div>
<div class="tb" style="left:270.0px;width:60px;text-align:right;top:72.3px;letter-spacing:-0.45px">16.6]</div>
<div class="tb" style="left:-0.2px;top:87.2px;letter-spacing:-0.45px">29</div>
<div class="tb" style="left:0px;width:41.8px;text-align:right;top:87.2px;letter-spacing:-0.45px">19.6]</div>
<div class="tb" style="left:53.7px;top:87.2px;letter-spacing:-0.45px">[2.465</div>
<div class="tb" style="left:54.0px;width:60px;text-align:right;top:87.2px;letter-spacing:-0.45px">17.8]</div>
<div class="tb" style="left:125.7px;top:87.2px;letter-spacing:-0.45px">[5.077</div>
<div class="tb" style="left:126.0px;width:60px;text-align:right;top:87.2px;letter-spacing:-0.45px">18.4]</div>
<div class="tb" style="left:197.7px;top:87.2px;letter-spacing:-0.45px">[7.015</div>
<div class="tb" style="left:198.0px;width:60px;text-align:right;top:87.2px;letter-spacing:-0.45px">18.1]</div>
<div class="tb" style="left:269.7px;top:87.2px;letter-spacing:-0.45px">[8.901</div>
<div class="tb" style="left:270.0px;width:60px;text-align:right;top:87.2px;letter-spacing:-0.45px">16.7]</div>
<div class="tb" style="left:-0.2px;top:102.1px;letter-spacing:-0.45px">99</div>
<div class="tb" style="left:0px;width:41.8px;text-align:right;top:102.1px;letter-spacing:-0.45px">19.8]</div>
<div class="tb" style="left:53.7px;top:102.1px;letter-spacing:-0.45px">[2.605</div>
<div class="tb" style="left:54.0px;width:60px;text-align:right;top:102.1px;letter-spacing:-0.45px">19.6]</div>
<div class="tb" style="left:125.7px;top:102.1px;letter-spacing:-0.45px">[5.223</div>
<div class="tb" style="left:126.0px;width:60px;text-align:right;top:102.1px;letter-spacing:-0.45px">18.8]</div>
<div class="tb" style="left:197.7px;top:102.1px;letter-spacing:-0.45px">[7.097</div>
<div class="tb" style="left:198.0px;width:60px;text-align:right;top:102.1px;letter-spacing:-0.45px">18.1]</div>
<div class="tb" style="left:269.7px;top:102.1px;letter-spacing:-0.45px">[9.048</div>
<div class="tb" style="left:270.0px;width:60px;text-align:right;top:102.1px;letter-spacing:-0.45px">15.6]</div>
<div class="tb" style="left:-0.2px;top:117.0px;letter-spacing:-0.45px">81</div>
<div class="tb" style="left:0px;width:41.8px;text-align:right;top:117.0px;letter-spacing:-0.45px">17.9]</div>
<div class="tb" style="left:53.7px;top:117.0px;letter-spacing:-0.45px">[2.749</div>
<div class="tb" style="left:54.0px;width:60px;text-align:right;top:117.0px;letter-spacing:-0.45px">19.1]</div>
<div class="tb" style="left:125.7px;top:117.0px;letter-spacing:-0.45px">[5.312</div>
<div class="tb" style="left:126.0px;width:60px;text-align:right;top:117.0px;letter-spacing:-0.45px">19.6]</div>
<div class="tb" style="left:197.7px;top:117.0px;letter-spacing:-0.45px">[7.170</div>
<div class="tb" style="left:198.0px;width:60px;text-align:right;top:117.0px;letter-spacing:-0.45px">16.9]</div>
<div class="tb" style="left:269.7px;top:117.0px;letter-spacing:-0.45px">[9.099</div>
<div class="tb" style="left:270.0px;width:60px;text-align:right;top:117.0px;letter-spacing:-0.45px">16.4]</div>
<div class="tb" style="left:-0.2px;top:131.9px;letter-spacing:-0.45px">12</div>
<div class="tb" style="left:0px;width:41.8px;text-align:right;top:131.9px;letter-spacing:-0.45px">17.5]</div>
<div class="tb" style="left:53.7px;top:131.9px;letter-spacing:-0.45px">[2.791</div>
<div class="tb" style="left:54.0px;width:60px;text-align:right;top:131.9px;letter-spacing:-0.45px">19.2]</div>
<div class="tb" style="left:125.7px;top:131.9px;letter-spacing:-0.45px">[5.388</div>
<div class="tb" style="left:126.0px;width:60px;text-align:right;top:131.9px;letter-spacing:-0.45px">18.3]</div>
<div class="tb" style="left:197.7px;top:131.9px;letter-spacing:-0.45px">[7.301</div>
<div class="tb" style="left:198.0px;width:60px;text-align:right;top:131.9px;letter-spacing:-0.45px">16.8]</div>
<div class="tb" style="left:269.7px;top:131.9px;letter-spacing:-0.45px">[9.188</div>
<div class="tb" style="left:270.0px;width:60px;text-align:right;top:131.9px;letter-spacing:-0.45px">13.9]</div>
<div class="tb" style="left:-0.2px;top:146.8px;letter-spacing:-0.45px">73</div>
<div class="tb" style="left:0px;width:41.8px;text-align:right;top:146.8px;letter-spacing:-0.45px">16.9]</div>
<div class="tb" style="left:53.7px;top:146.8px;letter-spacing:-0.45px">[2.886</div>
<div class="tb" style="left:54.0px;width:60px;text-align:right;top:146.8px;letter-spacing:-0.45px">18.9]</div>
<div class="tb" style="left:125.7px;top:146.8px;letter-spacing:-0.45px">[5.525</div>
<div class="tb" style="left:126.0px;width:60px;text-align:right;top:146.8px;letter-spacing:-0.45px">17.1]</div>
<div class="tb" style="left:197.7px;top:146.8px;letter-spacing:-0.45px">[7.390</div>
<div class="tb" style="left:198.0px;width:60px;text-align:right;top:146.8px;letter-spacing:-0.45px">17.0]</div>
<div class="tb" style="left:269.7px;top:146.8px;letter-spacing:-0.45px">[9.355</div>
<div class="tb" style="left:270.0px;width:60px;text-align:right;top:146.8px;letter-spacing:-0.45px">15.2]</div>
<div class="tb" style="left:-0.2px;top:161.7px;letter-spacing:-0.45px">01</div>
<div class="tb" style="left:0px;width:41.8px;text-align:right;top:161.7px;letter-spacing:-0.45px">15.5]</div>
<div class="tb" style="left:53.7px;top:161.7px;letter-spacing:-0.45px">[3.050</div>
<div class="tb" style="left:54.0px;width:60px;text-align:right;top:161.7px;letter-spacing:-0.45px">16.2]</div>
<div class="tb" style="left:125.7px;top:161.7px;letter-spacing:-0.45px">[5.631</div>
<div class="tb" style="left:126.0px;width:60px;text-align:right;top:161.7px;letter-spacing:-0.45px">16.3]</div>
<div class="tb" style="left:197.7px;top:161.7px;letter-spacing:-0.45px">[7.448</div>
<div class="tb" style="left:198.0px;width:60px;text-align:right;top:161.7px;letter-spacing:-0.45px">15.8]</div>
<div class="tb" style="left:269.7px;top:161.7px;letter-spacing:-0.45px">[9.474</div>
<div class="tb" style="left:270.0px;width:60px;text-align:right;top:161.7px;letter-spacing:-0.45px">16.0]</div>
<div class="tb" style="left:-0.2px;top:176.6px;letter-spacing:-0.45px">66</div>
<div class="tb" style="left:0px;width:41.8px;text-align:right;top:176.6px;letter-spacing:-0.45px">15.6]</div>
<div class="tb" style="left:53.7px;top:176.6px;letter-spacing:-0.45px">[3.200</div>
<div class="tb" style="left:54.0px;width:60px;text-align:right;top:176.6px;letter-spacing:-0.45px">19.4]</div>
<div class="tb" style="left:125.7px;top:176.6px;letter-spacing:-0.45px">[5.671</div>
<div class="tb" style="left:126.0px;width:60px;text-align:right;top:176.6px;letter-spacing:-0.45px">16.2]</div>
<div class="tb" style="left:197.7px;top:176.6px;letter-spacing:-0.45px">[7.591</div>
<div class="tb" style="left:198.0px;width:60px;text-align:right;top:176.6px;letter-spacing:-0.45px">16.2]</div>
<div class="tb" style="left:269.7px;top:176.6px;letter-spacing:-0.45px">[9.627</div>
<div class="tb" style="left:270.0px;width:60px;text-align:right;top:176.6px;letter-spacing:-0.45px">16.0]</div>
<div class="tb" style="left:-0.2px;top:191.5px;letter-spacing:-0.45px">36</div>
<div class="tb" style="left:0px;width:41.8px;text-align:right;top:191.5px;letter-spacing:-0.45px">16.6]</div>
<div class="tb" style="left:53.7px;top:191.5px;letter-spacing:-0.45px">[3.331</div>
<div class="tb" style="left:54.0px;width:60px;text-align:right;top:191.5px;letter-spacing:-0.45px">17.6]</div>
<div class="tb" style="left:125.7px;top:191.5px;letter-spacing:-0.45px">[5.839</div>
<div class="tb" style="left:126.0px;width:60px;text-align:right;top:191.5px;letter-spacing:-0.45px">18.4]</div>
<div class="tb" style="left:197.7px;top:191.5px;letter-spacing:-0.45px">[7.661</div>
<div class="tb" style="left:198.0px;width:60px;text-align:right;top:191.5px;letter-spacing:-0.45px">16.4]</div>
<div class="tb" style="left:269.7px;top:191.5px;letter-spacing:-0.45px">[9.791</div>
<div class="tb" style="left:270.0px;width:60px;text-align:right;top:191.5px;letter-spacing:-0.45px">17.9]</div>
<div class="tb" style="left:-0.2px;top:206.4px;letter-spacing:-0.45px">24</div>
<div class="tb" style="left:0px;width:41.8px;text-align:right;top:206.4px;letter-spacing:-0.45px">15.5]</div>
<div class="tb" style="left:53.7px;top:206.4px;letter-spacing:-0.45px">[3.498</div>
<div class="tb" style="left:54.0px;width:60px;text-align:right;top:206.4px;letter-spacing:-0.45px">19.0]</div>
<div class="tb" style="left:125.7px;top:206.4px;letter-spacing:-0.45px">[5.924</div>
<div class="tb" style="left:126.0px;width:60px;text-align:right;top:206.4px;letter-spacing:-0.45px">18.9]</div>
<div class="tb" style="left:197.7px;top:206.4px;letter-spacing:-0.45px">[7.752</div>
<div class="tb" style="left:198.0px;width:60px;text-align:right;top:206.4px;letter-spacing:-0.45px">15.8]</div>
<div class="tb" style="left:269.7px;top:206.4px;letter-spacing:-0.45px">[9.910</div>
<div class="tb" style="left:270.0px;width:60px;text-align:right;top:206.4px;letter-spacing:-0.45px">16.1]</div>
<div class="tb" style="left:-0.2px;top:221.3px;letter-spacing:-0.45px">74</div>
<div class="tb" style="left:0px;width:41.8px;text-align:right;top:221.3px;letter-spacing:-0.45px">14.7]</div>
<div class="tb" style="left:53.7px;top:221.3px;letter-spacing:-0.45px">[3.620</div>
<div class="tb" style="left:54.0px;width:60px;text-align:right;top:221.3px;letter-spacing:-0.45px">18.1]</div>
<div class="tb" style="left:125.7px;top:221.3px;letter-spacing:-0.45px">[5.985</div>
<div class="tb" style="left:126.0px;width:60px;text-align:right;top:221.3px;letter-spacing:-0.45px">18.7]</div>
<div class="tb" style="left:197.7px;top:221.3px;letter-spacing:-0.45px">[7.887</div>
<div class="tb" style="left:198.0px;width:60px;text-align:right;top:221.3px;letter-spacing:-0.45px">15.5]</div>
<div class="tb" style="left:269.7px;top:221.3px;letter-spacing:-0.45px">[10.059</div>
<div class="tb" style="left:275.9px;width:60px;text-align:right;top:221.3px;letter-spacing:-0.45px">16.8]</div>
</div>
<div class="a" style="left:42px;top:386px;width:1px;height:14px;background:#9fd0f0;"></div>
<div class="tb" style="left:399.5px;top:358.6px;font-weight:bold;letter-spacing:-0.25px">Deckungsstatistik <span class="teal">[Normal]</span></div>
<div class="tb" style="left:595.5px;top:358.6px;font-weight:bold;letter-spacing:-0.25px">Statistik der Stababst&auml;nde</div>
<div class="tb" style="left:399.5px;top:376.6px;letter-spacing:-0.2px">Anzahl Messwerte</div>
<div class="tb" style="left:554.0px;top:376.6px;letter-spacing:-0.4px">93</div>
<div class="tb" style="left:595.5px;top:376.6px;letter-spacing:-0.2px">Anzahl Messwerte</div>
<div class="tb" style="left:750.3px;top:376.6px;letter-spacing:-0.4px">92</div>
<div class="tb" style="left:399.5px;top:391.5px;letter-spacing:-0.2px">Median (mm)</div>
<div class="tb" style="left:554.0px;top:391.5px;letter-spacing:-0.4px">17.1</div>
<div class="tb" style="left:595.5px;top:391.5px;letter-spacing:-0.2px">Median (mm)</div>
<div class="tb" style="left:750.3px;top:391.5px;letter-spacing:-0.4px">122</div>
<div class="tb" style="left:399.5px;top:406.3px;letter-spacing:-0.2px">Mittel (mm)</div>
<div class="tb" style="left:554.0px;top:406.3px;letter-spacing:-0.4px">17.0</div>
<div class="tb" style="left:595.5px;top:406.3px;letter-spacing:-0.2px">Mittel (mm)</div>
<div class="tb" style="left:750.3px;top:406.3px;letter-spacing:-0.4px">114</div>
<div class="tb" style="left:399.5px;top:421.1px;letter-spacing:-0.2px">Standardabweichung (mm)</div>
<div class="tb" style="left:554.0px;top:421.1px;letter-spacing:-0.4px">2.0</div>
<div class="tb" style="left:595.5px;top:421.1px;letter-spacing:-0.2px">Standardabweichung (mm)</div>
<div class="tb" style="left:750.3px;top:421.1px;letter-spacing:-0.4px">40</div>
<div class="tb" style="left:399.5px;top:435.9px;letter-spacing:-0.2px">Tiefste (mm)</div>
<div class="tb" style="left:554.0px;top:435.9px;letter-spacing:-0.4px">3</div>
<div class="tb" style="left:595.5px;top:435.9px;letter-spacing:-0.2px">Tiefste (mm)</div>
<div class="tb" style="left:750.3px;top:435.9px;letter-spacing:-0.4px">40</div>
<div class="tb" style="left:399.5px;top:450.7px;letter-spacing:-0.2px">H&ouml;chste (mm)</div>
<div class="tb" style="left:554.0px;top:450.7px;letter-spacing:-0.4px">20</div>
<div class="tb" style="left:595.5px;top:450.7px;letter-spacing:-0.2px">H&ouml;chste (mm)</div>
<div class="tb" style="left:750.3px;top:450.7px;letter-spacing:-0.4px">183</div>
<div class="tb" style="left:399.5px;top:477.1px;font-weight:bold;letter-spacing:-0.45px">Einstellungen</div>
<div class="tb" style="left:399.5px;top:494.7px;letter-spacing:-0.18px">Auswahl Messbereich</div>
<div class="tb" style="left:685.0px;top:494.7px;letter-spacing:-0.17px">Standard (None)</div>
<div class="tb" style="left:399.5px;top:509.7px;letter-spacing:-0.18px">Stabdurchmesser &Oslash;1 Scan-X (mm)</div>
<div class="tb" style="left:685.0px;top:509.7px;letter-spacing:-0.17px"><span class="teal">10</span></div>
<div class="tb" style="left:399.5px;top:524.6px;letter-spacing:-0.18px">Stabdurchmesser &Oslash;2 Scan-Y (mm)</div>
<div class="tb" style="left:685.0px;top:524.6px;letter-spacing:-0.17px"><span class="teal">10</span></div>
<div class="tb" style="left:399.5px;top:539.5px;letter-spacing:-0.18px">Artificial Intelligence / Nachbarstabkorrektur (NRC)</div>
<div class="a" style="left:686px;top:543px;width:9px;height:9px;background:#fff;border:1px solid #2a8a9a"></div>
<div class="tb" style="left:399.5px;top:554.5px;letter-spacing:-0.18px">&Uuml;berdeckungskalibrierung</div>
<div class="a" style="left:686px;top:558px;width:9px;height:9px;background:#fff;border:1px solid #2a8a9a"></div>
<div class="tb" style="left:399.5px;top:569.4px;letter-spacing:-0.18px">Mindestdeckung</div>
<div class="a" style="left:686px;top:573px;width:9px;height:9px;background:#fff;border:1px solid #2a8a9a"></div>
<div class="tb" style="left:399.5px;top:584.3px;letter-spacing:-0.18px">&nbsp;&nbsp;Mindestbetondeckungswert (mm)</div>
<div class="tb" style="left:685.0px;top:584.3px;letter-spacing:-0.17px">-</div>
</body></html>
